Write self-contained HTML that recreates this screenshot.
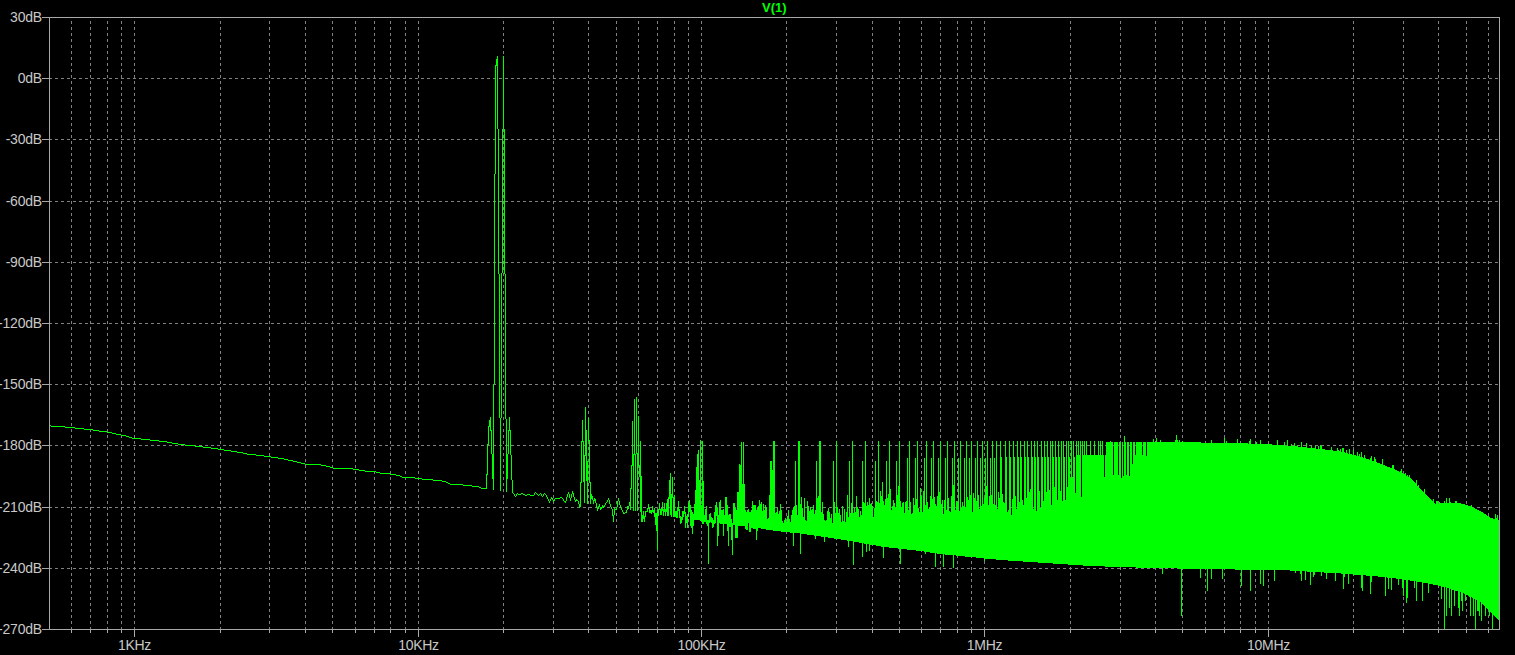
<!DOCTYPE html>
<html><head><meta charset="utf-8"><style>
html,body{margin:0;padding:0;background:#000;width:1515px;height:655px;overflow:hidden}
body{position:relative;font-family:"Liberation Sans",sans-serif;font-size:14px;color:#c8c8c8}
svg{position:absolute;left:0;top:0}
.yl{position:absolute;right:1473px;height:16px;line-height:16px;white-space:nowrap;text-align:right;letter-spacing:-0.2px}
.xl{position:absolute;top:637px;width:101px;text-align:center;line-height:16px;white-space:nowrap;letter-spacing:-0.3px}
.tt{position:absolute;left:0;top:0;color:#00ff00;font-weight:bold;font-size:13px;line-height:16px}
</style></head><body>
<svg width="1515" height="655" viewBox="0 0 1515 655" shape-rendering="crispEdges">
<path fill="#808080" d="M71 21h1v3h-1zM71 27h1v3h-1zM71 33h1v3h-1zM71 39h1v3h-1zM71 45h1v3h-1zM71 51h1v3h-1zM71 57h1v3h-1zM71 63h1v3h-1zM71 69h1v3h-1zM71 75h1v3h-1zM71 81h1v3h-1zM71 87h1v3h-1zM71 93h1v3h-1zM71 99h1v3h-1zM71 105h1v3h-1zM71 111h1v3h-1zM71 117h1v3h-1zM71 123h1v3h-1zM71 129h1v3h-1zM71 135h1v3h-1zM71 141h1v3h-1zM71 147h1v3h-1zM71 153h1v3h-1zM71 159h1v3h-1zM71 165h1v3h-1zM71 171h1v3h-1zM71 177h1v3h-1zM71 183h1v3h-1zM71 189h1v3h-1zM71 195h1v3h-1zM71 201h1v3h-1zM71 207h1v3h-1zM71 213h1v3h-1zM71 219h1v3h-1zM71 225h1v3h-1zM71 231h1v3h-1zM71 237h1v3h-1zM71 243h1v3h-1zM71 249h1v3h-1zM71 255h1v3h-1zM71 261h1v3h-1zM71 267h1v3h-1zM71 273h1v3h-1zM71 279h1v3h-1zM71 285h1v3h-1zM71 291h1v3h-1zM71 297h1v3h-1zM71 303h1v3h-1zM71 309h1v3h-1zM71 315h1v3h-1zM71 321h1v3h-1zM71 327h1v3h-1zM71 333h1v3h-1zM71 339h1v3h-1zM71 345h1v3h-1zM71 351h1v3h-1zM71 357h1v3h-1zM71 363h1v3h-1zM71 369h1v3h-1zM71 375h1v3h-1zM71 381h1v3h-1zM71 387h1v3h-1zM71 393h1v3h-1zM71 399h1v3h-1zM71 405h1v3h-1zM71 411h1v3h-1zM71 417h1v3h-1zM71 423h1v3h-1zM71 429h1v3h-1zM71 435h1v3h-1zM71 441h1v3h-1zM71 447h1v3h-1zM71 453h1v3h-1zM71 459h1v3h-1zM71 465h1v3h-1zM71 471h1v3h-1zM71 477h1v3h-1zM71 483h1v3h-1zM71 489h1v3h-1zM71 495h1v3h-1zM71 501h1v3h-1zM71 507h1v3h-1zM71 513h1v3h-1zM71 519h1v3h-1zM71 525h1v3h-1zM71 531h1v3h-1zM71 537h1v3h-1zM71 543h1v3h-1zM71 549h1v3h-1zM71 555h1v3h-1zM71 561h1v3h-1zM71 567h1v3h-1zM71 573h1v3h-1zM71 579h1v3h-1zM71 585h1v3h-1zM71 591h1v3h-1zM71 597h1v3h-1zM71 603h1v3h-1zM71 609h1v3h-1zM71 615h1v3h-1zM71 621h1v3h-1zM71 627h1v2h-1zM90 21h1v3h-1zM90 27h1v3h-1zM90 33h1v3h-1zM90 39h1v3h-1zM90 45h1v3h-1zM90 51h1v3h-1zM90 57h1v3h-1zM90 63h1v3h-1zM90 69h1v3h-1zM90 75h1v3h-1zM90 81h1v3h-1zM90 87h1v3h-1zM90 93h1v3h-1zM90 99h1v3h-1zM90 105h1v3h-1zM90 111h1v3h-1zM90 117h1v3h-1zM90 123h1v3h-1zM90 129h1v3h-1zM90 135h1v3h-1zM90 141h1v3h-1zM90 147h1v3h-1zM90 153h1v3h-1zM90 159h1v3h-1zM90 165h1v3h-1zM90 171h1v3h-1zM90 177h1v3h-1zM90 183h1v3h-1zM90 189h1v3h-1zM90 195h1v3h-1zM90 201h1v3h-1zM90 207h1v3h-1zM90 213h1v3h-1zM90 219h1v3h-1zM90 225h1v3h-1zM90 231h1v3h-1zM90 237h1v3h-1zM90 243h1v3h-1zM90 249h1v3h-1zM90 255h1v3h-1zM90 261h1v3h-1zM90 267h1v3h-1zM90 273h1v3h-1zM90 279h1v3h-1zM90 285h1v3h-1zM90 291h1v3h-1zM90 297h1v3h-1zM90 303h1v3h-1zM90 309h1v3h-1zM90 315h1v3h-1zM90 321h1v3h-1zM90 327h1v3h-1zM90 333h1v3h-1zM90 339h1v3h-1zM90 345h1v3h-1zM90 351h1v3h-1zM90 357h1v3h-1zM90 363h1v3h-1zM90 369h1v3h-1zM90 375h1v3h-1zM90 381h1v3h-1zM90 387h1v3h-1zM90 393h1v3h-1zM90 399h1v3h-1zM90 405h1v3h-1zM90 411h1v3h-1zM90 417h1v3h-1zM90 423h1v3h-1zM90 429h1v3h-1zM90 435h1v3h-1zM90 441h1v3h-1zM90 447h1v3h-1zM90 453h1v3h-1zM90 459h1v3h-1zM90 465h1v3h-1zM90 471h1v3h-1zM90 477h1v3h-1zM90 483h1v3h-1zM90 489h1v3h-1zM90 495h1v3h-1zM90 501h1v3h-1zM90 507h1v3h-1zM90 513h1v3h-1zM90 519h1v3h-1zM90 525h1v3h-1zM90 531h1v3h-1zM90 537h1v3h-1zM90 543h1v3h-1zM90 549h1v3h-1zM90 555h1v3h-1zM90 561h1v3h-1zM90 567h1v3h-1zM90 573h1v3h-1zM90 579h1v3h-1zM90 585h1v3h-1zM90 591h1v3h-1zM90 597h1v3h-1zM90 603h1v3h-1zM90 609h1v3h-1zM90 615h1v3h-1zM90 621h1v3h-1zM90 627h1v2h-1zM107 21h1v3h-1zM107 27h1v3h-1zM107 33h1v3h-1zM107 39h1v3h-1zM107 45h1v3h-1zM107 51h1v3h-1zM107 57h1v3h-1zM107 63h1v3h-1zM107 69h1v3h-1zM107 75h1v3h-1zM107 81h1v3h-1zM107 87h1v3h-1zM107 93h1v3h-1zM107 99h1v3h-1zM107 105h1v3h-1zM107 111h1v3h-1zM107 117h1v3h-1zM107 123h1v3h-1zM107 129h1v3h-1zM107 135h1v3h-1zM107 141h1v3h-1zM107 147h1v3h-1zM107 153h1v3h-1zM107 159h1v3h-1zM107 165h1v3h-1zM107 171h1v3h-1zM107 177h1v3h-1zM107 183h1v3h-1zM107 189h1v3h-1zM107 195h1v3h-1zM107 201h1v3h-1zM107 207h1v3h-1zM107 213h1v3h-1zM107 219h1v3h-1zM107 225h1v3h-1zM107 231h1v3h-1zM107 237h1v3h-1zM107 243h1v3h-1zM107 249h1v3h-1zM107 255h1v3h-1zM107 261h1v3h-1zM107 267h1v3h-1zM107 273h1v3h-1zM107 279h1v3h-1zM107 285h1v3h-1zM107 291h1v3h-1zM107 297h1v3h-1zM107 303h1v3h-1zM107 309h1v3h-1zM107 315h1v3h-1zM107 321h1v3h-1zM107 327h1v3h-1zM107 333h1v3h-1zM107 339h1v3h-1zM107 345h1v3h-1zM107 351h1v3h-1zM107 357h1v3h-1zM107 363h1v3h-1zM107 369h1v3h-1zM107 375h1v3h-1zM107 381h1v3h-1zM107 387h1v3h-1zM107 393h1v3h-1zM107 399h1v3h-1zM107 405h1v3h-1zM107 411h1v3h-1zM107 417h1v3h-1zM107 423h1v3h-1zM107 429h1v3h-1zM107 435h1v3h-1zM107 441h1v3h-1zM107 447h1v3h-1zM107 453h1v3h-1zM107 459h1v3h-1zM107 465h1v3h-1zM107 471h1v3h-1zM107 477h1v3h-1zM107 483h1v3h-1zM107 489h1v3h-1zM107 495h1v3h-1zM107 501h1v3h-1zM107 507h1v3h-1zM107 513h1v3h-1zM107 519h1v3h-1zM107 525h1v3h-1zM107 531h1v3h-1zM107 537h1v3h-1zM107 543h1v3h-1zM107 549h1v3h-1zM107 555h1v3h-1zM107 561h1v3h-1zM107 567h1v3h-1zM107 573h1v3h-1zM107 579h1v3h-1zM107 585h1v3h-1zM107 591h1v3h-1zM107 597h1v3h-1zM107 603h1v3h-1zM107 609h1v3h-1zM107 615h1v3h-1zM107 621h1v3h-1zM107 627h1v2h-1zM121 21h1v3h-1zM121 27h1v3h-1zM121 33h1v3h-1zM121 39h1v3h-1zM121 45h1v3h-1zM121 51h1v3h-1zM121 57h1v3h-1zM121 63h1v3h-1zM121 69h1v3h-1zM121 75h1v3h-1zM121 81h1v3h-1zM121 87h1v3h-1zM121 93h1v3h-1zM121 99h1v3h-1zM121 105h1v3h-1zM121 111h1v3h-1zM121 117h1v3h-1zM121 123h1v3h-1zM121 129h1v3h-1zM121 135h1v3h-1zM121 141h1v3h-1zM121 147h1v3h-1zM121 153h1v3h-1zM121 159h1v3h-1zM121 165h1v3h-1zM121 171h1v3h-1zM121 177h1v3h-1zM121 183h1v3h-1zM121 189h1v3h-1zM121 195h1v3h-1zM121 201h1v3h-1zM121 207h1v3h-1zM121 213h1v3h-1zM121 219h1v3h-1zM121 225h1v3h-1zM121 231h1v3h-1zM121 237h1v3h-1zM121 243h1v3h-1zM121 249h1v3h-1zM121 255h1v3h-1zM121 261h1v3h-1zM121 267h1v3h-1zM121 273h1v3h-1zM121 279h1v3h-1zM121 285h1v3h-1zM121 291h1v3h-1zM121 297h1v3h-1zM121 303h1v3h-1zM121 309h1v3h-1zM121 315h1v3h-1zM121 321h1v3h-1zM121 327h1v3h-1zM121 333h1v3h-1zM121 339h1v3h-1zM121 345h1v3h-1zM121 351h1v3h-1zM121 357h1v3h-1zM121 363h1v3h-1zM121 369h1v3h-1zM121 375h1v3h-1zM121 381h1v3h-1zM121 387h1v3h-1zM121 393h1v3h-1zM121 399h1v3h-1zM121 405h1v3h-1zM121 411h1v3h-1zM121 417h1v3h-1zM121 423h1v3h-1zM121 429h1v3h-1zM121 435h1v3h-1zM121 441h1v3h-1zM121 447h1v3h-1zM121 453h1v3h-1zM121 459h1v3h-1zM121 465h1v3h-1zM121 471h1v3h-1zM121 477h1v3h-1zM121 483h1v3h-1zM121 489h1v3h-1zM121 495h1v3h-1zM121 501h1v3h-1zM121 507h1v3h-1zM121 513h1v3h-1zM121 519h1v3h-1zM121 525h1v3h-1zM121 531h1v3h-1zM121 537h1v3h-1zM121 543h1v3h-1zM121 549h1v3h-1zM121 555h1v3h-1zM121 561h1v3h-1zM121 567h1v3h-1zM121 573h1v3h-1zM121 579h1v3h-1zM121 585h1v3h-1zM121 591h1v3h-1zM121 597h1v3h-1zM121 603h1v3h-1zM121 609h1v3h-1zM121 615h1v3h-1zM121 621h1v3h-1zM121 627h1v2h-1zM134 21h1v3h-1zM134 27h1v3h-1zM134 33h1v3h-1zM134 39h1v3h-1zM134 45h1v3h-1zM134 51h1v3h-1zM134 57h1v3h-1zM134 63h1v3h-1zM134 69h1v3h-1zM134 75h1v3h-1zM134 81h1v3h-1zM134 87h1v3h-1zM134 93h1v3h-1zM134 99h1v3h-1zM134 105h1v3h-1zM134 111h1v3h-1zM134 117h1v3h-1zM134 123h1v3h-1zM134 129h1v3h-1zM134 135h1v3h-1zM134 141h1v3h-1zM134 147h1v3h-1zM134 153h1v3h-1zM134 159h1v3h-1zM134 165h1v3h-1zM134 171h1v3h-1zM134 177h1v3h-1zM134 183h1v3h-1zM134 189h1v3h-1zM134 195h1v3h-1zM134 201h1v3h-1zM134 207h1v3h-1zM134 213h1v3h-1zM134 219h1v3h-1zM134 225h1v3h-1zM134 231h1v3h-1zM134 237h1v3h-1zM134 243h1v3h-1zM134 249h1v3h-1zM134 255h1v3h-1zM134 261h1v3h-1zM134 267h1v3h-1zM134 273h1v3h-1zM134 279h1v3h-1zM134 285h1v3h-1zM134 291h1v3h-1zM134 297h1v3h-1zM134 303h1v3h-1zM134 309h1v3h-1zM134 315h1v3h-1zM134 321h1v3h-1zM134 327h1v3h-1zM134 333h1v3h-1zM134 339h1v3h-1zM134 345h1v3h-1zM134 351h1v3h-1zM134 357h1v3h-1zM134 363h1v3h-1zM134 369h1v3h-1zM134 375h1v3h-1zM134 381h1v3h-1zM134 387h1v3h-1zM134 393h1v3h-1zM134 399h1v3h-1zM134 405h1v3h-1zM134 411h1v3h-1zM134 417h1v3h-1zM134 423h1v3h-1zM134 429h1v3h-1zM134 435h1v3h-1zM134 441h1v3h-1zM134 447h1v3h-1zM134 453h1v3h-1zM134 459h1v3h-1zM134 465h1v3h-1zM134 471h1v3h-1zM134 477h1v3h-1zM134 483h1v3h-1zM134 489h1v3h-1zM134 495h1v3h-1zM134 501h1v3h-1zM134 507h1v3h-1zM134 513h1v3h-1zM134 519h1v3h-1zM134 525h1v3h-1zM134 531h1v3h-1zM134 537h1v3h-1zM134 543h1v3h-1zM134 549h1v3h-1zM134 555h1v3h-1zM134 561h1v3h-1zM134 567h1v3h-1zM134 573h1v3h-1zM134 579h1v3h-1zM134 585h1v3h-1zM134 591h1v3h-1zM134 597h1v3h-1zM134 603h1v3h-1zM134 609h1v3h-1zM134 615h1v3h-1zM134 621h1v3h-1zM134 627h1v2h-1zM220 21h1v3h-1zM220 27h1v3h-1zM220 33h1v3h-1zM220 39h1v3h-1zM220 45h1v3h-1zM220 51h1v3h-1zM220 57h1v3h-1zM220 63h1v3h-1zM220 69h1v3h-1zM220 75h1v3h-1zM220 81h1v3h-1zM220 87h1v3h-1zM220 93h1v3h-1zM220 99h1v3h-1zM220 105h1v3h-1zM220 111h1v3h-1zM220 117h1v3h-1zM220 123h1v3h-1zM220 129h1v3h-1zM220 135h1v3h-1zM220 141h1v3h-1zM220 147h1v3h-1zM220 153h1v3h-1zM220 159h1v3h-1zM220 165h1v3h-1zM220 171h1v3h-1zM220 177h1v3h-1zM220 183h1v3h-1zM220 189h1v3h-1zM220 195h1v3h-1zM220 201h1v3h-1zM220 207h1v3h-1zM220 213h1v3h-1zM220 219h1v3h-1zM220 225h1v3h-1zM220 231h1v3h-1zM220 237h1v3h-1zM220 243h1v3h-1zM220 249h1v3h-1zM220 255h1v3h-1zM220 261h1v3h-1zM220 267h1v3h-1zM220 273h1v3h-1zM220 279h1v3h-1zM220 285h1v3h-1zM220 291h1v3h-1zM220 297h1v3h-1zM220 303h1v3h-1zM220 309h1v3h-1zM220 315h1v3h-1zM220 321h1v3h-1zM220 327h1v3h-1zM220 333h1v3h-1zM220 339h1v3h-1zM220 345h1v3h-1zM220 351h1v3h-1zM220 357h1v3h-1zM220 363h1v3h-1zM220 369h1v3h-1zM220 375h1v3h-1zM220 381h1v3h-1zM220 387h1v3h-1zM220 393h1v3h-1zM220 399h1v3h-1zM220 405h1v3h-1zM220 411h1v3h-1zM220 417h1v3h-1zM220 423h1v3h-1zM220 429h1v3h-1zM220 435h1v3h-1zM220 441h1v3h-1zM220 447h1v3h-1zM220 453h1v3h-1zM220 459h1v3h-1zM220 465h1v3h-1zM220 471h1v3h-1zM220 477h1v3h-1zM220 483h1v3h-1zM220 489h1v3h-1zM220 495h1v3h-1zM220 501h1v3h-1zM220 507h1v3h-1zM220 513h1v3h-1zM220 519h1v3h-1zM220 525h1v3h-1zM220 531h1v3h-1zM220 537h1v3h-1zM220 543h1v3h-1zM220 549h1v3h-1zM220 555h1v3h-1zM220 561h1v3h-1zM220 567h1v3h-1zM220 573h1v3h-1zM220 579h1v3h-1zM220 585h1v3h-1zM220 591h1v3h-1zM220 597h1v3h-1zM220 603h1v3h-1zM220 609h1v3h-1zM220 615h1v3h-1zM220 621h1v3h-1zM220 627h1v2h-1zM269 21h1v3h-1zM269 27h1v3h-1zM269 33h1v3h-1zM269 39h1v3h-1zM269 45h1v3h-1zM269 51h1v3h-1zM269 57h1v3h-1zM269 63h1v3h-1zM269 69h1v3h-1zM269 75h1v3h-1zM269 81h1v3h-1zM269 87h1v3h-1zM269 93h1v3h-1zM269 99h1v3h-1zM269 105h1v3h-1zM269 111h1v3h-1zM269 117h1v3h-1zM269 123h1v3h-1zM269 129h1v3h-1zM269 135h1v3h-1zM269 141h1v3h-1zM269 147h1v3h-1zM269 153h1v3h-1zM269 159h1v3h-1zM269 165h1v3h-1zM269 171h1v3h-1zM269 177h1v3h-1zM269 183h1v3h-1zM269 189h1v3h-1zM269 195h1v3h-1zM269 201h1v3h-1zM269 207h1v3h-1zM269 213h1v3h-1zM269 219h1v3h-1zM269 225h1v3h-1zM269 231h1v3h-1zM269 237h1v3h-1zM269 243h1v3h-1zM269 249h1v3h-1zM269 255h1v3h-1zM269 261h1v3h-1zM269 267h1v3h-1zM269 273h1v3h-1zM269 279h1v3h-1zM269 285h1v3h-1zM269 291h1v3h-1zM269 297h1v3h-1zM269 303h1v3h-1zM269 309h1v3h-1zM269 315h1v3h-1zM269 321h1v3h-1zM269 327h1v3h-1zM269 333h1v3h-1zM269 339h1v3h-1zM269 345h1v3h-1zM269 351h1v3h-1zM269 357h1v3h-1zM269 363h1v3h-1zM269 369h1v3h-1zM269 375h1v3h-1zM269 381h1v3h-1zM269 387h1v3h-1zM269 393h1v3h-1zM269 399h1v3h-1zM269 405h1v3h-1zM269 411h1v3h-1zM269 417h1v3h-1zM269 423h1v3h-1zM269 429h1v3h-1zM269 435h1v3h-1zM269 441h1v3h-1zM269 447h1v3h-1zM269 453h1v3h-1zM269 459h1v3h-1zM269 465h1v3h-1zM269 471h1v3h-1zM269 477h1v3h-1zM269 483h1v3h-1zM269 489h1v3h-1zM269 495h1v3h-1zM269 501h1v3h-1zM269 507h1v3h-1zM269 513h1v3h-1zM269 519h1v3h-1zM269 525h1v3h-1zM269 531h1v3h-1zM269 537h1v3h-1zM269 543h1v3h-1zM269 549h1v3h-1zM269 555h1v3h-1zM269 561h1v3h-1zM269 567h1v3h-1zM269 573h1v3h-1zM269 579h1v3h-1zM269 585h1v3h-1zM269 591h1v3h-1zM269 597h1v3h-1zM269 603h1v3h-1zM269 609h1v3h-1zM269 615h1v3h-1zM269 621h1v3h-1zM269 627h1v2h-1zM305 21h1v3h-1zM305 27h1v3h-1zM305 33h1v3h-1zM305 39h1v3h-1zM305 45h1v3h-1zM305 51h1v3h-1zM305 57h1v3h-1zM305 63h1v3h-1zM305 69h1v3h-1zM305 75h1v3h-1zM305 81h1v3h-1zM305 87h1v3h-1zM305 93h1v3h-1zM305 99h1v3h-1zM305 105h1v3h-1zM305 111h1v3h-1zM305 117h1v3h-1zM305 123h1v3h-1zM305 129h1v3h-1zM305 135h1v3h-1zM305 141h1v3h-1zM305 147h1v3h-1zM305 153h1v3h-1zM305 159h1v3h-1zM305 165h1v3h-1zM305 171h1v3h-1zM305 177h1v3h-1zM305 183h1v3h-1zM305 189h1v3h-1zM305 195h1v3h-1zM305 201h1v3h-1zM305 207h1v3h-1zM305 213h1v3h-1zM305 219h1v3h-1zM305 225h1v3h-1zM305 231h1v3h-1zM305 237h1v3h-1zM305 243h1v3h-1zM305 249h1v3h-1zM305 255h1v3h-1zM305 261h1v3h-1zM305 267h1v3h-1zM305 273h1v3h-1zM305 279h1v3h-1zM305 285h1v3h-1zM305 291h1v3h-1zM305 297h1v3h-1zM305 303h1v3h-1zM305 309h1v3h-1zM305 315h1v3h-1zM305 321h1v3h-1zM305 327h1v3h-1zM305 333h1v3h-1zM305 339h1v3h-1zM305 345h1v3h-1zM305 351h1v3h-1zM305 357h1v3h-1zM305 363h1v3h-1zM305 369h1v3h-1zM305 375h1v3h-1zM305 381h1v3h-1zM305 387h1v3h-1zM305 393h1v3h-1zM305 399h1v3h-1zM305 405h1v3h-1zM305 411h1v3h-1zM305 417h1v3h-1zM305 423h1v3h-1zM305 429h1v3h-1zM305 435h1v3h-1zM305 441h1v3h-1zM305 447h1v3h-1zM305 453h1v3h-1zM305 459h1v3h-1zM305 465h1v3h-1zM305 471h1v3h-1zM305 477h1v3h-1zM305 483h1v3h-1zM305 489h1v3h-1zM305 495h1v3h-1zM305 501h1v3h-1zM305 507h1v3h-1zM305 513h1v3h-1zM305 519h1v3h-1zM305 525h1v3h-1zM305 531h1v3h-1zM305 537h1v3h-1zM305 543h1v3h-1zM305 549h1v3h-1zM305 555h1v3h-1zM305 561h1v3h-1zM305 567h1v3h-1zM305 573h1v3h-1zM305 579h1v3h-1zM305 585h1v3h-1zM305 591h1v3h-1zM305 597h1v3h-1zM305 603h1v3h-1zM305 609h1v3h-1zM305 615h1v3h-1zM305 621h1v3h-1zM305 627h1v2h-1zM332 21h1v3h-1zM332 27h1v3h-1zM332 33h1v3h-1zM332 39h1v3h-1zM332 45h1v3h-1zM332 51h1v3h-1zM332 57h1v3h-1zM332 63h1v3h-1zM332 69h1v3h-1zM332 75h1v3h-1zM332 81h1v3h-1zM332 87h1v3h-1zM332 93h1v3h-1zM332 99h1v3h-1zM332 105h1v3h-1zM332 111h1v3h-1zM332 117h1v3h-1zM332 123h1v3h-1zM332 129h1v3h-1zM332 135h1v3h-1zM332 141h1v3h-1zM332 147h1v3h-1zM332 153h1v3h-1zM332 159h1v3h-1zM332 165h1v3h-1zM332 171h1v3h-1zM332 177h1v3h-1zM332 183h1v3h-1zM332 189h1v3h-1zM332 195h1v3h-1zM332 201h1v3h-1zM332 207h1v3h-1zM332 213h1v3h-1zM332 219h1v3h-1zM332 225h1v3h-1zM332 231h1v3h-1zM332 237h1v3h-1zM332 243h1v3h-1zM332 249h1v3h-1zM332 255h1v3h-1zM332 261h1v3h-1zM332 267h1v3h-1zM332 273h1v3h-1zM332 279h1v3h-1zM332 285h1v3h-1zM332 291h1v3h-1zM332 297h1v3h-1zM332 303h1v3h-1zM332 309h1v3h-1zM332 315h1v3h-1zM332 321h1v3h-1zM332 327h1v3h-1zM332 333h1v3h-1zM332 339h1v3h-1zM332 345h1v3h-1zM332 351h1v3h-1zM332 357h1v3h-1zM332 363h1v3h-1zM332 369h1v3h-1zM332 375h1v3h-1zM332 381h1v3h-1zM332 387h1v3h-1zM332 393h1v3h-1zM332 399h1v3h-1zM332 405h1v3h-1zM332 411h1v3h-1zM332 417h1v3h-1zM332 423h1v3h-1zM332 429h1v3h-1zM332 435h1v3h-1zM332 441h1v3h-1zM332 447h1v3h-1zM332 453h1v3h-1zM332 459h1v3h-1zM332 465h1v3h-1zM332 471h1v3h-1zM332 477h1v3h-1zM332 483h1v3h-1zM332 489h1v3h-1zM332 495h1v3h-1zM332 501h1v3h-1zM332 507h1v3h-1zM332 513h1v3h-1zM332 519h1v3h-1zM332 525h1v3h-1zM332 531h1v3h-1zM332 537h1v3h-1zM332 543h1v3h-1zM332 549h1v3h-1zM332 555h1v3h-1zM332 561h1v3h-1zM332 567h1v3h-1zM332 573h1v3h-1zM332 579h1v3h-1zM332 585h1v3h-1zM332 591h1v3h-1zM332 597h1v3h-1zM332 603h1v3h-1zM332 609h1v3h-1zM332 615h1v3h-1zM332 621h1v3h-1zM332 627h1v2h-1zM355 21h1v3h-1zM355 27h1v3h-1zM355 33h1v3h-1zM355 39h1v3h-1zM355 45h1v3h-1zM355 51h1v3h-1zM355 57h1v3h-1zM355 63h1v3h-1zM355 69h1v3h-1zM355 75h1v3h-1zM355 81h1v3h-1zM355 87h1v3h-1zM355 93h1v3h-1zM355 99h1v3h-1zM355 105h1v3h-1zM355 111h1v3h-1zM355 117h1v3h-1zM355 123h1v3h-1zM355 129h1v3h-1zM355 135h1v3h-1zM355 141h1v3h-1zM355 147h1v3h-1zM355 153h1v3h-1zM355 159h1v3h-1zM355 165h1v3h-1zM355 171h1v3h-1zM355 177h1v3h-1zM355 183h1v3h-1zM355 189h1v3h-1zM355 195h1v3h-1zM355 201h1v3h-1zM355 207h1v3h-1zM355 213h1v3h-1zM355 219h1v3h-1zM355 225h1v3h-1zM355 231h1v3h-1zM355 237h1v3h-1zM355 243h1v3h-1zM355 249h1v3h-1zM355 255h1v3h-1zM355 261h1v3h-1zM355 267h1v3h-1zM355 273h1v3h-1zM355 279h1v3h-1zM355 285h1v3h-1zM355 291h1v3h-1zM355 297h1v3h-1zM355 303h1v3h-1zM355 309h1v3h-1zM355 315h1v3h-1zM355 321h1v3h-1zM355 327h1v3h-1zM355 333h1v3h-1zM355 339h1v3h-1zM355 345h1v3h-1zM355 351h1v3h-1zM355 357h1v3h-1zM355 363h1v3h-1zM355 369h1v3h-1zM355 375h1v3h-1zM355 381h1v3h-1zM355 387h1v3h-1zM355 393h1v3h-1zM355 399h1v3h-1zM355 405h1v3h-1zM355 411h1v3h-1zM355 417h1v3h-1zM355 423h1v3h-1zM355 429h1v3h-1zM355 435h1v3h-1zM355 441h1v3h-1zM355 447h1v3h-1zM355 453h1v3h-1zM355 459h1v3h-1zM355 465h1v3h-1zM355 471h1v3h-1zM355 477h1v3h-1zM355 483h1v3h-1zM355 489h1v3h-1zM355 495h1v3h-1zM355 501h1v3h-1zM355 507h1v3h-1zM355 513h1v3h-1zM355 519h1v3h-1zM355 525h1v3h-1zM355 531h1v3h-1zM355 537h1v3h-1zM355 543h1v3h-1zM355 549h1v3h-1zM355 555h1v3h-1zM355 561h1v3h-1zM355 567h1v3h-1zM355 573h1v3h-1zM355 579h1v3h-1zM355 585h1v3h-1zM355 591h1v3h-1zM355 597h1v3h-1zM355 603h1v3h-1zM355 609h1v3h-1zM355 615h1v3h-1zM355 621h1v3h-1zM355 627h1v2h-1zM374 21h1v3h-1zM374 27h1v3h-1zM374 33h1v3h-1zM374 39h1v3h-1zM374 45h1v3h-1zM374 51h1v3h-1zM374 57h1v3h-1zM374 63h1v3h-1zM374 69h1v3h-1zM374 75h1v3h-1zM374 81h1v3h-1zM374 87h1v3h-1zM374 93h1v3h-1zM374 99h1v3h-1zM374 105h1v3h-1zM374 111h1v3h-1zM374 117h1v3h-1zM374 123h1v3h-1zM374 129h1v3h-1zM374 135h1v3h-1zM374 141h1v3h-1zM374 147h1v3h-1zM374 153h1v3h-1zM374 159h1v3h-1zM374 165h1v3h-1zM374 171h1v3h-1zM374 177h1v3h-1zM374 183h1v3h-1zM374 189h1v3h-1zM374 195h1v3h-1zM374 201h1v3h-1zM374 207h1v3h-1zM374 213h1v3h-1zM374 219h1v3h-1zM374 225h1v3h-1zM374 231h1v3h-1zM374 237h1v3h-1zM374 243h1v3h-1zM374 249h1v3h-1zM374 255h1v3h-1zM374 261h1v3h-1zM374 267h1v3h-1zM374 273h1v3h-1zM374 279h1v3h-1zM374 285h1v3h-1zM374 291h1v3h-1zM374 297h1v3h-1zM374 303h1v3h-1zM374 309h1v3h-1zM374 315h1v3h-1zM374 321h1v3h-1zM374 327h1v3h-1zM374 333h1v3h-1zM374 339h1v3h-1zM374 345h1v3h-1zM374 351h1v3h-1zM374 357h1v3h-1zM374 363h1v3h-1zM374 369h1v3h-1zM374 375h1v3h-1zM374 381h1v3h-1zM374 387h1v3h-1zM374 393h1v3h-1zM374 399h1v3h-1zM374 405h1v3h-1zM374 411h1v3h-1zM374 417h1v3h-1zM374 423h1v3h-1zM374 429h1v3h-1zM374 435h1v3h-1zM374 441h1v3h-1zM374 447h1v3h-1zM374 453h1v3h-1zM374 459h1v3h-1zM374 465h1v3h-1zM374 471h1v3h-1zM374 477h1v3h-1zM374 483h1v3h-1zM374 489h1v3h-1zM374 495h1v3h-1zM374 501h1v3h-1zM374 507h1v3h-1zM374 513h1v3h-1zM374 519h1v3h-1zM374 525h1v3h-1zM374 531h1v3h-1zM374 537h1v3h-1zM374 543h1v3h-1zM374 549h1v3h-1zM374 555h1v3h-1zM374 561h1v3h-1zM374 567h1v3h-1zM374 573h1v3h-1zM374 579h1v3h-1zM374 585h1v3h-1zM374 591h1v3h-1zM374 597h1v3h-1zM374 603h1v3h-1zM374 609h1v3h-1zM374 615h1v3h-1zM374 621h1v3h-1zM374 627h1v2h-1zM390 21h1v3h-1zM390 27h1v3h-1zM390 33h1v3h-1zM390 39h1v3h-1zM390 45h1v3h-1zM390 51h1v3h-1zM390 57h1v3h-1zM390 63h1v3h-1zM390 69h1v3h-1zM390 75h1v3h-1zM390 81h1v3h-1zM390 87h1v3h-1zM390 93h1v3h-1zM390 99h1v3h-1zM390 105h1v3h-1zM390 111h1v3h-1zM390 117h1v3h-1zM390 123h1v3h-1zM390 129h1v3h-1zM390 135h1v3h-1zM390 141h1v3h-1zM390 147h1v3h-1zM390 153h1v3h-1zM390 159h1v3h-1zM390 165h1v3h-1zM390 171h1v3h-1zM390 177h1v3h-1zM390 183h1v3h-1zM390 189h1v3h-1zM390 195h1v3h-1zM390 201h1v3h-1zM390 207h1v3h-1zM390 213h1v3h-1zM390 219h1v3h-1zM390 225h1v3h-1zM390 231h1v3h-1zM390 237h1v3h-1zM390 243h1v3h-1zM390 249h1v3h-1zM390 255h1v3h-1zM390 261h1v3h-1zM390 267h1v3h-1zM390 273h1v3h-1zM390 279h1v3h-1zM390 285h1v3h-1zM390 291h1v3h-1zM390 297h1v3h-1zM390 303h1v3h-1zM390 309h1v3h-1zM390 315h1v3h-1zM390 321h1v3h-1zM390 327h1v3h-1zM390 333h1v3h-1zM390 339h1v3h-1zM390 345h1v3h-1zM390 351h1v3h-1zM390 357h1v3h-1zM390 363h1v3h-1zM390 369h1v3h-1zM390 375h1v3h-1zM390 381h1v3h-1zM390 387h1v3h-1zM390 393h1v3h-1zM390 399h1v3h-1zM390 405h1v3h-1zM390 411h1v3h-1zM390 417h1v3h-1zM390 423h1v3h-1zM390 429h1v3h-1zM390 435h1v3h-1zM390 441h1v3h-1zM390 447h1v3h-1zM390 453h1v3h-1zM390 459h1v3h-1zM390 465h1v3h-1zM390 471h1v3h-1zM390 477h1v3h-1zM390 483h1v3h-1zM390 489h1v3h-1zM390 495h1v3h-1zM390 501h1v3h-1zM390 507h1v3h-1zM390 513h1v3h-1zM390 519h1v3h-1zM390 525h1v3h-1zM390 531h1v3h-1zM390 537h1v3h-1zM390 543h1v3h-1zM390 549h1v3h-1zM390 555h1v3h-1zM390 561h1v3h-1zM390 567h1v3h-1zM390 573h1v3h-1zM390 579h1v3h-1zM390 585h1v3h-1zM390 591h1v3h-1zM390 597h1v3h-1zM390 603h1v3h-1zM390 609h1v3h-1zM390 615h1v3h-1zM390 621h1v3h-1zM390 627h1v2h-1zM405 21h1v3h-1zM405 27h1v3h-1zM405 33h1v3h-1zM405 39h1v3h-1zM405 45h1v3h-1zM405 51h1v3h-1zM405 57h1v3h-1zM405 63h1v3h-1zM405 69h1v3h-1zM405 75h1v3h-1zM405 81h1v3h-1zM405 87h1v3h-1zM405 93h1v3h-1zM405 99h1v3h-1zM405 105h1v3h-1zM405 111h1v3h-1zM405 117h1v3h-1zM405 123h1v3h-1zM405 129h1v3h-1zM405 135h1v3h-1zM405 141h1v3h-1zM405 147h1v3h-1zM405 153h1v3h-1zM405 159h1v3h-1zM405 165h1v3h-1zM405 171h1v3h-1zM405 177h1v3h-1zM405 183h1v3h-1zM405 189h1v3h-1zM405 195h1v3h-1zM405 201h1v3h-1zM405 207h1v3h-1zM405 213h1v3h-1zM405 219h1v3h-1zM405 225h1v3h-1zM405 231h1v3h-1zM405 237h1v3h-1zM405 243h1v3h-1zM405 249h1v3h-1zM405 255h1v3h-1zM405 261h1v3h-1zM405 267h1v3h-1zM405 273h1v3h-1zM405 279h1v3h-1zM405 285h1v3h-1zM405 291h1v3h-1zM405 297h1v3h-1zM405 303h1v3h-1zM405 309h1v3h-1zM405 315h1v3h-1zM405 321h1v3h-1zM405 327h1v3h-1zM405 333h1v3h-1zM405 339h1v3h-1zM405 345h1v3h-1zM405 351h1v3h-1zM405 357h1v3h-1zM405 363h1v3h-1zM405 369h1v3h-1zM405 375h1v3h-1zM405 381h1v3h-1zM405 387h1v3h-1zM405 393h1v3h-1zM405 399h1v3h-1zM405 405h1v3h-1zM405 411h1v3h-1zM405 417h1v3h-1zM405 423h1v3h-1zM405 429h1v3h-1zM405 435h1v3h-1zM405 441h1v3h-1zM405 447h1v3h-1zM405 453h1v3h-1zM405 459h1v3h-1zM405 465h1v3h-1zM405 471h1v3h-1zM405 477h1v3h-1zM405 483h1v3h-1zM405 489h1v3h-1zM405 495h1v3h-1zM405 501h1v3h-1zM405 507h1v3h-1zM405 513h1v3h-1zM405 519h1v3h-1zM405 525h1v3h-1zM405 531h1v3h-1zM405 537h1v3h-1zM405 543h1v3h-1zM405 549h1v3h-1zM405 555h1v3h-1zM405 561h1v3h-1zM405 567h1v3h-1zM405 573h1v3h-1zM405 579h1v3h-1zM405 585h1v3h-1zM405 591h1v3h-1zM405 597h1v3h-1zM405 603h1v3h-1zM405 609h1v3h-1zM405 615h1v3h-1zM405 621h1v3h-1zM405 627h1v2h-1zM418 21h1v3h-1zM418 27h1v3h-1zM418 33h1v3h-1zM418 39h1v3h-1zM418 45h1v3h-1zM418 51h1v3h-1zM418 57h1v3h-1zM418 63h1v3h-1zM418 69h1v3h-1zM418 75h1v3h-1zM418 81h1v3h-1zM418 87h1v3h-1zM418 93h1v3h-1zM418 99h1v3h-1zM418 105h1v3h-1zM418 111h1v3h-1zM418 117h1v3h-1zM418 123h1v3h-1zM418 129h1v3h-1zM418 135h1v3h-1zM418 141h1v3h-1zM418 147h1v3h-1zM418 153h1v3h-1zM418 159h1v3h-1zM418 165h1v3h-1zM418 171h1v3h-1zM418 177h1v3h-1zM418 183h1v3h-1zM418 189h1v3h-1zM418 195h1v3h-1zM418 201h1v3h-1zM418 207h1v3h-1zM418 213h1v3h-1zM418 219h1v3h-1zM418 225h1v3h-1zM418 231h1v3h-1zM418 237h1v3h-1zM418 243h1v3h-1zM418 249h1v3h-1zM418 255h1v3h-1zM418 261h1v3h-1zM418 267h1v3h-1zM418 273h1v3h-1zM418 279h1v3h-1zM418 285h1v3h-1zM418 291h1v3h-1zM418 297h1v3h-1zM418 303h1v3h-1zM418 309h1v3h-1zM418 315h1v3h-1zM418 321h1v3h-1zM418 327h1v3h-1zM418 333h1v3h-1zM418 339h1v3h-1zM418 345h1v3h-1zM418 351h1v3h-1zM418 357h1v3h-1zM418 363h1v3h-1zM418 369h1v3h-1zM418 375h1v3h-1zM418 381h1v3h-1zM418 387h1v3h-1zM418 393h1v3h-1zM418 399h1v3h-1zM418 405h1v3h-1zM418 411h1v3h-1zM418 417h1v3h-1zM418 423h1v3h-1zM418 429h1v3h-1zM418 435h1v3h-1zM418 441h1v3h-1zM418 447h1v3h-1zM418 453h1v3h-1zM418 459h1v3h-1zM418 465h1v3h-1zM418 471h1v3h-1zM418 477h1v3h-1zM418 483h1v3h-1zM418 489h1v3h-1zM418 495h1v3h-1zM418 501h1v3h-1zM418 507h1v3h-1zM418 513h1v3h-1zM418 519h1v3h-1zM418 525h1v3h-1zM418 531h1v3h-1zM418 537h1v3h-1zM418 543h1v3h-1zM418 549h1v3h-1zM418 555h1v3h-1zM418 561h1v3h-1zM418 567h1v3h-1zM418 573h1v3h-1zM418 579h1v3h-1zM418 585h1v3h-1zM418 591h1v3h-1zM418 597h1v3h-1zM418 603h1v3h-1zM418 609h1v3h-1zM418 615h1v3h-1zM418 621h1v3h-1zM418 627h1v2h-1zM503 21h1v3h-1zM503 27h1v3h-1zM503 33h1v3h-1zM503 39h1v3h-1zM503 45h1v3h-1zM503 51h1v3h-1zM503 57h1v3h-1zM503 63h1v3h-1zM503 69h1v3h-1zM503 75h1v3h-1zM503 81h1v3h-1zM503 87h1v3h-1zM503 93h1v3h-1zM503 99h1v3h-1zM503 105h1v3h-1zM503 111h1v3h-1zM503 117h1v3h-1zM503 123h1v3h-1zM503 129h1v3h-1zM503 135h1v3h-1zM503 141h1v3h-1zM503 147h1v3h-1zM503 153h1v3h-1zM503 159h1v3h-1zM503 165h1v3h-1zM503 171h1v3h-1zM503 177h1v3h-1zM503 183h1v3h-1zM503 189h1v3h-1zM503 195h1v3h-1zM503 201h1v3h-1zM503 207h1v3h-1zM503 213h1v3h-1zM503 219h1v3h-1zM503 225h1v3h-1zM503 231h1v3h-1zM503 237h1v3h-1zM503 243h1v3h-1zM503 249h1v3h-1zM503 255h1v3h-1zM503 261h1v3h-1zM503 267h1v3h-1zM503 273h1v3h-1zM503 279h1v3h-1zM503 285h1v3h-1zM503 291h1v3h-1zM503 297h1v3h-1zM503 303h1v3h-1zM503 309h1v3h-1zM503 315h1v3h-1zM503 321h1v3h-1zM503 327h1v3h-1zM503 333h1v3h-1zM503 339h1v3h-1zM503 345h1v3h-1zM503 351h1v3h-1zM503 357h1v3h-1zM503 363h1v3h-1zM503 369h1v3h-1zM503 375h1v3h-1zM503 381h1v3h-1zM503 387h1v3h-1zM503 393h1v3h-1zM503 399h1v3h-1zM503 405h1v3h-1zM503 411h1v3h-1zM503 417h1v3h-1zM503 423h1v3h-1zM503 429h1v3h-1zM503 435h1v3h-1zM503 441h1v3h-1zM503 447h1v3h-1zM503 453h1v3h-1zM503 459h1v3h-1zM503 465h1v3h-1zM503 471h1v3h-1zM503 477h1v3h-1zM503 483h1v3h-1zM503 489h1v3h-1zM503 495h1v3h-1zM503 501h1v3h-1zM503 507h1v3h-1zM503 513h1v3h-1zM503 519h1v3h-1zM503 525h1v3h-1zM503 531h1v3h-1zM503 537h1v3h-1zM503 543h1v3h-1zM503 549h1v3h-1zM503 555h1v3h-1zM503 561h1v3h-1zM503 567h1v3h-1zM503 573h1v3h-1zM503 579h1v3h-1zM503 585h1v3h-1zM503 591h1v3h-1zM503 597h1v3h-1zM503 603h1v3h-1zM503 609h1v3h-1zM503 615h1v3h-1zM503 621h1v3h-1zM503 627h1v2h-1zM553 21h1v3h-1zM553 27h1v3h-1zM553 33h1v3h-1zM553 39h1v3h-1zM553 45h1v3h-1zM553 51h1v3h-1zM553 57h1v3h-1zM553 63h1v3h-1zM553 69h1v3h-1zM553 75h1v3h-1zM553 81h1v3h-1zM553 87h1v3h-1zM553 93h1v3h-1zM553 99h1v3h-1zM553 105h1v3h-1zM553 111h1v3h-1zM553 117h1v3h-1zM553 123h1v3h-1zM553 129h1v3h-1zM553 135h1v3h-1zM553 141h1v3h-1zM553 147h1v3h-1zM553 153h1v3h-1zM553 159h1v3h-1zM553 165h1v3h-1zM553 171h1v3h-1zM553 177h1v3h-1zM553 183h1v3h-1zM553 189h1v3h-1zM553 195h1v3h-1zM553 201h1v3h-1zM553 207h1v3h-1zM553 213h1v3h-1zM553 219h1v3h-1zM553 225h1v3h-1zM553 231h1v3h-1zM553 237h1v3h-1zM553 243h1v3h-1zM553 249h1v3h-1zM553 255h1v3h-1zM553 261h1v3h-1zM553 267h1v3h-1zM553 273h1v3h-1zM553 279h1v3h-1zM553 285h1v3h-1zM553 291h1v3h-1zM553 297h1v3h-1zM553 303h1v3h-1zM553 309h1v3h-1zM553 315h1v3h-1zM553 321h1v3h-1zM553 327h1v3h-1zM553 333h1v3h-1zM553 339h1v3h-1zM553 345h1v3h-1zM553 351h1v3h-1zM553 357h1v3h-1zM553 363h1v3h-1zM553 369h1v3h-1zM553 375h1v3h-1zM553 381h1v3h-1zM553 387h1v3h-1zM553 393h1v3h-1zM553 399h1v3h-1zM553 405h1v3h-1zM553 411h1v3h-1zM553 417h1v3h-1zM553 423h1v3h-1zM553 429h1v3h-1zM553 435h1v3h-1zM553 441h1v3h-1zM553 447h1v3h-1zM553 453h1v3h-1zM553 459h1v3h-1zM553 465h1v3h-1zM553 471h1v3h-1zM553 477h1v3h-1zM553 483h1v3h-1zM553 489h1v3h-1zM553 495h1v3h-1zM553 501h1v3h-1zM553 507h1v3h-1zM553 513h1v3h-1zM553 519h1v3h-1zM553 525h1v3h-1zM553 531h1v3h-1zM553 537h1v3h-1zM553 543h1v3h-1zM553 549h1v3h-1zM553 555h1v3h-1zM553 561h1v3h-1zM553 567h1v3h-1zM553 573h1v3h-1zM553 579h1v3h-1zM553 585h1v3h-1zM553 591h1v3h-1zM553 597h1v3h-1zM553 603h1v3h-1zM553 609h1v3h-1zM553 615h1v3h-1zM553 621h1v3h-1zM553 627h1v2h-1zM588 21h1v3h-1zM588 27h1v3h-1zM588 33h1v3h-1zM588 39h1v3h-1zM588 45h1v3h-1zM588 51h1v3h-1zM588 57h1v3h-1zM588 63h1v3h-1zM588 69h1v3h-1zM588 75h1v3h-1zM588 81h1v3h-1zM588 87h1v3h-1zM588 93h1v3h-1zM588 99h1v3h-1zM588 105h1v3h-1zM588 111h1v3h-1zM588 117h1v3h-1zM588 123h1v3h-1zM588 129h1v3h-1zM588 135h1v3h-1zM588 141h1v3h-1zM588 147h1v3h-1zM588 153h1v3h-1zM588 159h1v3h-1zM588 165h1v3h-1zM588 171h1v3h-1zM588 177h1v3h-1zM588 183h1v3h-1zM588 189h1v3h-1zM588 195h1v3h-1zM588 201h1v3h-1zM588 207h1v3h-1zM588 213h1v3h-1zM588 219h1v3h-1zM588 225h1v3h-1zM588 231h1v3h-1zM588 237h1v3h-1zM588 243h1v3h-1zM588 249h1v3h-1zM588 255h1v3h-1zM588 261h1v3h-1zM588 267h1v3h-1zM588 273h1v3h-1zM588 279h1v3h-1zM588 285h1v3h-1zM588 291h1v3h-1zM588 297h1v3h-1zM588 303h1v3h-1zM588 309h1v3h-1zM588 315h1v3h-1zM588 321h1v3h-1zM588 327h1v3h-1zM588 333h1v3h-1zM588 339h1v3h-1zM588 345h1v3h-1zM588 351h1v3h-1zM588 357h1v3h-1zM588 363h1v3h-1zM588 369h1v3h-1zM588 375h1v3h-1zM588 381h1v3h-1zM588 387h1v3h-1zM588 393h1v3h-1zM588 399h1v3h-1zM588 405h1v3h-1zM588 411h1v3h-1zM588 417h1v3h-1zM588 423h1v3h-1zM588 429h1v3h-1zM588 435h1v3h-1zM588 441h1v3h-1zM588 447h1v3h-1zM588 453h1v3h-1zM588 459h1v3h-1zM588 465h1v3h-1zM588 471h1v3h-1zM588 477h1v3h-1zM588 483h1v3h-1zM588 489h1v3h-1zM588 495h1v3h-1zM588 501h1v3h-1zM588 507h1v3h-1zM588 513h1v3h-1zM588 519h1v3h-1zM588 525h1v3h-1zM588 531h1v3h-1zM588 537h1v3h-1zM588 543h1v3h-1zM588 549h1v3h-1zM588 555h1v3h-1zM588 561h1v3h-1zM588 567h1v3h-1zM588 573h1v3h-1zM588 579h1v3h-1zM588 585h1v3h-1zM588 591h1v3h-1zM588 597h1v3h-1zM588 603h1v3h-1zM588 609h1v3h-1zM588 615h1v3h-1zM588 621h1v3h-1zM588 627h1v2h-1zM616 21h1v3h-1zM616 27h1v3h-1zM616 33h1v3h-1zM616 39h1v3h-1zM616 45h1v3h-1zM616 51h1v3h-1zM616 57h1v3h-1zM616 63h1v3h-1zM616 69h1v3h-1zM616 75h1v3h-1zM616 81h1v3h-1zM616 87h1v3h-1zM616 93h1v3h-1zM616 99h1v3h-1zM616 105h1v3h-1zM616 111h1v3h-1zM616 117h1v3h-1zM616 123h1v3h-1zM616 129h1v3h-1zM616 135h1v3h-1zM616 141h1v3h-1zM616 147h1v3h-1zM616 153h1v3h-1zM616 159h1v3h-1zM616 165h1v3h-1zM616 171h1v3h-1zM616 177h1v3h-1zM616 183h1v3h-1zM616 189h1v3h-1zM616 195h1v3h-1zM616 201h1v3h-1zM616 207h1v3h-1zM616 213h1v3h-1zM616 219h1v3h-1zM616 225h1v3h-1zM616 231h1v3h-1zM616 237h1v3h-1zM616 243h1v3h-1zM616 249h1v3h-1zM616 255h1v3h-1zM616 261h1v3h-1zM616 267h1v3h-1zM616 273h1v3h-1zM616 279h1v3h-1zM616 285h1v3h-1zM616 291h1v3h-1zM616 297h1v3h-1zM616 303h1v3h-1zM616 309h1v3h-1zM616 315h1v3h-1zM616 321h1v3h-1zM616 327h1v3h-1zM616 333h1v3h-1zM616 339h1v3h-1zM616 345h1v3h-1zM616 351h1v3h-1zM616 357h1v3h-1zM616 363h1v3h-1zM616 369h1v3h-1zM616 375h1v3h-1zM616 381h1v3h-1zM616 387h1v3h-1zM616 393h1v3h-1zM616 399h1v3h-1zM616 405h1v3h-1zM616 411h1v3h-1zM616 417h1v3h-1zM616 423h1v3h-1zM616 429h1v3h-1zM616 435h1v3h-1zM616 441h1v3h-1zM616 447h1v3h-1zM616 453h1v3h-1zM616 459h1v3h-1zM616 465h1v3h-1zM616 471h1v3h-1zM616 477h1v3h-1zM616 483h1v3h-1zM616 489h1v3h-1zM616 495h1v3h-1zM616 501h1v3h-1zM616 507h1v3h-1zM616 513h1v3h-1zM616 519h1v3h-1zM616 525h1v3h-1zM616 531h1v3h-1zM616 537h1v3h-1zM616 543h1v3h-1zM616 549h1v3h-1zM616 555h1v3h-1zM616 561h1v3h-1zM616 567h1v3h-1zM616 573h1v3h-1zM616 579h1v3h-1zM616 585h1v3h-1zM616 591h1v3h-1zM616 597h1v3h-1zM616 603h1v3h-1zM616 609h1v3h-1zM616 615h1v3h-1zM616 621h1v3h-1zM616 627h1v2h-1zM638 21h1v3h-1zM638 27h1v3h-1zM638 33h1v3h-1zM638 39h1v3h-1zM638 45h1v3h-1zM638 51h1v3h-1zM638 57h1v3h-1zM638 63h1v3h-1zM638 69h1v3h-1zM638 75h1v3h-1zM638 81h1v3h-1zM638 87h1v3h-1zM638 93h1v3h-1zM638 99h1v3h-1zM638 105h1v3h-1zM638 111h1v3h-1zM638 117h1v3h-1zM638 123h1v3h-1zM638 129h1v3h-1zM638 135h1v3h-1zM638 141h1v3h-1zM638 147h1v3h-1zM638 153h1v3h-1zM638 159h1v3h-1zM638 165h1v3h-1zM638 171h1v3h-1zM638 177h1v3h-1zM638 183h1v3h-1zM638 189h1v3h-1zM638 195h1v3h-1zM638 201h1v3h-1zM638 207h1v3h-1zM638 213h1v3h-1zM638 219h1v3h-1zM638 225h1v3h-1zM638 231h1v3h-1zM638 237h1v3h-1zM638 243h1v3h-1zM638 249h1v3h-1zM638 255h1v3h-1zM638 261h1v3h-1zM638 267h1v3h-1zM638 273h1v3h-1zM638 279h1v3h-1zM638 285h1v3h-1zM638 291h1v3h-1zM638 297h1v3h-1zM638 303h1v3h-1zM638 309h1v3h-1zM638 315h1v3h-1zM638 321h1v3h-1zM638 327h1v3h-1zM638 333h1v3h-1zM638 339h1v3h-1zM638 345h1v3h-1zM638 351h1v3h-1zM638 357h1v3h-1zM638 363h1v3h-1zM638 369h1v3h-1zM638 375h1v3h-1zM638 381h1v3h-1zM638 387h1v3h-1zM638 393h1v3h-1zM638 399h1v3h-1zM638 405h1v3h-1zM638 411h1v3h-1zM638 417h1v3h-1zM638 423h1v3h-1zM638 429h1v3h-1zM638 435h1v3h-1zM638 441h1v3h-1zM638 447h1v3h-1zM638 453h1v3h-1zM638 459h1v3h-1zM638 465h1v3h-1zM638 471h1v3h-1zM638 477h1v3h-1zM638 483h1v3h-1zM638 489h1v3h-1zM638 495h1v3h-1zM638 501h1v3h-1zM638 507h1v3h-1zM638 513h1v3h-1zM638 519h1v3h-1zM638 525h1v3h-1zM638 531h1v3h-1zM638 537h1v3h-1zM638 543h1v3h-1zM638 549h1v3h-1zM638 555h1v3h-1zM638 561h1v3h-1zM638 567h1v3h-1zM638 573h1v3h-1zM638 579h1v3h-1zM638 585h1v3h-1zM638 591h1v3h-1zM638 597h1v3h-1zM638 603h1v3h-1zM638 609h1v3h-1zM638 615h1v3h-1zM638 621h1v3h-1zM638 627h1v2h-1zM657 21h1v3h-1zM657 27h1v3h-1zM657 33h1v3h-1zM657 39h1v3h-1zM657 45h1v3h-1zM657 51h1v3h-1zM657 57h1v3h-1zM657 63h1v3h-1zM657 69h1v3h-1zM657 75h1v3h-1zM657 81h1v3h-1zM657 87h1v3h-1zM657 93h1v3h-1zM657 99h1v3h-1zM657 105h1v3h-1zM657 111h1v3h-1zM657 117h1v3h-1zM657 123h1v3h-1zM657 129h1v3h-1zM657 135h1v3h-1zM657 141h1v3h-1zM657 147h1v3h-1zM657 153h1v3h-1zM657 159h1v3h-1zM657 165h1v3h-1zM657 171h1v3h-1zM657 177h1v3h-1zM657 183h1v3h-1zM657 189h1v3h-1zM657 195h1v3h-1zM657 201h1v3h-1zM657 207h1v3h-1zM657 213h1v3h-1zM657 219h1v3h-1zM657 225h1v3h-1zM657 231h1v3h-1zM657 237h1v3h-1zM657 243h1v3h-1zM657 249h1v3h-1zM657 255h1v3h-1zM657 261h1v3h-1zM657 267h1v3h-1zM657 273h1v3h-1zM657 279h1v3h-1zM657 285h1v3h-1zM657 291h1v3h-1zM657 297h1v3h-1zM657 303h1v3h-1zM657 309h1v3h-1zM657 315h1v3h-1zM657 321h1v3h-1zM657 327h1v3h-1zM657 333h1v3h-1zM657 339h1v3h-1zM657 345h1v3h-1zM657 351h1v3h-1zM657 357h1v3h-1zM657 363h1v3h-1zM657 369h1v3h-1zM657 375h1v3h-1zM657 381h1v3h-1zM657 387h1v3h-1zM657 393h1v3h-1zM657 399h1v3h-1zM657 405h1v3h-1zM657 411h1v3h-1zM657 417h1v3h-1zM657 423h1v3h-1zM657 429h1v3h-1zM657 435h1v3h-1zM657 441h1v3h-1zM657 447h1v3h-1zM657 453h1v3h-1zM657 459h1v3h-1zM657 465h1v3h-1zM657 471h1v3h-1zM657 477h1v3h-1zM657 483h1v3h-1zM657 489h1v3h-1zM657 495h1v3h-1zM657 501h1v3h-1zM657 507h1v3h-1zM657 513h1v3h-1zM657 519h1v3h-1zM657 525h1v3h-1zM657 531h1v3h-1zM657 537h1v3h-1zM657 543h1v3h-1zM657 549h1v3h-1zM657 555h1v3h-1zM657 561h1v3h-1zM657 567h1v3h-1zM657 573h1v3h-1zM657 579h1v3h-1zM657 585h1v3h-1zM657 591h1v3h-1zM657 597h1v3h-1zM657 603h1v3h-1zM657 609h1v3h-1zM657 615h1v3h-1zM657 621h1v3h-1zM657 627h1v2h-1zM674 21h1v3h-1zM674 27h1v3h-1zM674 33h1v3h-1zM674 39h1v3h-1zM674 45h1v3h-1zM674 51h1v3h-1zM674 57h1v3h-1zM674 63h1v3h-1zM674 69h1v3h-1zM674 75h1v3h-1zM674 81h1v3h-1zM674 87h1v3h-1zM674 93h1v3h-1zM674 99h1v3h-1zM674 105h1v3h-1zM674 111h1v3h-1zM674 117h1v3h-1zM674 123h1v3h-1zM674 129h1v3h-1zM674 135h1v3h-1zM674 141h1v3h-1zM674 147h1v3h-1zM674 153h1v3h-1zM674 159h1v3h-1zM674 165h1v3h-1zM674 171h1v3h-1zM674 177h1v3h-1zM674 183h1v3h-1zM674 189h1v3h-1zM674 195h1v3h-1zM674 201h1v3h-1zM674 207h1v3h-1zM674 213h1v3h-1zM674 219h1v3h-1zM674 225h1v3h-1zM674 231h1v3h-1zM674 237h1v3h-1zM674 243h1v3h-1zM674 249h1v3h-1zM674 255h1v3h-1zM674 261h1v3h-1zM674 267h1v3h-1zM674 273h1v3h-1zM674 279h1v3h-1zM674 285h1v3h-1zM674 291h1v3h-1zM674 297h1v3h-1zM674 303h1v3h-1zM674 309h1v3h-1zM674 315h1v3h-1zM674 321h1v3h-1zM674 327h1v3h-1zM674 333h1v3h-1zM674 339h1v3h-1zM674 345h1v3h-1zM674 351h1v3h-1zM674 357h1v3h-1zM674 363h1v3h-1zM674 369h1v3h-1zM674 375h1v3h-1zM674 381h1v3h-1zM674 387h1v3h-1zM674 393h1v3h-1zM674 399h1v3h-1zM674 405h1v3h-1zM674 411h1v3h-1zM674 417h1v3h-1zM674 423h1v3h-1zM674 429h1v3h-1zM674 435h1v3h-1zM674 441h1v3h-1zM674 447h1v3h-1zM674 453h1v3h-1zM674 459h1v3h-1zM674 465h1v3h-1zM674 471h1v3h-1zM674 477h1v3h-1zM674 483h1v3h-1zM674 489h1v3h-1zM674 495h1v3h-1zM674 501h1v3h-1zM674 507h1v3h-1zM674 513h1v3h-1zM674 519h1v3h-1zM674 525h1v3h-1zM674 531h1v3h-1zM674 537h1v3h-1zM674 543h1v3h-1zM674 549h1v3h-1zM674 555h1v3h-1zM674 561h1v3h-1zM674 567h1v3h-1zM674 573h1v3h-1zM674 579h1v3h-1zM674 585h1v3h-1zM674 591h1v3h-1zM674 597h1v3h-1zM674 603h1v3h-1zM674 609h1v3h-1zM674 615h1v3h-1zM674 621h1v3h-1zM674 627h1v2h-1zM688 21h1v3h-1zM688 27h1v3h-1zM688 33h1v3h-1zM688 39h1v3h-1zM688 45h1v3h-1zM688 51h1v3h-1zM688 57h1v3h-1zM688 63h1v3h-1zM688 69h1v3h-1zM688 75h1v3h-1zM688 81h1v3h-1zM688 87h1v3h-1zM688 93h1v3h-1zM688 99h1v3h-1zM688 105h1v3h-1zM688 111h1v3h-1zM688 117h1v3h-1zM688 123h1v3h-1zM688 129h1v3h-1zM688 135h1v3h-1zM688 141h1v3h-1zM688 147h1v3h-1zM688 153h1v3h-1zM688 159h1v3h-1zM688 165h1v3h-1zM688 171h1v3h-1zM688 177h1v3h-1zM688 183h1v3h-1zM688 189h1v3h-1zM688 195h1v3h-1zM688 201h1v3h-1zM688 207h1v3h-1zM688 213h1v3h-1zM688 219h1v3h-1zM688 225h1v3h-1zM688 231h1v3h-1zM688 237h1v3h-1zM688 243h1v3h-1zM688 249h1v3h-1zM688 255h1v3h-1zM688 261h1v3h-1zM688 267h1v3h-1zM688 273h1v3h-1zM688 279h1v3h-1zM688 285h1v3h-1zM688 291h1v3h-1zM688 297h1v3h-1zM688 303h1v3h-1zM688 309h1v3h-1zM688 315h1v3h-1zM688 321h1v3h-1zM688 327h1v3h-1zM688 333h1v3h-1zM688 339h1v3h-1zM688 345h1v3h-1zM688 351h1v3h-1zM688 357h1v3h-1zM688 363h1v3h-1zM688 369h1v3h-1zM688 375h1v3h-1zM688 381h1v3h-1zM688 387h1v3h-1zM688 393h1v3h-1zM688 399h1v3h-1zM688 405h1v3h-1zM688 411h1v3h-1zM688 417h1v3h-1zM688 423h1v3h-1zM688 429h1v3h-1zM688 435h1v3h-1zM688 441h1v3h-1zM688 447h1v3h-1zM688 453h1v3h-1zM688 459h1v3h-1zM688 465h1v3h-1zM688 471h1v3h-1zM688 477h1v3h-1zM688 483h1v3h-1zM688 489h1v3h-1zM688 495h1v3h-1zM688 501h1v3h-1zM688 507h1v3h-1zM688 513h1v3h-1zM688 519h1v3h-1zM688 525h1v3h-1zM688 531h1v3h-1zM688 537h1v3h-1zM688 543h1v3h-1zM688 549h1v3h-1zM688 555h1v3h-1zM688 561h1v3h-1zM688 567h1v3h-1zM688 573h1v3h-1zM688 579h1v3h-1zM688 585h1v3h-1zM688 591h1v3h-1zM688 597h1v3h-1zM688 603h1v3h-1zM688 609h1v3h-1zM688 615h1v3h-1zM688 621h1v3h-1zM688 627h1v2h-1zM701 21h1v3h-1zM701 27h1v3h-1zM701 33h1v3h-1zM701 39h1v3h-1zM701 45h1v3h-1zM701 51h1v3h-1zM701 57h1v3h-1zM701 63h1v3h-1zM701 69h1v3h-1zM701 75h1v3h-1zM701 81h1v3h-1zM701 87h1v3h-1zM701 93h1v3h-1zM701 99h1v3h-1zM701 105h1v3h-1zM701 111h1v3h-1zM701 117h1v3h-1zM701 123h1v3h-1zM701 129h1v3h-1zM701 135h1v3h-1zM701 141h1v3h-1zM701 147h1v3h-1zM701 153h1v3h-1zM701 159h1v3h-1zM701 165h1v3h-1zM701 171h1v3h-1zM701 177h1v3h-1zM701 183h1v3h-1zM701 189h1v3h-1zM701 195h1v3h-1zM701 201h1v3h-1zM701 207h1v3h-1zM701 213h1v3h-1zM701 219h1v3h-1zM701 225h1v3h-1zM701 231h1v3h-1zM701 237h1v3h-1zM701 243h1v3h-1zM701 249h1v3h-1zM701 255h1v3h-1zM701 261h1v3h-1zM701 267h1v3h-1zM701 273h1v3h-1zM701 279h1v3h-1zM701 285h1v3h-1zM701 291h1v3h-1zM701 297h1v3h-1zM701 303h1v3h-1zM701 309h1v3h-1zM701 315h1v3h-1zM701 321h1v3h-1zM701 327h1v3h-1zM701 333h1v3h-1zM701 339h1v3h-1zM701 345h1v3h-1zM701 351h1v3h-1zM701 357h1v3h-1zM701 363h1v3h-1zM701 369h1v3h-1zM701 375h1v3h-1zM701 381h1v3h-1zM701 387h1v3h-1zM701 393h1v3h-1zM701 399h1v3h-1zM701 405h1v3h-1zM701 411h1v3h-1zM701 417h1v3h-1zM701 423h1v3h-1zM701 429h1v3h-1zM701 435h1v3h-1zM701 441h1v3h-1zM701 447h1v3h-1zM701 453h1v3h-1zM701 459h1v3h-1zM701 465h1v3h-1zM701 471h1v3h-1zM701 477h1v3h-1zM701 483h1v3h-1zM701 489h1v3h-1zM701 495h1v3h-1zM701 501h1v3h-1zM701 507h1v3h-1zM701 513h1v3h-1zM701 519h1v3h-1zM701 525h1v3h-1zM701 531h1v3h-1zM701 537h1v3h-1zM701 543h1v3h-1zM701 549h1v3h-1zM701 555h1v3h-1zM701 561h1v3h-1zM701 567h1v3h-1zM701 573h1v3h-1zM701 579h1v3h-1zM701 585h1v3h-1zM701 591h1v3h-1zM701 597h1v3h-1zM701 603h1v3h-1zM701 609h1v3h-1zM701 615h1v3h-1zM701 621h1v3h-1zM701 627h1v2h-1zM786 21h1v3h-1zM786 27h1v3h-1zM786 33h1v3h-1zM786 39h1v3h-1zM786 45h1v3h-1zM786 51h1v3h-1zM786 57h1v3h-1zM786 63h1v3h-1zM786 69h1v3h-1zM786 75h1v3h-1zM786 81h1v3h-1zM786 87h1v3h-1zM786 93h1v3h-1zM786 99h1v3h-1zM786 105h1v3h-1zM786 111h1v3h-1zM786 117h1v3h-1zM786 123h1v3h-1zM786 129h1v3h-1zM786 135h1v3h-1zM786 141h1v3h-1zM786 147h1v3h-1zM786 153h1v3h-1zM786 159h1v3h-1zM786 165h1v3h-1zM786 171h1v3h-1zM786 177h1v3h-1zM786 183h1v3h-1zM786 189h1v3h-1zM786 195h1v3h-1zM786 201h1v3h-1zM786 207h1v3h-1zM786 213h1v3h-1zM786 219h1v3h-1zM786 225h1v3h-1zM786 231h1v3h-1zM786 237h1v3h-1zM786 243h1v3h-1zM786 249h1v3h-1zM786 255h1v3h-1zM786 261h1v3h-1zM786 267h1v3h-1zM786 273h1v3h-1zM786 279h1v3h-1zM786 285h1v3h-1zM786 291h1v3h-1zM786 297h1v3h-1zM786 303h1v3h-1zM786 309h1v3h-1zM786 315h1v3h-1zM786 321h1v3h-1zM786 327h1v3h-1zM786 333h1v3h-1zM786 339h1v3h-1zM786 345h1v3h-1zM786 351h1v3h-1zM786 357h1v3h-1zM786 363h1v3h-1zM786 369h1v3h-1zM786 375h1v3h-1zM786 381h1v3h-1zM786 387h1v3h-1zM786 393h1v3h-1zM786 399h1v3h-1zM786 405h1v3h-1zM786 411h1v3h-1zM786 417h1v3h-1zM786 423h1v3h-1zM786 429h1v3h-1zM786 435h1v3h-1zM786 441h1v3h-1zM786 447h1v3h-1zM786 453h1v3h-1zM786 459h1v3h-1zM786 465h1v3h-1zM786 471h1v3h-1zM786 477h1v3h-1zM786 483h1v3h-1zM786 489h1v3h-1zM786 495h1v3h-1zM786 501h1v3h-1zM786 507h1v3h-1zM786 513h1v3h-1zM786 519h1v3h-1zM786 525h1v3h-1zM786 531h1v3h-1zM786 537h1v3h-1zM786 543h1v3h-1zM786 549h1v3h-1zM786 555h1v3h-1zM786 561h1v3h-1zM786 567h1v3h-1zM786 573h1v3h-1zM786 579h1v3h-1zM786 585h1v3h-1zM786 591h1v3h-1zM786 597h1v3h-1zM786 603h1v3h-1zM786 609h1v3h-1zM786 615h1v3h-1zM786 621h1v3h-1zM786 627h1v2h-1zM836 21h1v3h-1zM836 27h1v3h-1zM836 33h1v3h-1zM836 39h1v3h-1zM836 45h1v3h-1zM836 51h1v3h-1zM836 57h1v3h-1zM836 63h1v3h-1zM836 69h1v3h-1zM836 75h1v3h-1zM836 81h1v3h-1zM836 87h1v3h-1zM836 93h1v3h-1zM836 99h1v3h-1zM836 105h1v3h-1zM836 111h1v3h-1zM836 117h1v3h-1zM836 123h1v3h-1zM836 129h1v3h-1zM836 135h1v3h-1zM836 141h1v3h-1zM836 147h1v3h-1zM836 153h1v3h-1zM836 159h1v3h-1zM836 165h1v3h-1zM836 171h1v3h-1zM836 177h1v3h-1zM836 183h1v3h-1zM836 189h1v3h-1zM836 195h1v3h-1zM836 201h1v3h-1zM836 207h1v3h-1zM836 213h1v3h-1zM836 219h1v3h-1zM836 225h1v3h-1zM836 231h1v3h-1zM836 237h1v3h-1zM836 243h1v3h-1zM836 249h1v3h-1zM836 255h1v3h-1zM836 261h1v3h-1zM836 267h1v3h-1zM836 273h1v3h-1zM836 279h1v3h-1zM836 285h1v3h-1zM836 291h1v3h-1zM836 297h1v3h-1zM836 303h1v3h-1zM836 309h1v3h-1zM836 315h1v3h-1zM836 321h1v3h-1zM836 327h1v3h-1zM836 333h1v3h-1zM836 339h1v3h-1zM836 345h1v3h-1zM836 351h1v3h-1zM836 357h1v3h-1zM836 363h1v3h-1zM836 369h1v3h-1zM836 375h1v3h-1zM836 381h1v3h-1zM836 387h1v3h-1zM836 393h1v3h-1zM836 399h1v3h-1zM836 405h1v3h-1zM836 411h1v3h-1zM836 417h1v3h-1zM836 423h1v3h-1zM836 429h1v3h-1zM836 435h1v3h-1zM836 441h1v3h-1zM836 447h1v3h-1zM836 453h1v3h-1zM836 459h1v3h-1zM836 465h1v3h-1zM836 471h1v3h-1zM836 477h1v3h-1zM836 483h1v3h-1zM836 489h1v3h-1zM836 495h1v3h-1zM836 501h1v3h-1zM836 507h1v3h-1zM836 513h1v3h-1zM836 519h1v3h-1zM836 525h1v3h-1zM836 531h1v3h-1zM836 537h1v3h-1zM836 543h1v3h-1zM836 549h1v3h-1zM836 555h1v3h-1zM836 561h1v3h-1zM836 567h1v3h-1zM836 573h1v3h-1zM836 579h1v3h-1zM836 585h1v3h-1zM836 591h1v3h-1zM836 597h1v3h-1zM836 603h1v3h-1zM836 609h1v3h-1zM836 615h1v3h-1zM836 621h1v3h-1zM836 627h1v2h-1zM872 21h1v3h-1zM872 27h1v3h-1zM872 33h1v3h-1zM872 39h1v3h-1zM872 45h1v3h-1zM872 51h1v3h-1zM872 57h1v3h-1zM872 63h1v3h-1zM872 69h1v3h-1zM872 75h1v3h-1zM872 81h1v3h-1zM872 87h1v3h-1zM872 93h1v3h-1zM872 99h1v3h-1zM872 105h1v3h-1zM872 111h1v3h-1zM872 117h1v3h-1zM872 123h1v3h-1zM872 129h1v3h-1zM872 135h1v3h-1zM872 141h1v3h-1zM872 147h1v3h-1zM872 153h1v3h-1zM872 159h1v3h-1zM872 165h1v3h-1zM872 171h1v3h-1zM872 177h1v3h-1zM872 183h1v3h-1zM872 189h1v3h-1zM872 195h1v3h-1zM872 201h1v3h-1zM872 207h1v3h-1zM872 213h1v3h-1zM872 219h1v3h-1zM872 225h1v3h-1zM872 231h1v3h-1zM872 237h1v3h-1zM872 243h1v3h-1zM872 249h1v3h-1zM872 255h1v3h-1zM872 261h1v3h-1zM872 267h1v3h-1zM872 273h1v3h-1zM872 279h1v3h-1zM872 285h1v3h-1zM872 291h1v3h-1zM872 297h1v3h-1zM872 303h1v3h-1zM872 309h1v3h-1zM872 315h1v3h-1zM872 321h1v3h-1zM872 327h1v3h-1zM872 333h1v3h-1zM872 339h1v3h-1zM872 345h1v3h-1zM872 351h1v3h-1zM872 357h1v3h-1zM872 363h1v3h-1zM872 369h1v3h-1zM872 375h1v3h-1zM872 381h1v3h-1zM872 387h1v3h-1zM872 393h1v3h-1zM872 399h1v3h-1zM872 405h1v3h-1zM872 411h1v3h-1zM872 417h1v3h-1zM872 423h1v3h-1zM872 429h1v3h-1zM872 435h1v3h-1zM872 441h1v3h-1zM872 447h1v3h-1zM872 453h1v3h-1zM872 459h1v3h-1zM872 465h1v3h-1zM872 471h1v3h-1zM872 477h1v3h-1zM872 483h1v3h-1zM872 489h1v3h-1zM872 495h1v3h-1zM872 501h1v3h-1zM872 507h1v3h-1zM872 513h1v3h-1zM872 519h1v3h-1zM872 525h1v3h-1zM872 531h1v3h-1zM872 537h1v3h-1zM872 543h1v3h-1zM872 549h1v3h-1zM872 555h1v3h-1zM872 561h1v3h-1zM872 567h1v3h-1zM872 573h1v3h-1zM872 579h1v3h-1zM872 585h1v3h-1zM872 591h1v3h-1zM872 597h1v3h-1zM872 603h1v3h-1zM872 609h1v3h-1zM872 615h1v3h-1zM872 621h1v3h-1zM872 627h1v2h-1zM899 21h1v3h-1zM899 27h1v3h-1zM899 33h1v3h-1zM899 39h1v3h-1zM899 45h1v3h-1zM899 51h1v3h-1zM899 57h1v3h-1zM899 63h1v3h-1zM899 69h1v3h-1zM899 75h1v3h-1zM899 81h1v3h-1zM899 87h1v3h-1zM899 93h1v3h-1zM899 99h1v3h-1zM899 105h1v3h-1zM899 111h1v3h-1zM899 117h1v3h-1zM899 123h1v3h-1zM899 129h1v3h-1zM899 135h1v3h-1zM899 141h1v3h-1zM899 147h1v3h-1zM899 153h1v3h-1zM899 159h1v3h-1zM899 165h1v3h-1zM899 171h1v3h-1zM899 177h1v3h-1zM899 183h1v3h-1zM899 189h1v3h-1zM899 195h1v3h-1zM899 201h1v3h-1zM899 207h1v3h-1zM899 213h1v3h-1zM899 219h1v3h-1zM899 225h1v3h-1zM899 231h1v3h-1zM899 237h1v3h-1zM899 243h1v3h-1zM899 249h1v3h-1zM899 255h1v3h-1zM899 261h1v3h-1zM899 267h1v3h-1zM899 273h1v3h-1zM899 279h1v3h-1zM899 285h1v3h-1zM899 291h1v3h-1zM899 297h1v3h-1zM899 303h1v3h-1zM899 309h1v3h-1zM899 315h1v3h-1zM899 321h1v3h-1zM899 327h1v3h-1zM899 333h1v3h-1zM899 339h1v3h-1zM899 345h1v3h-1zM899 351h1v3h-1zM899 357h1v3h-1zM899 363h1v3h-1zM899 369h1v3h-1zM899 375h1v3h-1zM899 381h1v3h-1zM899 387h1v3h-1zM899 393h1v3h-1zM899 399h1v3h-1zM899 405h1v3h-1zM899 411h1v3h-1zM899 417h1v3h-1zM899 423h1v3h-1zM899 429h1v3h-1zM899 435h1v3h-1zM899 441h1v3h-1zM899 447h1v3h-1zM899 453h1v3h-1zM899 459h1v3h-1zM899 465h1v3h-1zM899 471h1v3h-1zM899 477h1v3h-1zM899 483h1v3h-1zM899 489h1v3h-1zM899 495h1v3h-1zM899 501h1v3h-1zM899 507h1v3h-1zM899 513h1v3h-1zM899 519h1v3h-1zM899 525h1v3h-1zM899 531h1v3h-1zM899 537h1v3h-1zM899 543h1v3h-1zM899 549h1v3h-1zM899 555h1v3h-1zM899 561h1v3h-1zM899 567h1v3h-1zM899 573h1v3h-1zM899 579h1v3h-1zM899 585h1v3h-1zM899 591h1v3h-1zM899 597h1v3h-1zM899 603h1v3h-1zM899 609h1v3h-1zM899 615h1v3h-1zM899 621h1v3h-1zM899 627h1v2h-1zM921 21h1v3h-1zM921 27h1v3h-1zM921 33h1v3h-1zM921 39h1v3h-1zM921 45h1v3h-1zM921 51h1v3h-1zM921 57h1v3h-1zM921 63h1v3h-1zM921 69h1v3h-1zM921 75h1v3h-1zM921 81h1v3h-1zM921 87h1v3h-1zM921 93h1v3h-1zM921 99h1v3h-1zM921 105h1v3h-1zM921 111h1v3h-1zM921 117h1v3h-1zM921 123h1v3h-1zM921 129h1v3h-1zM921 135h1v3h-1zM921 141h1v3h-1zM921 147h1v3h-1zM921 153h1v3h-1zM921 159h1v3h-1zM921 165h1v3h-1zM921 171h1v3h-1zM921 177h1v3h-1zM921 183h1v3h-1zM921 189h1v3h-1zM921 195h1v3h-1zM921 201h1v3h-1zM921 207h1v3h-1zM921 213h1v3h-1zM921 219h1v3h-1zM921 225h1v3h-1zM921 231h1v3h-1zM921 237h1v3h-1zM921 243h1v3h-1zM921 249h1v3h-1zM921 255h1v3h-1zM921 261h1v3h-1zM921 267h1v3h-1zM921 273h1v3h-1zM921 279h1v3h-1zM921 285h1v3h-1zM921 291h1v3h-1zM921 297h1v3h-1zM921 303h1v3h-1zM921 309h1v3h-1zM921 315h1v3h-1zM921 321h1v3h-1zM921 327h1v3h-1zM921 333h1v3h-1zM921 339h1v3h-1zM921 345h1v3h-1zM921 351h1v3h-1zM921 357h1v3h-1zM921 363h1v3h-1zM921 369h1v3h-1zM921 375h1v3h-1zM921 381h1v3h-1zM921 387h1v3h-1zM921 393h1v3h-1zM921 399h1v3h-1zM921 405h1v3h-1zM921 411h1v3h-1zM921 417h1v3h-1zM921 423h1v3h-1zM921 429h1v3h-1zM921 435h1v3h-1zM921 441h1v3h-1zM921 447h1v3h-1zM921 453h1v3h-1zM921 459h1v3h-1zM921 465h1v3h-1zM921 471h1v3h-1zM921 477h1v3h-1zM921 483h1v3h-1zM921 489h1v3h-1zM921 495h1v3h-1zM921 501h1v3h-1zM921 507h1v3h-1zM921 513h1v3h-1zM921 519h1v3h-1zM921 525h1v3h-1zM921 531h1v3h-1zM921 537h1v3h-1zM921 543h1v3h-1zM921 549h1v3h-1zM921 555h1v3h-1zM921 561h1v3h-1zM921 567h1v3h-1zM921 573h1v3h-1zM921 579h1v3h-1zM921 585h1v3h-1zM921 591h1v3h-1zM921 597h1v3h-1zM921 603h1v3h-1zM921 609h1v3h-1zM921 615h1v3h-1zM921 621h1v3h-1zM921 627h1v2h-1zM940 21h1v3h-1zM940 27h1v3h-1zM940 33h1v3h-1zM940 39h1v3h-1zM940 45h1v3h-1zM940 51h1v3h-1zM940 57h1v3h-1zM940 63h1v3h-1zM940 69h1v3h-1zM940 75h1v3h-1zM940 81h1v3h-1zM940 87h1v3h-1zM940 93h1v3h-1zM940 99h1v3h-1zM940 105h1v3h-1zM940 111h1v3h-1zM940 117h1v3h-1zM940 123h1v3h-1zM940 129h1v3h-1zM940 135h1v3h-1zM940 141h1v3h-1zM940 147h1v3h-1zM940 153h1v3h-1zM940 159h1v3h-1zM940 165h1v3h-1zM940 171h1v3h-1zM940 177h1v3h-1zM940 183h1v3h-1zM940 189h1v3h-1zM940 195h1v3h-1zM940 201h1v3h-1zM940 207h1v3h-1zM940 213h1v3h-1zM940 219h1v3h-1zM940 225h1v3h-1zM940 231h1v3h-1zM940 237h1v3h-1zM940 243h1v3h-1zM940 249h1v3h-1zM940 255h1v3h-1zM940 261h1v3h-1zM940 267h1v3h-1zM940 273h1v3h-1zM940 279h1v3h-1zM940 285h1v3h-1zM940 291h1v3h-1zM940 297h1v3h-1zM940 303h1v3h-1zM940 309h1v3h-1zM940 315h1v3h-1zM940 321h1v3h-1zM940 327h1v3h-1zM940 333h1v3h-1zM940 339h1v3h-1zM940 345h1v3h-1zM940 351h1v3h-1zM940 357h1v3h-1zM940 363h1v3h-1zM940 369h1v3h-1zM940 375h1v3h-1zM940 381h1v3h-1zM940 387h1v3h-1zM940 393h1v3h-1zM940 399h1v3h-1zM940 405h1v3h-1zM940 411h1v3h-1zM940 417h1v3h-1zM940 423h1v3h-1zM940 429h1v3h-1zM940 435h1v3h-1zM940 441h1v3h-1zM940 447h1v3h-1zM940 453h1v3h-1zM940 459h1v3h-1zM940 465h1v3h-1zM940 471h1v3h-1zM940 477h1v3h-1zM940 483h1v3h-1zM940 489h1v3h-1zM940 495h1v3h-1zM940 501h1v3h-1zM940 507h1v3h-1zM940 513h1v3h-1zM940 519h1v3h-1zM940 525h1v3h-1zM940 531h1v3h-1zM940 537h1v3h-1zM940 543h1v3h-1zM940 549h1v3h-1zM940 555h1v3h-1zM940 561h1v3h-1zM940 567h1v3h-1zM940 573h1v3h-1zM940 579h1v3h-1zM940 585h1v3h-1zM940 591h1v3h-1zM940 597h1v3h-1zM940 603h1v3h-1zM940 609h1v3h-1zM940 615h1v3h-1zM940 621h1v3h-1zM940 627h1v2h-1zM957 21h1v3h-1zM957 27h1v3h-1zM957 33h1v3h-1zM957 39h1v3h-1zM957 45h1v3h-1zM957 51h1v3h-1zM957 57h1v3h-1zM957 63h1v3h-1zM957 69h1v3h-1zM957 75h1v3h-1zM957 81h1v3h-1zM957 87h1v3h-1zM957 93h1v3h-1zM957 99h1v3h-1zM957 105h1v3h-1zM957 111h1v3h-1zM957 117h1v3h-1zM957 123h1v3h-1zM957 129h1v3h-1zM957 135h1v3h-1zM957 141h1v3h-1zM957 147h1v3h-1zM957 153h1v3h-1zM957 159h1v3h-1zM957 165h1v3h-1zM957 171h1v3h-1zM957 177h1v3h-1zM957 183h1v3h-1zM957 189h1v3h-1zM957 195h1v3h-1zM957 201h1v3h-1zM957 207h1v3h-1zM957 213h1v3h-1zM957 219h1v3h-1zM957 225h1v3h-1zM957 231h1v3h-1zM957 237h1v3h-1zM957 243h1v3h-1zM957 249h1v3h-1zM957 255h1v3h-1zM957 261h1v3h-1zM957 267h1v3h-1zM957 273h1v3h-1zM957 279h1v3h-1zM957 285h1v3h-1zM957 291h1v3h-1zM957 297h1v3h-1zM957 303h1v3h-1zM957 309h1v3h-1zM957 315h1v3h-1zM957 321h1v3h-1zM957 327h1v3h-1zM957 333h1v3h-1zM957 339h1v3h-1zM957 345h1v3h-1zM957 351h1v3h-1zM957 357h1v3h-1zM957 363h1v3h-1zM957 369h1v3h-1zM957 375h1v3h-1zM957 381h1v3h-1zM957 387h1v3h-1zM957 393h1v3h-1zM957 399h1v3h-1zM957 405h1v3h-1zM957 411h1v3h-1zM957 417h1v3h-1zM957 423h1v3h-1zM957 429h1v3h-1zM957 435h1v3h-1zM957 441h1v3h-1zM957 447h1v3h-1zM957 453h1v3h-1zM957 459h1v3h-1zM957 465h1v3h-1zM957 471h1v3h-1zM957 477h1v3h-1zM957 483h1v3h-1zM957 489h1v3h-1zM957 495h1v3h-1zM957 501h1v3h-1zM957 507h1v3h-1zM957 513h1v3h-1zM957 519h1v3h-1zM957 525h1v3h-1zM957 531h1v3h-1zM957 537h1v3h-1zM957 543h1v3h-1zM957 549h1v3h-1zM957 555h1v3h-1zM957 561h1v3h-1zM957 567h1v3h-1zM957 573h1v3h-1zM957 579h1v3h-1zM957 585h1v3h-1zM957 591h1v3h-1zM957 597h1v3h-1zM957 603h1v3h-1zM957 609h1v3h-1zM957 615h1v3h-1zM957 621h1v3h-1zM957 627h1v2h-1zM971 21h1v3h-1zM971 27h1v3h-1zM971 33h1v3h-1zM971 39h1v3h-1zM971 45h1v3h-1zM971 51h1v3h-1zM971 57h1v3h-1zM971 63h1v3h-1zM971 69h1v3h-1zM971 75h1v3h-1zM971 81h1v3h-1zM971 87h1v3h-1zM971 93h1v3h-1zM971 99h1v3h-1zM971 105h1v3h-1zM971 111h1v3h-1zM971 117h1v3h-1zM971 123h1v3h-1zM971 129h1v3h-1zM971 135h1v3h-1zM971 141h1v3h-1zM971 147h1v3h-1zM971 153h1v3h-1zM971 159h1v3h-1zM971 165h1v3h-1zM971 171h1v3h-1zM971 177h1v3h-1zM971 183h1v3h-1zM971 189h1v3h-1zM971 195h1v3h-1zM971 201h1v3h-1zM971 207h1v3h-1zM971 213h1v3h-1zM971 219h1v3h-1zM971 225h1v3h-1zM971 231h1v3h-1zM971 237h1v3h-1zM971 243h1v3h-1zM971 249h1v3h-1zM971 255h1v3h-1zM971 261h1v3h-1zM971 267h1v3h-1zM971 273h1v3h-1zM971 279h1v3h-1zM971 285h1v3h-1zM971 291h1v3h-1zM971 297h1v3h-1zM971 303h1v3h-1zM971 309h1v3h-1zM971 315h1v3h-1zM971 321h1v3h-1zM971 327h1v3h-1zM971 333h1v3h-1zM971 339h1v3h-1zM971 345h1v3h-1zM971 351h1v3h-1zM971 357h1v3h-1zM971 363h1v3h-1zM971 369h1v3h-1zM971 375h1v3h-1zM971 381h1v3h-1zM971 387h1v3h-1zM971 393h1v3h-1zM971 399h1v3h-1zM971 405h1v3h-1zM971 411h1v3h-1zM971 417h1v3h-1zM971 423h1v3h-1zM971 429h1v3h-1zM971 435h1v3h-1zM971 441h1v3h-1zM971 447h1v3h-1zM971 453h1v3h-1zM971 459h1v3h-1zM971 465h1v3h-1zM971 471h1v3h-1zM971 477h1v3h-1zM971 483h1v3h-1zM971 489h1v3h-1zM971 495h1v3h-1zM971 501h1v3h-1zM971 507h1v3h-1zM971 513h1v3h-1zM971 519h1v3h-1zM971 525h1v3h-1zM971 531h1v3h-1zM971 537h1v3h-1zM971 543h1v3h-1zM971 549h1v3h-1zM971 555h1v3h-1zM971 561h1v3h-1zM971 567h1v3h-1zM971 573h1v3h-1zM971 579h1v3h-1zM971 585h1v3h-1zM971 591h1v3h-1zM971 597h1v3h-1zM971 603h1v3h-1zM971 609h1v3h-1zM971 615h1v3h-1zM971 621h1v3h-1zM971 627h1v2h-1zM984 21h1v3h-1zM984 27h1v3h-1zM984 33h1v3h-1zM984 39h1v3h-1zM984 45h1v3h-1zM984 51h1v3h-1zM984 57h1v3h-1zM984 63h1v3h-1zM984 69h1v3h-1zM984 75h1v3h-1zM984 81h1v3h-1zM984 87h1v3h-1zM984 93h1v3h-1zM984 99h1v3h-1zM984 105h1v3h-1zM984 111h1v3h-1zM984 117h1v3h-1zM984 123h1v3h-1zM984 129h1v3h-1zM984 135h1v3h-1zM984 141h1v3h-1zM984 147h1v3h-1zM984 153h1v3h-1zM984 159h1v3h-1zM984 165h1v3h-1zM984 171h1v3h-1zM984 177h1v3h-1zM984 183h1v3h-1zM984 189h1v3h-1zM984 195h1v3h-1zM984 201h1v3h-1zM984 207h1v3h-1zM984 213h1v3h-1zM984 219h1v3h-1zM984 225h1v3h-1zM984 231h1v3h-1zM984 237h1v3h-1zM984 243h1v3h-1zM984 249h1v3h-1zM984 255h1v3h-1zM984 261h1v3h-1zM984 267h1v3h-1zM984 273h1v3h-1zM984 279h1v3h-1zM984 285h1v3h-1zM984 291h1v3h-1zM984 297h1v3h-1zM984 303h1v3h-1zM984 309h1v3h-1zM984 315h1v3h-1zM984 321h1v3h-1zM984 327h1v3h-1zM984 333h1v3h-1zM984 339h1v3h-1zM984 345h1v3h-1zM984 351h1v3h-1zM984 357h1v3h-1zM984 363h1v3h-1zM984 369h1v3h-1zM984 375h1v3h-1zM984 381h1v3h-1zM984 387h1v3h-1zM984 393h1v3h-1zM984 399h1v3h-1zM984 405h1v3h-1zM984 411h1v3h-1zM984 417h1v3h-1zM984 423h1v3h-1zM984 429h1v3h-1zM984 435h1v3h-1zM984 441h1v3h-1zM984 447h1v3h-1zM984 453h1v3h-1zM984 459h1v3h-1zM984 465h1v3h-1zM984 471h1v3h-1zM984 477h1v3h-1zM984 483h1v3h-1zM984 489h1v3h-1zM984 495h1v3h-1zM984 501h1v3h-1zM984 507h1v3h-1zM984 513h1v3h-1zM984 519h1v3h-1zM984 525h1v3h-1zM984 531h1v3h-1zM984 537h1v3h-1zM984 543h1v3h-1zM984 549h1v3h-1zM984 555h1v3h-1zM984 561h1v3h-1zM984 567h1v3h-1zM984 573h1v3h-1zM984 579h1v3h-1zM984 585h1v3h-1zM984 591h1v3h-1zM984 597h1v3h-1zM984 603h1v3h-1zM984 609h1v3h-1zM984 615h1v3h-1zM984 621h1v3h-1zM984 627h1v2h-1zM1070 21h1v3h-1zM1070 27h1v3h-1zM1070 33h1v3h-1zM1070 39h1v3h-1zM1070 45h1v3h-1zM1070 51h1v3h-1zM1070 57h1v3h-1zM1070 63h1v3h-1zM1070 69h1v3h-1zM1070 75h1v3h-1zM1070 81h1v3h-1zM1070 87h1v3h-1zM1070 93h1v3h-1zM1070 99h1v3h-1zM1070 105h1v3h-1zM1070 111h1v3h-1zM1070 117h1v3h-1zM1070 123h1v3h-1zM1070 129h1v3h-1zM1070 135h1v3h-1zM1070 141h1v3h-1zM1070 147h1v3h-1zM1070 153h1v3h-1zM1070 159h1v3h-1zM1070 165h1v3h-1zM1070 171h1v3h-1zM1070 177h1v3h-1zM1070 183h1v3h-1zM1070 189h1v3h-1zM1070 195h1v3h-1zM1070 201h1v3h-1zM1070 207h1v3h-1zM1070 213h1v3h-1zM1070 219h1v3h-1zM1070 225h1v3h-1zM1070 231h1v3h-1zM1070 237h1v3h-1zM1070 243h1v3h-1zM1070 249h1v3h-1zM1070 255h1v3h-1zM1070 261h1v3h-1zM1070 267h1v3h-1zM1070 273h1v3h-1zM1070 279h1v3h-1zM1070 285h1v3h-1zM1070 291h1v3h-1zM1070 297h1v3h-1zM1070 303h1v3h-1zM1070 309h1v3h-1zM1070 315h1v3h-1zM1070 321h1v3h-1zM1070 327h1v3h-1zM1070 333h1v3h-1zM1070 339h1v3h-1zM1070 345h1v3h-1zM1070 351h1v3h-1zM1070 357h1v3h-1zM1070 363h1v3h-1zM1070 369h1v3h-1zM1070 375h1v3h-1zM1070 381h1v3h-1zM1070 387h1v3h-1zM1070 393h1v3h-1zM1070 399h1v3h-1zM1070 405h1v3h-1zM1070 411h1v3h-1zM1070 417h1v3h-1zM1070 423h1v3h-1zM1070 429h1v3h-1zM1070 435h1v3h-1zM1070 441h1v3h-1zM1070 447h1v3h-1zM1070 453h1v3h-1zM1070 459h1v3h-1zM1070 465h1v3h-1zM1070 471h1v3h-1zM1070 477h1v3h-1zM1070 483h1v3h-1zM1070 489h1v3h-1zM1070 495h1v3h-1zM1070 501h1v3h-1zM1070 507h1v3h-1zM1070 513h1v3h-1zM1070 519h1v3h-1zM1070 525h1v3h-1zM1070 531h1v3h-1zM1070 537h1v3h-1zM1070 543h1v3h-1zM1070 549h1v3h-1zM1070 555h1v3h-1zM1070 561h1v3h-1zM1070 567h1v3h-1zM1070 573h1v3h-1zM1070 579h1v3h-1zM1070 585h1v3h-1zM1070 591h1v3h-1zM1070 597h1v3h-1zM1070 603h1v3h-1zM1070 609h1v3h-1zM1070 615h1v3h-1zM1070 621h1v3h-1zM1070 627h1v2h-1zM1120 21h1v3h-1zM1120 27h1v3h-1zM1120 33h1v3h-1zM1120 39h1v3h-1zM1120 45h1v3h-1zM1120 51h1v3h-1zM1120 57h1v3h-1zM1120 63h1v3h-1zM1120 69h1v3h-1zM1120 75h1v3h-1zM1120 81h1v3h-1zM1120 87h1v3h-1zM1120 93h1v3h-1zM1120 99h1v3h-1zM1120 105h1v3h-1zM1120 111h1v3h-1zM1120 117h1v3h-1zM1120 123h1v3h-1zM1120 129h1v3h-1zM1120 135h1v3h-1zM1120 141h1v3h-1zM1120 147h1v3h-1zM1120 153h1v3h-1zM1120 159h1v3h-1zM1120 165h1v3h-1zM1120 171h1v3h-1zM1120 177h1v3h-1zM1120 183h1v3h-1zM1120 189h1v3h-1zM1120 195h1v3h-1zM1120 201h1v3h-1zM1120 207h1v3h-1zM1120 213h1v3h-1zM1120 219h1v3h-1zM1120 225h1v3h-1zM1120 231h1v3h-1zM1120 237h1v3h-1zM1120 243h1v3h-1zM1120 249h1v3h-1zM1120 255h1v3h-1zM1120 261h1v3h-1zM1120 267h1v3h-1zM1120 273h1v3h-1zM1120 279h1v3h-1zM1120 285h1v3h-1zM1120 291h1v3h-1zM1120 297h1v3h-1zM1120 303h1v3h-1zM1120 309h1v3h-1zM1120 315h1v3h-1zM1120 321h1v3h-1zM1120 327h1v3h-1zM1120 333h1v3h-1zM1120 339h1v3h-1zM1120 345h1v3h-1zM1120 351h1v3h-1zM1120 357h1v3h-1zM1120 363h1v3h-1zM1120 369h1v3h-1zM1120 375h1v3h-1zM1120 381h1v3h-1zM1120 387h1v3h-1zM1120 393h1v3h-1zM1120 399h1v3h-1zM1120 405h1v3h-1zM1120 411h1v3h-1zM1120 417h1v3h-1zM1120 423h1v3h-1zM1120 429h1v3h-1zM1120 435h1v3h-1zM1120 441h1v3h-1zM1120 447h1v3h-1zM1120 453h1v3h-1zM1120 459h1v3h-1zM1120 465h1v3h-1zM1120 471h1v3h-1zM1120 477h1v3h-1zM1120 483h1v3h-1zM1120 489h1v3h-1zM1120 495h1v3h-1zM1120 501h1v3h-1zM1120 507h1v3h-1zM1120 513h1v3h-1zM1120 519h1v3h-1zM1120 525h1v3h-1zM1120 531h1v3h-1zM1120 537h1v3h-1zM1120 543h1v3h-1zM1120 549h1v3h-1zM1120 555h1v3h-1zM1120 561h1v3h-1zM1120 567h1v3h-1zM1120 573h1v3h-1zM1120 579h1v3h-1zM1120 585h1v3h-1zM1120 591h1v3h-1zM1120 597h1v3h-1zM1120 603h1v3h-1zM1120 609h1v3h-1zM1120 615h1v3h-1zM1120 621h1v3h-1zM1120 627h1v2h-1zM1155 21h1v3h-1zM1155 27h1v3h-1zM1155 33h1v3h-1zM1155 39h1v3h-1zM1155 45h1v3h-1zM1155 51h1v3h-1zM1155 57h1v3h-1zM1155 63h1v3h-1zM1155 69h1v3h-1zM1155 75h1v3h-1zM1155 81h1v3h-1zM1155 87h1v3h-1zM1155 93h1v3h-1zM1155 99h1v3h-1zM1155 105h1v3h-1zM1155 111h1v3h-1zM1155 117h1v3h-1zM1155 123h1v3h-1zM1155 129h1v3h-1zM1155 135h1v3h-1zM1155 141h1v3h-1zM1155 147h1v3h-1zM1155 153h1v3h-1zM1155 159h1v3h-1zM1155 165h1v3h-1zM1155 171h1v3h-1zM1155 177h1v3h-1zM1155 183h1v3h-1zM1155 189h1v3h-1zM1155 195h1v3h-1zM1155 201h1v3h-1zM1155 207h1v3h-1zM1155 213h1v3h-1zM1155 219h1v3h-1zM1155 225h1v3h-1zM1155 231h1v3h-1zM1155 237h1v3h-1zM1155 243h1v3h-1zM1155 249h1v3h-1zM1155 255h1v3h-1zM1155 261h1v3h-1zM1155 267h1v3h-1zM1155 273h1v3h-1zM1155 279h1v3h-1zM1155 285h1v3h-1zM1155 291h1v3h-1zM1155 297h1v3h-1zM1155 303h1v3h-1zM1155 309h1v3h-1zM1155 315h1v3h-1zM1155 321h1v3h-1zM1155 327h1v3h-1zM1155 333h1v3h-1zM1155 339h1v3h-1zM1155 345h1v3h-1zM1155 351h1v3h-1zM1155 357h1v3h-1zM1155 363h1v3h-1zM1155 369h1v3h-1zM1155 375h1v3h-1zM1155 381h1v3h-1zM1155 387h1v3h-1zM1155 393h1v3h-1zM1155 399h1v3h-1zM1155 405h1v3h-1zM1155 411h1v3h-1zM1155 417h1v3h-1zM1155 423h1v3h-1zM1155 429h1v3h-1zM1155 435h1v3h-1zM1155 441h1v3h-1zM1155 447h1v3h-1zM1155 453h1v3h-1zM1155 459h1v3h-1zM1155 465h1v3h-1zM1155 471h1v3h-1zM1155 477h1v3h-1zM1155 483h1v3h-1zM1155 489h1v3h-1zM1155 495h1v3h-1zM1155 501h1v3h-1zM1155 507h1v3h-1zM1155 513h1v3h-1zM1155 519h1v3h-1zM1155 525h1v3h-1zM1155 531h1v3h-1zM1155 537h1v3h-1zM1155 543h1v3h-1zM1155 549h1v3h-1zM1155 555h1v3h-1zM1155 561h1v3h-1zM1155 567h1v3h-1zM1155 573h1v3h-1zM1155 579h1v3h-1zM1155 585h1v3h-1zM1155 591h1v3h-1zM1155 597h1v3h-1zM1155 603h1v3h-1zM1155 609h1v3h-1zM1155 615h1v3h-1zM1155 621h1v3h-1zM1155 627h1v2h-1zM1182 21h1v3h-1zM1182 27h1v3h-1zM1182 33h1v3h-1zM1182 39h1v3h-1zM1182 45h1v3h-1zM1182 51h1v3h-1zM1182 57h1v3h-1zM1182 63h1v3h-1zM1182 69h1v3h-1zM1182 75h1v3h-1zM1182 81h1v3h-1zM1182 87h1v3h-1zM1182 93h1v3h-1zM1182 99h1v3h-1zM1182 105h1v3h-1zM1182 111h1v3h-1zM1182 117h1v3h-1zM1182 123h1v3h-1zM1182 129h1v3h-1zM1182 135h1v3h-1zM1182 141h1v3h-1zM1182 147h1v3h-1zM1182 153h1v3h-1zM1182 159h1v3h-1zM1182 165h1v3h-1zM1182 171h1v3h-1zM1182 177h1v3h-1zM1182 183h1v3h-1zM1182 189h1v3h-1zM1182 195h1v3h-1zM1182 201h1v3h-1zM1182 207h1v3h-1zM1182 213h1v3h-1zM1182 219h1v3h-1zM1182 225h1v3h-1zM1182 231h1v3h-1zM1182 237h1v3h-1zM1182 243h1v3h-1zM1182 249h1v3h-1zM1182 255h1v3h-1zM1182 261h1v3h-1zM1182 267h1v3h-1zM1182 273h1v3h-1zM1182 279h1v3h-1zM1182 285h1v3h-1zM1182 291h1v3h-1zM1182 297h1v3h-1zM1182 303h1v3h-1zM1182 309h1v3h-1zM1182 315h1v3h-1zM1182 321h1v3h-1zM1182 327h1v3h-1zM1182 333h1v3h-1zM1182 339h1v3h-1zM1182 345h1v3h-1zM1182 351h1v3h-1zM1182 357h1v3h-1zM1182 363h1v3h-1zM1182 369h1v3h-1zM1182 375h1v3h-1zM1182 381h1v3h-1zM1182 387h1v3h-1zM1182 393h1v3h-1zM1182 399h1v3h-1zM1182 405h1v3h-1zM1182 411h1v3h-1zM1182 417h1v3h-1zM1182 423h1v3h-1zM1182 429h1v3h-1zM1182 435h1v3h-1zM1182 441h1v3h-1zM1182 447h1v3h-1zM1182 453h1v3h-1zM1182 459h1v3h-1zM1182 465h1v3h-1zM1182 471h1v3h-1zM1182 477h1v3h-1zM1182 483h1v3h-1zM1182 489h1v3h-1zM1182 495h1v3h-1zM1182 501h1v3h-1zM1182 507h1v3h-1zM1182 513h1v3h-1zM1182 519h1v3h-1zM1182 525h1v3h-1zM1182 531h1v3h-1zM1182 537h1v3h-1zM1182 543h1v3h-1zM1182 549h1v3h-1zM1182 555h1v3h-1zM1182 561h1v3h-1zM1182 567h1v3h-1zM1182 573h1v3h-1zM1182 579h1v3h-1zM1182 585h1v3h-1zM1182 591h1v3h-1zM1182 597h1v3h-1zM1182 603h1v3h-1zM1182 609h1v3h-1zM1182 615h1v3h-1zM1182 621h1v3h-1zM1182 627h1v2h-1zM1205 21h1v3h-1zM1205 27h1v3h-1zM1205 33h1v3h-1zM1205 39h1v3h-1zM1205 45h1v3h-1zM1205 51h1v3h-1zM1205 57h1v3h-1zM1205 63h1v3h-1zM1205 69h1v3h-1zM1205 75h1v3h-1zM1205 81h1v3h-1zM1205 87h1v3h-1zM1205 93h1v3h-1zM1205 99h1v3h-1zM1205 105h1v3h-1zM1205 111h1v3h-1zM1205 117h1v3h-1zM1205 123h1v3h-1zM1205 129h1v3h-1zM1205 135h1v3h-1zM1205 141h1v3h-1zM1205 147h1v3h-1zM1205 153h1v3h-1zM1205 159h1v3h-1zM1205 165h1v3h-1zM1205 171h1v3h-1zM1205 177h1v3h-1zM1205 183h1v3h-1zM1205 189h1v3h-1zM1205 195h1v3h-1zM1205 201h1v3h-1zM1205 207h1v3h-1zM1205 213h1v3h-1zM1205 219h1v3h-1zM1205 225h1v3h-1zM1205 231h1v3h-1zM1205 237h1v3h-1zM1205 243h1v3h-1zM1205 249h1v3h-1zM1205 255h1v3h-1zM1205 261h1v3h-1zM1205 267h1v3h-1zM1205 273h1v3h-1zM1205 279h1v3h-1zM1205 285h1v3h-1zM1205 291h1v3h-1zM1205 297h1v3h-1zM1205 303h1v3h-1zM1205 309h1v3h-1zM1205 315h1v3h-1zM1205 321h1v3h-1zM1205 327h1v3h-1zM1205 333h1v3h-1zM1205 339h1v3h-1zM1205 345h1v3h-1zM1205 351h1v3h-1zM1205 357h1v3h-1zM1205 363h1v3h-1zM1205 369h1v3h-1zM1205 375h1v3h-1zM1205 381h1v3h-1zM1205 387h1v3h-1zM1205 393h1v3h-1zM1205 399h1v3h-1zM1205 405h1v3h-1zM1205 411h1v3h-1zM1205 417h1v3h-1zM1205 423h1v3h-1zM1205 429h1v3h-1zM1205 435h1v3h-1zM1205 441h1v3h-1zM1205 447h1v3h-1zM1205 453h1v3h-1zM1205 459h1v3h-1zM1205 465h1v3h-1zM1205 471h1v3h-1zM1205 477h1v3h-1zM1205 483h1v3h-1zM1205 489h1v3h-1zM1205 495h1v3h-1zM1205 501h1v3h-1zM1205 507h1v3h-1zM1205 513h1v3h-1zM1205 519h1v3h-1zM1205 525h1v3h-1zM1205 531h1v3h-1zM1205 537h1v3h-1zM1205 543h1v3h-1zM1205 549h1v3h-1zM1205 555h1v3h-1zM1205 561h1v3h-1zM1205 567h1v3h-1zM1205 573h1v3h-1zM1205 579h1v3h-1zM1205 585h1v3h-1zM1205 591h1v3h-1zM1205 597h1v3h-1zM1205 603h1v3h-1zM1205 609h1v3h-1zM1205 615h1v3h-1zM1205 621h1v3h-1zM1205 627h1v2h-1zM1224 21h1v3h-1zM1224 27h1v3h-1zM1224 33h1v3h-1zM1224 39h1v3h-1zM1224 45h1v3h-1zM1224 51h1v3h-1zM1224 57h1v3h-1zM1224 63h1v3h-1zM1224 69h1v3h-1zM1224 75h1v3h-1zM1224 81h1v3h-1zM1224 87h1v3h-1zM1224 93h1v3h-1zM1224 99h1v3h-1zM1224 105h1v3h-1zM1224 111h1v3h-1zM1224 117h1v3h-1zM1224 123h1v3h-1zM1224 129h1v3h-1zM1224 135h1v3h-1zM1224 141h1v3h-1zM1224 147h1v3h-1zM1224 153h1v3h-1zM1224 159h1v3h-1zM1224 165h1v3h-1zM1224 171h1v3h-1zM1224 177h1v3h-1zM1224 183h1v3h-1zM1224 189h1v3h-1zM1224 195h1v3h-1zM1224 201h1v3h-1zM1224 207h1v3h-1zM1224 213h1v3h-1zM1224 219h1v3h-1zM1224 225h1v3h-1zM1224 231h1v3h-1zM1224 237h1v3h-1zM1224 243h1v3h-1zM1224 249h1v3h-1zM1224 255h1v3h-1zM1224 261h1v3h-1zM1224 267h1v3h-1zM1224 273h1v3h-1zM1224 279h1v3h-1zM1224 285h1v3h-1zM1224 291h1v3h-1zM1224 297h1v3h-1zM1224 303h1v3h-1zM1224 309h1v3h-1zM1224 315h1v3h-1zM1224 321h1v3h-1zM1224 327h1v3h-1zM1224 333h1v3h-1zM1224 339h1v3h-1zM1224 345h1v3h-1zM1224 351h1v3h-1zM1224 357h1v3h-1zM1224 363h1v3h-1zM1224 369h1v3h-1zM1224 375h1v3h-1zM1224 381h1v3h-1zM1224 387h1v3h-1zM1224 393h1v3h-1zM1224 399h1v3h-1zM1224 405h1v3h-1zM1224 411h1v3h-1zM1224 417h1v3h-1zM1224 423h1v3h-1zM1224 429h1v3h-1zM1224 435h1v3h-1zM1224 441h1v3h-1zM1224 447h1v3h-1zM1224 453h1v3h-1zM1224 459h1v3h-1zM1224 465h1v3h-1zM1224 471h1v3h-1zM1224 477h1v3h-1zM1224 483h1v3h-1zM1224 489h1v3h-1zM1224 495h1v3h-1zM1224 501h1v3h-1zM1224 507h1v3h-1zM1224 513h1v3h-1zM1224 519h1v3h-1zM1224 525h1v3h-1zM1224 531h1v3h-1zM1224 537h1v3h-1zM1224 543h1v3h-1zM1224 549h1v3h-1zM1224 555h1v3h-1zM1224 561h1v3h-1zM1224 567h1v3h-1zM1224 573h1v3h-1zM1224 579h1v3h-1zM1224 585h1v3h-1zM1224 591h1v3h-1zM1224 597h1v3h-1zM1224 603h1v3h-1zM1224 609h1v3h-1zM1224 615h1v3h-1zM1224 621h1v3h-1zM1224 627h1v2h-1zM1240 21h1v3h-1zM1240 27h1v3h-1zM1240 33h1v3h-1zM1240 39h1v3h-1zM1240 45h1v3h-1zM1240 51h1v3h-1zM1240 57h1v3h-1zM1240 63h1v3h-1zM1240 69h1v3h-1zM1240 75h1v3h-1zM1240 81h1v3h-1zM1240 87h1v3h-1zM1240 93h1v3h-1zM1240 99h1v3h-1zM1240 105h1v3h-1zM1240 111h1v3h-1zM1240 117h1v3h-1zM1240 123h1v3h-1zM1240 129h1v3h-1zM1240 135h1v3h-1zM1240 141h1v3h-1zM1240 147h1v3h-1zM1240 153h1v3h-1zM1240 159h1v3h-1zM1240 165h1v3h-1zM1240 171h1v3h-1zM1240 177h1v3h-1zM1240 183h1v3h-1zM1240 189h1v3h-1zM1240 195h1v3h-1zM1240 201h1v3h-1zM1240 207h1v3h-1zM1240 213h1v3h-1zM1240 219h1v3h-1zM1240 225h1v3h-1zM1240 231h1v3h-1zM1240 237h1v3h-1zM1240 243h1v3h-1zM1240 249h1v3h-1zM1240 255h1v3h-1zM1240 261h1v3h-1zM1240 267h1v3h-1zM1240 273h1v3h-1zM1240 279h1v3h-1zM1240 285h1v3h-1zM1240 291h1v3h-1zM1240 297h1v3h-1zM1240 303h1v3h-1zM1240 309h1v3h-1zM1240 315h1v3h-1zM1240 321h1v3h-1zM1240 327h1v3h-1zM1240 333h1v3h-1zM1240 339h1v3h-1zM1240 345h1v3h-1zM1240 351h1v3h-1zM1240 357h1v3h-1zM1240 363h1v3h-1zM1240 369h1v3h-1zM1240 375h1v3h-1zM1240 381h1v3h-1zM1240 387h1v3h-1zM1240 393h1v3h-1zM1240 399h1v3h-1zM1240 405h1v3h-1zM1240 411h1v3h-1zM1240 417h1v3h-1zM1240 423h1v3h-1zM1240 429h1v3h-1zM1240 435h1v3h-1zM1240 441h1v3h-1zM1240 447h1v3h-1zM1240 453h1v3h-1zM1240 459h1v3h-1zM1240 465h1v3h-1zM1240 471h1v3h-1zM1240 477h1v3h-1zM1240 483h1v3h-1zM1240 489h1v3h-1zM1240 495h1v3h-1zM1240 501h1v3h-1zM1240 507h1v3h-1zM1240 513h1v3h-1zM1240 519h1v3h-1zM1240 525h1v3h-1zM1240 531h1v3h-1zM1240 537h1v3h-1zM1240 543h1v3h-1zM1240 549h1v3h-1zM1240 555h1v3h-1zM1240 561h1v3h-1zM1240 567h1v3h-1zM1240 573h1v3h-1zM1240 579h1v3h-1zM1240 585h1v3h-1zM1240 591h1v3h-1zM1240 597h1v3h-1zM1240 603h1v3h-1zM1240 609h1v3h-1zM1240 615h1v3h-1zM1240 621h1v3h-1zM1240 627h1v2h-1zM1255 21h1v3h-1zM1255 27h1v3h-1zM1255 33h1v3h-1zM1255 39h1v3h-1zM1255 45h1v3h-1zM1255 51h1v3h-1zM1255 57h1v3h-1zM1255 63h1v3h-1zM1255 69h1v3h-1zM1255 75h1v3h-1zM1255 81h1v3h-1zM1255 87h1v3h-1zM1255 93h1v3h-1zM1255 99h1v3h-1zM1255 105h1v3h-1zM1255 111h1v3h-1zM1255 117h1v3h-1zM1255 123h1v3h-1zM1255 129h1v3h-1zM1255 135h1v3h-1zM1255 141h1v3h-1zM1255 147h1v3h-1zM1255 153h1v3h-1zM1255 159h1v3h-1zM1255 165h1v3h-1zM1255 171h1v3h-1zM1255 177h1v3h-1zM1255 183h1v3h-1zM1255 189h1v3h-1zM1255 195h1v3h-1zM1255 201h1v3h-1zM1255 207h1v3h-1zM1255 213h1v3h-1zM1255 219h1v3h-1zM1255 225h1v3h-1zM1255 231h1v3h-1zM1255 237h1v3h-1zM1255 243h1v3h-1zM1255 249h1v3h-1zM1255 255h1v3h-1zM1255 261h1v3h-1zM1255 267h1v3h-1zM1255 273h1v3h-1zM1255 279h1v3h-1zM1255 285h1v3h-1zM1255 291h1v3h-1zM1255 297h1v3h-1zM1255 303h1v3h-1zM1255 309h1v3h-1zM1255 315h1v3h-1zM1255 321h1v3h-1zM1255 327h1v3h-1zM1255 333h1v3h-1zM1255 339h1v3h-1zM1255 345h1v3h-1zM1255 351h1v3h-1zM1255 357h1v3h-1zM1255 363h1v3h-1zM1255 369h1v3h-1zM1255 375h1v3h-1zM1255 381h1v3h-1zM1255 387h1v3h-1zM1255 393h1v3h-1zM1255 399h1v3h-1zM1255 405h1v3h-1zM1255 411h1v3h-1zM1255 417h1v3h-1zM1255 423h1v3h-1zM1255 429h1v3h-1zM1255 435h1v3h-1zM1255 441h1v3h-1zM1255 447h1v3h-1zM1255 453h1v3h-1zM1255 459h1v3h-1zM1255 465h1v3h-1zM1255 471h1v3h-1zM1255 477h1v3h-1zM1255 483h1v3h-1zM1255 489h1v3h-1zM1255 495h1v3h-1zM1255 501h1v3h-1zM1255 507h1v3h-1zM1255 513h1v3h-1zM1255 519h1v3h-1zM1255 525h1v3h-1zM1255 531h1v3h-1zM1255 537h1v3h-1zM1255 543h1v3h-1zM1255 549h1v3h-1zM1255 555h1v3h-1zM1255 561h1v3h-1zM1255 567h1v3h-1zM1255 573h1v3h-1zM1255 579h1v3h-1zM1255 585h1v3h-1zM1255 591h1v3h-1zM1255 597h1v3h-1zM1255 603h1v3h-1zM1255 609h1v3h-1zM1255 615h1v3h-1zM1255 621h1v3h-1zM1255 627h1v2h-1zM1268 21h1v3h-1zM1268 27h1v3h-1zM1268 33h1v3h-1zM1268 39h1v3h-1zM1268 45h1v3h-1zM1268 51h1v3h-1zM1268 57h1v3h-1zM1268 63h1v3h-1zM1268 69h1v3h-1zM1268 75h1v3h-1zM1268 81h1v3h-1zM1268 87h1v3h-1zM1268 93h1v3h-1zM1268 99h1v3h-1zM1268 105h1v3h-1zM1268 111h1v3h-1zM1268 117h1v3h-1zM1268 123h1v3h-1zM1268 129h1v3h-1zM1268 135h1v3h-1zM1268 141h1v3h-1zM1268 147h1v3h-1zM1268 153h1v3h-1zM1268 159h1v3h-1zM1268 165h1v3h-1zM1268 171h1v3h-1zM1268 177h1v3h-1zM1268 183h1v3h-1zM1268 189h1v3h-1zM1268 195h1v3h-1zM1268 201h1v3h-1zM1268 207h1v3h-1zM1268 213h1v3h-1zM1268 219h1v3h-1zM1268 225h1v3h-1zM1268 231h1v3h-1zM1268 237h1v3h-1zM1268 243h1v3h-1zM1268 249h1v3h-1zM1268 255h1v3h-1zM1268 261h1v3h-1zM1268 267h1v3h-1zM1268 273h1v3h-1zM1268 279h1v3h-1zM1268 285h1v3h-1zM1268 291h1v3h-1zM1268 297h1v3h-1zM1268 303h1v3h-1zM1268 309h1v3h-1zM1268 315h1v3h-1zM1268 321h1v3h-1zM1268 327h1v3h-1zM1268 333h1v3h-1zM1268 339h1v3h-1zM1268 345h1v3h-1zM1268 351h1v3h-1zM1268 357h1v3h-1zM1268 363h1v3h-1zM1268 369h1v3h-1zM1268 375h1v3h-1zM1268 381h1v3h-1zM1268 387h1v3h-1zM1268 393h1v3h-1zM1268 399h1v3h-1zM1268 405h1v3h-1zM1268 411h1v3h-1zM1268 417h1v3h-1zM1268 423h1v3h-1zM1268 429h1v3h-1zM1268 435h1v3h-1zM1268 441h1v3h-1zM1268 447h1v3h-1zM1268 453h1v3h-1zM1268 459h1v3h-1zM1268 465h1v3h-1zM1268 471h1v3h-1zM1268 477h1v3h-1zM1268 483h1v3h-1zM1268 489h1v3h-1zM1268 495h1v3h-1zM1268 501h1v3h-1zM1268 507h1v3h-1zM1268 513h1v3h-1zM1268 519h1v3h-1zM1268 525h1v3h-1zM1268 531h1v3h-1zM1268 537h1v3h-1zM1268 543h1v3h-1zM1268 549h1v3h-1zM1268 555h1v3h-1zM1268 561h1v3h-1zM1268 567h1v3h-1zM1268 573h1v3h-1zM1268 579h1v3h-1zM1268 585h1v3h-1zM1268 591h1v3h-1zM1268 597h1v3h-1zM1268 603h1v3h-1zM1268 609h1v3h-1zM1268 615h1v3h-1zM1268 621h1v3h-1zM1268 627h1v2h-1zM1353 21h1v3h-1zM1353 27h1v3h-1zM1353 33h1v3h-1zM1353 39h1v3h-1zM1353 45h1v3h-1zM1353 51h1v3h-1zM1353 57h1v3h-1zM1353 63h1v3h-1zM1353 69h1v3h-1zM1353 75h1v3h-1zM1353 81h1v3h-1zM1353 87h1v3h-1zM1353 93h1v3h-1zM1353 99h1v3h-1zM1353 105h1v3h-1zM1353 111h1v3h-1zM1353 117h1v3h-1zM1353 123h1v3h-1zM1353 129h1v3h-1zM1353 135h1v3h-1zM1353 141h1v3h-1zM1353 147h1v3h-1zM1353 153h1v3h-1zM1353 159h1v3h-1zM1353 165h1v3h-1zM1353 171h1v3h-1zM1353 177h1v3h-1zM1353 183h1v3h-1zM1353 189h1v3h-1zM1353 195h1v3h-1zM1353 201h1v3h-1zM1353 207h1v3h-1zM1353 213h1v3h-1zM1353 219h1v3h-1zM1353 225h1v3h-1zM1353 231h1v3h-1zM1353 237h1v3h-1zM1353 243h1v3h-1zM1353 249h1v3h-1zM1353 255h1v3h-1zM1353 261h1v3h-1zM1353 267h1v3h-1zM1353 273h1v3h-1zM1353 279h1v3h-1zM1353 285h1v3h-1zM1353 291h1v3h-1zM1353 297h1v3h-1zM1353 303h1v3h-1zM1353 309h1v3h-1zM1353 315h1v3h-1zM1353 321h1v3h-1zM1353 327h1v3h-1zM1353 333h1v3h-1zM1353 339h1v3h-1zM1353 345h1v3h-1zM1353 351h1v3h-1zM1353 357h1v3h-1zM1353 363h1v3h-1zM1353 369h1v3h-1zM1353 375h1v3h-1zM1353 381h1v3h-1zM1353 387h1v3h-1zM1353 393h1v3h-1zM1353 399h1v3h-1zM1353 405h1v3h-1zM1353 411h1v3h-1zM1353 417h1v3h-1zM1353 423h1v3h-1zM1353 429h1v3h-1zM1353 435h1v3h-1zM1353 441h1v3h-1zM1353 447h1v3h-1zM1353 453h1v3h-1zM1353 459h1v3h-1zM1353 465h1v3h-1zM1353 471h1v3h-1zM1353 477h1v3h-1zM1353 483h1v3h-1zM1353 489h1v3h-1zM1353 495h1v3h-1zM1353 501h1v3h-1zM1353 507h1v3h-1zM1353 513h1v3h-1zM1353 519h1v3h-1zM1353 525h1v3h-1zM1353 531h1v3h-1zM1353 537h1v3h-1zM1353 543h1v3h-1zM1353 549h1v3h-1zM1353 555h1v3h-1zM1353 561h1v3h-1zM1353 567h1v3h-1zM1353 573h1v3h-1zM1353 579h1v3h-1zM1353 585h1v3h-1zM1353 591h1v3h-1zM1353 597h1v3h-1zM1353 603h1v3h-1zM1353 609h1v3h-1zM1353 615h1v3h-1zM1353 621h1v3h-1zM1353 627h1v2h-1zM1403 21h1v3h-1zM1403 27h1v3h-1zM1403 33h1v3h-1zM1403 39h1v3h-1zM1403 45h1v3h-1zM1403 51h1v3h-1zM1403 57h1v3h-1zM1403 63h1v3h-1zM1403 69h1v3h-1zM1403 75h1v3h-1zM1403 81h1v3h-1zM1403 87h1v3h-1zM1403 93h1v3h-1zM1403 99h1v3h-1zM1403 105h1v3h-1zM1403 111h1v3h-1zM1403 117h1v3h-1zM1403 123h1v3h-1zM1403 129h1v3h-1zM1403 135h1v3h-1zM1403 141h1v3h-1zM1403 147h1v3h-1zM1403 153h1v3h-1zM1403 159h1v3h-1zM1403 165h1v3h-1zM1403 171h1v3h-1zM1403 177h1v3h-1zM1403 183h1v3h-1zM1403 189h1v3h-1zM1403 195h1v3h-1zM1403 201h1v3h-1zM1403 207h1v3h-1zM1403 213h1v3h-1zM1403 219h1v3h-1zM1403 225h1v3h-1zM1403 231h1v3h-1zM1403 237h1v3h-1zM1403 243h1v3h-1zM1403 249h1v3h-1zM1403 255h1v3h-1zM1403 261h1v3h-1zM1403 267h1v3h-1zM1403 273h1v3h-1zM1403 279h1v3h-1zM1403 285h1v3h-1zM1403 291h1v3h-1zM1403 297h1v3h-1zM1403 303h1v3h-1zM1403 309h1v3h-1zM1403 315h1v3h-1zM1403 321h1v3h-1zM1403 327h1v3h-1zM1403 333h1v3h-1zM1403 339h1v3h-1zM1403 345h1v3h-1zM1403 351h1v3h-1zM1403 357h1v3h-1zM1403 363h1v3h-1zM1403 369h1v3h-1zM1403 375h1v3h-1zM1403 381h1v3h-1zM1403 387h1v3h-1zM1403 393h1v3h-1zM1403 399h1v3h-1zM1403 405h1v3h-1zM1403 411h1v3h-1zM1403 417h1v3h-1zM1403 423h1v3h-1zM1403 429h1v3h-1zM1403 435h1v3h-1zM1403 441h1v3h-1zM1403 447h1v3h-1zM1403 453h1v3h-1zM1403 459h1v3h-1zM1403 465h1v3h-1zM1403 471h1v3h-1zM1403 477h1v3h-1zM1403 483h1v3h-1zM1403 489h1v3h-1zM1403 495h1v3h-1zM1403 501h1v3h-1zM1403 507h1v3h-1zM1403 513h1v3h-1zM1403 519h1v3h-1zM1403 525h1v3h-1zM1403 531h1v3h-1zM1403 537h1v3h-1zM1403 543h1v3h-1zM1403 549h1v3h-1zM1403 555h1v3h-1zM1403 561h1v3h-1zM1403 567h1v3h-1zM1403 573h1v3h-1zM1403 579h1v3h-1zM1403 585h1v3h-1zM1403 591h1v3h-1zM1403 597h1v3h-1zM1403 603h1v3h-1zM1403 609h1v3h-1zM1403 615h1v3h-1zM1403 621h1v3h-1zM1403 627h1v2h-1zM1438 21h1v3h-1zM1438 27h1v3h-1zM1438 33h1v3h-1zM1438 39h1v3h-1zM1438 45h1v3h-1zM1438 51h1v3h-1zM1438 57h1v3h-1zM1438 63h1v3h-1zM1438 69h1v3h-1zM1438 75h1v3h-1zM1438 81h1v3h-1zM1438 87h1v3h-1zM1438 93h1v3h-1zM1438 99h1v3h-1zM1438 105h1v3h-1zM1438 111h1v3h-1zM1438 117h1v3h-1zM1438 123h1v3h-1zM1438 129h1v3h-1zM1438 135h1v3h-1zM1438 141h1v3h-1zM1438 147h1v3h-1zM1438 153h1v3h-1zM1438 159h1v3h-1zM1438 165h1v3h-1zM1438 171h1v3h-1zM1438 177h1v3h-1zM1438 183h1v3h-1zM1438 189h1v3h-1zM1438 195h1v3h-1zM1438 201h1v3h-1zM1438 207h1v3h-1zM1438 213h1v3h-1zM1438 219h1v3h-1zM1438 225h1v3h-1zM1438 231h1v3h-1zM1438 237h1v3h-1zM1438 243h1v3h-1zM1438 249h1v3h-1zM1438 255h1v3h-1zM1438 261h1v3h-1zM1438 267h1v3h-1zM1438 273h1v3h-1zM1438 279h1v3h-1zM1438 285h1v3h-1zM1438 291h1v3h-1zM1438 297h1v3h-1zM1438 303h1v3h-1zM1438 309h1v3h-1zM1438 315h1v3h-1zM1438 321h1v3h-1zM1438 327h1v3h-1zM1438 333h1v3h-1zM1438 339h1v3h-1zM1438 345h1v3h-1zM1438 351h1v3h-1zM1438 357h1v3h-1zM1438 363h1v3h-1zM1438 369h1v3h-1zM1438 375h1v3h-1zM1438 381h1v3h-1zM1438 387h1v3h-1zM1438 393h1v3h-1zM1438 399h1v3h-1zM1438 405h1v3h-1zM1438 411h1v3h-1zM1438 417h1v3h-1zM1438 423h1v3h-1zM1438 429h1v3h-1zM1438 435h1v3h-1zM1438 441h1v3h-1zM1438 447h1v3h-1zM1438 453h1v3h-1zM1438 459h1v3h-1zM1438 465h1v3h-1zM1438 471h1v3h-1zM1438 477h1v3h-1zM1438 483h1v3h-1zM1438 489h1v3h-1zM1438 495h1v3h-1zM1438 501h1v3h-1zM1438 507h1v3h-1zM1438 513h1v3h-1zM1438 519h1v3h-1zM1438 525h1v3h-1zM1438 531h1v3h-1zM1438 537h1v3h-1zM1438 543h1v3h-1zM1438 549h1v3h-1zM1438 555h1v3h-1zM1438 561h1v3h-1zM1438 567h1v3h-1zM1438 573h1v3h-1zM1438 579h1v3h-1zM1438 585h1v3h-1zM1438 591h1v3h-1zM1438 597h1v3h-1zM1438 603h1v3h-1zM1438 609h1v3h-1zM1438 615h1v3h-1zM1438 621h1v3h-1zM1438 627h1v2h-1zM1466 21h1v3h-1zM1466 27h1v3h-1zM1466 33h1v3h-1zM1466 39h1v3h-1zM1466 45h1v3h-1zM1466 51h1v3h-1zM1466 57h1v3h-1zM1466 63h1v3h-1zM1466 69h1v3h-1zM1466 75h1v3h-1zM1466 81h1v3h-1zM1466 87h1v3h-1zM1466 93h1v3h-1zM1466 99h1v3h-1zM1466 105h1v3h-1zM1466 111h1v3h-1zM1466 117h1v3h-1zM1466 123h1v3h-1zM1466 129h1v3h-1zM1466 135h1v3h-1zM1466 141h1v3h-1zM1466 147h1v3h-1zM1466 153h1v3h-1zM1466 159h1v3h-1zM1466 165h1v3h-1zM1466 171h1v3h-1zM1466 177h1v3h-1zM1466 183h1v3h-1zM1466 189h1v3h-1zM1466 195h1v3h-1zM1466 201h1v3h-1zM1466 207h1v3h-1zM1466 213h1v3h-1zM1466 219h1v3h-1zM1466 225h1v3h-1zM1466 231h1v3h-1zM1466 237h1v3h-1zM1466 243h1v3h-1zM1466 249h1v3h-1zM1466 255h1v3h-1zM1466 261h1v3h-1zM1466 267h1v3h-1zM1466 273h1v3h-1zM1466 279h1v3h-1zM1466 285h1v3h-1zM1466 291h1v3h-1zM1466 297h1v3h-1zM1466 303h1v3h-1zM1466 309h1v3h-1zM1466 315h1v3h-1zM1466 321h1v3h-1zM1466 327h1v3h-1zM1466 333h1v3h-1zM1466 339h1v3h-1zM1466 345h1v3h-1zM1466 351h1v3h-1zM1466 357h1v3h-1zM1466 363h1v3h-1zM1466 369h1v3h-1zM1466 375h1v3h-1zM1466 381h1v3h-1zM1466 387h1v3h-1zM1466 393h1v3h-1zM1466 399h1v3h-1zM1466 405h1v3h-1zM1466 411h1v3h-1zM1466 417h1v3h-1zM1466 423h1v3h-1zM1466 429h1v3h-1zM1466 435h1v3h-1zM1466 441h1v3h-1zM1466 447h1v3h-1zM1466 453h1v3h-1zM1466 459h1v3h-1zM1466 465h1v3h-1zM1466 471h1v3h-1zM1466 477h1v3h-1zM1466 483h1v3h-1zM1466 489h1v3h-1zM1466 495h1v3h-1zM1466 501h1v3h-1zM1466 507h1v3h-1zM1466 513h1v3h-1zM1466 519h1v3h-1zM1466 525h1v3h-1zM1466 531h1v3h-1zM1466 537h1v3h-1zM1466 543h1v3h-1zM1466 549h1v3h-1zM1466 555h1v3h-1zM1466 561h1v3h-1zM1466 567h1v3h-1zM1466 573h1v3h-1zM1466 579h1v3h-1zM1466 585h1v3h-1zM1466 591h1v3h-1zM1466 597h1v3h-1zM1466 603h1v3h-1zM1466 609h1v3h-1zM1466 615h1v3h-1zM1466 621h1v3h-1zM1466 627h1v2h-1zM1488 21h1v3h-1zM1488 27h1v3h-1zM1488 33h1v3h-1zM1488 39h1v3h-1zM1488 45h1v3h-1zM1488 51h1v3h-1zM1488 57h1v3h-1zM1488 63h1v3h-1zM1488 69h1v3h-1zM1488 75h1v3h-1zM1488 81h1v3h-1zM1488 87h1v3h-1zM1488 93h1v3h-1zM1488 99h1v3h-1zM1488 105h1v3h-1zM1488 111h1v3h-1zM1488 117h1v3h-1zM1488 123h1v3h-1zM1488 129h1v3h-1zM1488 135h1v3h-1zM1488 141h1v3h-1zM1488 147h1v3h-1zM1488 153h1v3h-1zM1488 159h1v3h-1zM1488 165h1v3h-1zM1488 171h1v3h-1zM1488 177h1v3h-1zM1488 183h1v3h-1zM1488 189h1v3h-1zM1488 195h1v3h-1zM1488 201h1v3h-1zM1488 207h1v3h-1zM1488 213h1v3h-1zM1488 219h1v3h-1zM1488 225h1v3h-1zM1488 231h1v3h-1zM1488 237h1v3h-1zM1488 243h1v3h-1zM1488 249h1v3h-1zM1488 255h1v3h-1zM1488 261h1v3h-1zM1488 267h1v3h-1zM1488 273h1v3h-1zM1488 279h1v3h-1zM1488 285h1v3h-1zM1488 291h1v3h-1zM1488 297h1v3h-1zM1488 303h1v3h-1zM1488 309h1v3h-1zM1488 315h1v3h-1zM1488 321h1v3h-1zM1488 327h1v3h-1zM1488 333h1v3h-1zM1488 339h1v3h-1zM1488 345h1v3h-1zM1488 351h1v3h-1zM1488 357h1v3h-1zM1488 363h1v3h-1zM1488 369h1v3h-1zM1488 375h1v3h-1zM1488 381h1v3h-1zM1488 387h1v3h-1zM1488 393h1v3h-1zM1488 399h1v3h-1zM1488 405h1v3h-1zM1488 411h1v3h-1zM1488 417h1v3h-1zM1488 423h1v3h-1zM1488 429h1v3h-1zM1488 435h1v3h-1zM1488 441h1v3h-1zM1488 447h1v3h-1zM1488 453h1v3h-1zM1488 459h1v3h-1zM1488 465h1v3h-1zM1488 471h1v3h-1zM1488 477h1v3h-1zM1488 483h1v3h-1zM1488 489h1v3h-1zM1488 495h1v3h-1zM1488 501h1v3h-1zM1488 507h1v3h-1zM1488 513h1v3h-1zM1488 519h1v3h-1zM1488 525h1v3h-1zM1488 531h1v3h-1zM1488 537h1v3h-1zM1488 543h1v3h-1zM1488 549h1v3h-1zM1488 555h1v3h-1zM1488 561h1v3h-1zM1488 567h1v3h-1zM1488 573h1v3h-1zM1488 579h1v3h-1zM1488 585h1v3h-1zM1488 591h1v3h-1zM1488 597h1v3h-1zM1488 603h1v3h-1zM1488 609h1v3h-1zM1488 615h1v3h-1zM1488 621h1v3h-1zM1488 627h1v2h-1zM49 78h3v1h-3zM55 78h3v1h-3zM61 78h3v1h-3zM67 78h3v1h-3zM73 78h3v1h-3zM79 78h3v1h-3zM85 78h3v1h-3zM91 78h3v1h-3zM97 78h3v1h-3zM103 78h3v1h-3zM109 78h3v1h-3zM115 78h3v1h-3zM121 78h3v1h-3zM127 78h3v1h-3zM133 78h3v1h-3zM139 78h3v1h-3zM145 78h3v1h-3zM151 78h3v1h-3zM157 78h3v1h-3zM163 78h3v1h-3zM169 78h3v1h-3zM175 78h3v1h-3zM181 78h3v1h-3zM187 78h3v1h-3zM193 78h3v1h-3zM199 78h3v1h-3zM205 78h3v1h-3zM211 78h3v1h-3zM217 78h3v1h-3zM223 78h3v1h-3zM229 78h3v1h-3zM235 78h3v1h-3zM241 78h3v1h-3zM247 78h3v1h-3zM253 78h3v1h-3zM259 78h3v1h-3zM265 78h3v1h-3zM271 78h3v1h-3zM277 78h3v1h-3zM283 78h3v1h-3zM289 78h3v1h-3zM295 78h3v1h-3zM301 78h3v1h-3zM307 78h3v1h-3zM313 78h3v1h-3zM319 78h3v1h-3zM325 78h3v1h-3zM331 78h3v1h-3zM337 78h3v1h-3zM343 78h3v1h-3zM349 78h3v1h-3zM355 78h3v1h-3zM361 78h3v1h-3zM367 78h3v1h-3zM373 78h3v1h-3zM379 78h3v1h-3zM385 78h3v1h-3zM391 78h3v1h-3zM397 78h3v1h-3zM403 78h3v1h-3zM409 78h3v1h-3zM415 78h3v1h-3zM421 78h3v1h-3zM427 78h3v1h-3zM433 78h3v1h-3zM439 78h3v1h-3zM445 78h3v1h-3zM451 78h3v1h-3zM457 78h3v1h-3zM463 78h3v1h-3zM469 78h3v1h-3zM475 78h3v1h-3zM481 78h3v1h-3zM487 78h3v1h-3zM493 78h3v1h-3zM499 78h3v1h-3zM505 78h3v1h-3zM511 78h3v1h-3zM517 78h3v1h-3zM523 78h3v1h-3zM529 78h3v1h-3zM535 78h3v1h-3zM541 78h3v1h-3zM547 78h3v1h-3zM553 78h3v1h-3zM559 78h3v1h-3zM565 78h3v1h-3zM571 78h3v1h-3zM577 78h3v1h-3zM583 78h3v1h-3zM589 78h3v1h-3zM595 78h3v1h-3zM601 78h3v1h-3zM607 78h3v1h-3zM613 78h3v1h-3zM619 78h3v1h-3zM625 78h3v1h-3zM631 78h3v1h-3zM637 78h3v1h-3zM643 78h3v1h-3zM649 78h3v1h-3zM655 78h3v1h-3zM661 78h3v1h-3zM667 78h3v1h-3zM673 78h3v1h-3zM679 78h3v1h-3zM685 78h3v1h-3zM691 78h3v1h-3zM697 78h3v1h-3zM703 78h3v1h-3zM709 78h3v1h-3zM715 78h3v1h-3zM721 78h3v1h-3zM727 78h3v1h-3zM733 78h3v1h-3zM739 78h3v1h-3zM745 78h3v1h-3zM751 78h3v1h-3zM757 78h3v1h-3zM763 78h3v1h-3zM769 78h3v1h-3zM775 78h3v1h-3zM781 78h3v1h-3zM787 78h3v1h-3zM793 78h3v1h-3zM799 78h3v1h-3zM805 78h3v1h-3zM811 78h3v1h-3zM817 78h3v1h-3zM823 78h3v1h-3zM829 78h3v1h-3zM835 78h3v1h-3zM841 78h3v1h-3zM847 78h3v1h-3zM853 78h3v1h-3zM859 78h3v1h-3zM865 78h3v1h-3zM871 78h3v1h-3zM877 78h3v1h-3zM883 78h3v1h-3zM889 78h3v1h-3zM895 78h3v1h-3zM901 78h3v1h-3zM907 78h3v1h-3zM913 78h3v1h-3zM919 78h3v1h-3zM925 78h3v1h-3zM931 78h3v1h-3zM937 78h3v1h-3zM943 78h3v1h-3zM949 78h3v1h-3zM955 78h3v1h-3zM961 78h3v1h-3zM967 78h3v1h-3zM973 78h3v1h-3zM979 78h3v1h-3zM985 78h3v1h-3zM991 78h3v1h-3zM997 78h3v1h-3zM1003 78h3v1h-3zM1009 78h3v1h-3zM1015 78h3v1h-3zM1021 78h3v1h-3zM1027 78h3v1h-3zM1033 78h3v1h-3zM1039 78h3v1h-3zM1045 78h3v1h-3zM1051 78h3v1h-3zM1057 78h3v1h-3zM1063 78h3v1h-3zM1069 78h3v1h-3zM1075 78h3v1h-3zM1081 78h3v1h-3zM1087 78h3v1h-3zM1093 78h3v1h-3zM1099 78h3v1h-3zM1105 78h3v1h-3zM1111 78h3v1h-3zM1117 78h3v1h-3zM1123 78h3v1h-3zM1129 78h3v1h-3zM1135 78h3v1h-3zM1141 78h3v1h-3zM1147 78h3v1h-3zM1153 78h3v1h-3zM1159 78h3v1h-3zM1165 78h3v1h-3zM1171 78h3v1h-3zM1177 78h3v1h-3zM1183 78h3v1h-3zM1189 78h3v1h-3zM1195 78h3v1h-3zM1201 78h3v1h-3zM1207 78h3v1h-3zM1213 78h3v1h-3zM1219 78h3v1h-3zM1225 78h3v1h-3zM1231 78h3v1h-3zM1237 78h3v1h-3zM1243 78h3v1h-3zM1249 78h3v1h-3zM1255 78h3v1h-3zM1261 78h3v1h-3zM1267 78h3v1h-3zM1273 78h3v1h-3zM1279 78h3v1h-3zM1285 78h3v1h-3zM1291 78h3v1h-3zM1297 78h3v1h-3zM1303 78h3v1h-3zM1309 78h3v1h-3zM1315 78h3v1h-3zM1321 78h3v1h-3zM1327 78h3v1h-3zM1333 78h3v1h-3zM1339 78h3v1h-3zM1345 78h3v1h-3zM1351 78h3v1h-3zM1357 78h3v1h-3zM1363 78h3v1h-3zM1369 78h3v1h-3zM1375 78h3v1h-3zM1381 78h3v1h-3zM1387 78h3v1h-3zM1393 78h3v1h-3zM1399 78h3v1h-3zM1405 78h3v1h-3zM1411 78h3v1h-3zM1417 78h3v1h-3zM1423 78h3v1h-3zM1429 78h3v1h-3zM1435 78h3v1h-3zM1441 78h3v1h-3zM1447 78h3v1h-3zM1453 78h3v1h-3zM1459 78h3v1h-3zM1465 78h3v1h-3zM1471 78h3v1h-3zM1477 78h3v1h-3zM1483 78h3v1h-3zM1489 78h3v1h-3zM1495 78h3v1h-3zM49 139h3v1h-3zM55 139h3v1h-3zM61 139h3v1h-3zM67 139h3v1h-3zM73 139h3v1h-3zM79 139h3v1h-3zM85 139h3v1h-3zM91 139h3v1h-3zM97 139h3v1h-3zM103 139h3v1h-3zM109 139h3v1h-3zM115 139h3v1h-3zM121 139h3v1h-3zM127 139h3v1h-3zM133 139h3v1h-3zM139 139h3v1h-3zM145 139h3v1h-3zM151 139h3v1h-3zM157 139h3v1h-3zM163 139h3v1h-3zM169 139h3v1h-3zM175 139h3v1h-3zM181 139h3v1h-3zM187 139h3v1h-3zM193 139h3v1h-3zM199 139h3v1h-3zM205 139h3v1h-3zM211 139h3v1h-3zM217 139h3v1h-3zM223 139h3v1h-3zM229 139h3v1h-3zM235 139h3v1h-3zM241 139h3v1h-3zM247 139h3v1h-3zM253 139h3v1h-3zM259 139h3v1h-3zM265 139h3v1h-3zM271 139h3v1h-3zM277 139h3v1h-3zM283 139h3v1h-3zM289 139h3v1h-3zM295 139h3v1h-3zM301 139h3v1h-3zM307 139h3v1h-3zM313 139h3v1h-3zM319 139h3v1h-3zM325 139h3v1h-3zM331 139h3v1h-3zM337 139h3v1h-3zM343 139h3v1h-3zM349 139h3v1h-3zM355 139h3v1h-3zM361 139h3v1h-3zM367 139h3v1h-3zM373 139h3v1h-3zM379 139h3v1h-3zM385 139h3v1h-3zM391 139h3v1h-3zM397 139h3v1h-3zM403 139h3v1h-3zM409 139h3v1h-3zM415 139h3v1h-3zM421 139h3v1h-3zM427 139h3v1h-3zM433 139h3v1h-3zM439 139h3v1h-3zM445 139h3v1h-3zM451 139h3v1h-3zM457 139h3v1h-3zM463 139h3v1h-3zM469 139h3v1h-3zM475 139h3v1h-3zM481 139h3v1h-3zM487 139h3v1h-3zM493 139h3v1h-3zM499 139h3v1h-3zM505 139h3v1h-3zM511 139h3v1h-3zM517 139h3v1h-3zM523 139h3v1h-3zM529 139h3v1h-3zM535 139h3v1h-3zM541 139h3v1h-3zM547 139h3v1h-3zM553 139h3v1h-3zM559 139h3v1h-3zM565 139h3v1h-3zM571 139h3v1h-3zM577 139h3v1h-3zM583 139h3v1h-3zM589 139h3v1h-3zM595 139h3v1h-3zM601 139h3v1h-3zM607 139h3v1h-3zM613 139h3v1h-3zM619 139h3v1h-3zM625 139h3v1h-3zM631 139h3v1h-3zM637 139h3v1h-3zM643 139h3v1h-3zM649 139h3v1h-3zM655 139h3v1h-3zM661 139h3v1h-3zM667 139h3v1h-3zM673 139h3v1h-3zM679 139h3v1h-3zM685 139h3v1h-3zM691 139h3v1h-3zM697 139h3v1h-3zM703 139h3v1h-3zM709 139h3v1h-3zM715 139h3v1h-3zM721 139h3v1h-3zM727 139h3v1h-3zM733 139h3v1h-3zM739 139h3v1h-3zM745 139h3v1h-3zM751 139h3v1h-3zM757 139h3v1h-3zM763 139h3v1h-3zM769 139h3v1h-3zM775 139h3v1h-3zM781 139h3v1h-3zM787 139h3v1h-3zM793 139h3v1h-3zM799 139h3v1h-3zM805 139h3v1h-3zM811 139h3v1h-3zM817 139h3v1h-3zM823 139h3v1h-3zM829 139h3v1h-3zM835 139h3v1h-3zM841 139h3v1h-3zM847 139h3v1h-3zM853 139h3v1h-3zM859 139h3v1h-3zM865 139h3v1h-3zM871 139h3v1h-3zM877 139h3v1h-3zM883 139h3v1h-3zM889 139h3v1h-3zM895 139h3v1h-3zM901 139h3v1h-3zM907 139h3v1h-3zM913 139h3v1h-3zM919 139h3v1h-3zM925 139h3v1h-3zM931 139h3v1h-3zM937 139h3v1h-3zM943 139h3v1h-3zM949 139h3v1h-3zM955 139h3v1h-3zM961 139h3v1h-3zM967 139h3v1h-3zM973 139h3v1h-3zM979 139h3v1h-3zM985 139h3v1h-3zM991 139h3v1h-3zM997 139h3v1h-3zM1003 139h3v1h-3zM1009 139h3v1h-3zM1015 139h3v1h-3zM1021 139h3v1h-3zM1027 139h3v1h-3zM1033 139h3v1h-3zM1039 139h3v1h-3zM1045 139h3v1h-3zM1051 139h3v1h-3zM1057 139h3v1h-3zM1063 139h3v1h-3zM1069 139h3v1h-3zM1075 139h3v1h-3zM1081 139h3v1h-3zM1087 139h3v1h-3zM1093 139h3v1h-3zM1099 139h3v1h-3zM1105 139h3v1h-3zM1111 139h3v1h-3zM1117 139h3v1h-3zM1123 139h3v1h-3zM1129 139h3v1h-3zM1135 139h3v1h-3zM1141 139h3v1h-3zM1147 139h3v1h-3zM1153 139h3v1h-3zM1159 139h3v1h-3zM1165 139h3v1h-3zM1171 139h3v1h-3zM1177 139h3v1h-3zM1183 139h3v1h-3zM1189 139h3v1h-3zM1195 139h3v1h-3zM1201 139h3v1h-3zM1207 139h3v1h-3zM1213 139h3v1h-3zM1219 139h3v1h-3zM1225 139h3v1h-3zM1231 139h3v1h-3zM1237 139h3v1h-3zM1243 139h3v1h-3zM1249 139h3v1h-3zM1255 139h3v1h-3zM1261 139h3v1h-3zM1267 139h3v1h-3zM1273 139h3v1h-3zM1279 139h3v1h-3zM1285 139h3v1h-3zM1291 139h3v1h-3zM1297 139h3v1h-3zM1303 139h3v1h-3zM1309 139h3v1h-3zM1315 139h3v1h-3zM1321 139h3v1h-3zM1327 139h3v1h-3zM1333 139h3v1h-3zM1339 139h3v1h-3zM1345 139h3v1h-3zM1351 139h3v1h-3zM1357 139h3v1h-3zM1363 139h3v1h-3zM1369 139h3v1h-3zM1375 139h3v1h-3zM1381 139h3v1h-3zM1387 139h3v1h-3zM1393 139h3v1h-3zM1399 139h3v1h-3zM1405 139h3v1h-3zM1411 139h3v1h-3zM1417 139h3v1h-3zM1423 139h3v1h-3zM1429 139h3v1h-3zM1435 139h3v1h-3zM1441 139h3v1h-3zM1447 139h3v1h-3zM1453 139h3v1h-3zM1459 139h3v1h-3zM1465 139h3v1h-3zM1471 139h3v1h-3zM1477 139h3v1h-3zM1483 139h3v1h-3zM1489 139h3v1h-3zM1495 139h3v1h-3zM49 201h3v1h-3zM55 201h3v1h-3zM61 201h3v1h-3zM67 201h3v1h-3zM73 201h3v1h-3zM79 201h3v1h-3zM85 201h3v1h-3zM91 201h3v1h-3zM97 201h3v1h-3zM103 201h3v1h-3zM109 201h3v1h-3zM115 201h3v1h-3zM121 201h3v1h-3zM127 201h3v1h-3zM133 201h3v1h-3zM139 201h3v1h-3zM145 201h3v1h-3zM151 201h3v1h-3zM157 201h3v1h-3zM163 201h3v1h-3zM169 201h3v1h-3zM175 201h3v1h-3zM181 201h3v1h-3zM187 201h3v1h-3zM193 201h3v1h-3zM199 201h3v1h-3zM205 201h3v1h-3zM211 201h3v1h-3zM217 201h3v1h-3zM223 201h3v1h-3zM229 201h3v1h-3zM235 201h3v1h-3zM241 201h3v1h-3zM247 201h3v1h-3zM253 201h3v1h-3zM259 201h3v1h-3zM265 201h3v1h-3zM271 201h3v1h-3zM277 201h3v1h-3zM283 201h3v1h-3zM289 201h3v1h-3zM295 201h3v1h-3zM301 201h3v1h-3zM307 201h3v1h-3zM313 201h3v1h-3zM319 201h3v1h-3zM325 201h3v1h-3zM331 201h3v1h-3zM337 201h3v1h-3zM343 201h3v1h-3zM349 201h3v1h-3zM355 201h3v1h-3zM361 201h3v1h-3zM367 201h3v1h-3zM373 201h3v1h-3zM379 201h3v1h-3zM385 201h3v1h-3zM391 201h3v1h-3zM397 201h3v1h-3zM403 201h3v1h-3zM409 201h3v1h-3zM415 201h3v1h-3zM421 201h3v1h-3zM427 201h3v1h-3zM433 201h3v1h-3zM439 201h3v1h-3zM445 201h3v1h-3zM451 201h3v1h-3zM457 201h3v1h-3zM463 201h3v1h-3zM469 201h3v1h-3zM475 201h3v1h-3zM481 201h3v1h-3zM487 201h3v1h-3zM493 201h3v1h-3zM499 201h3v1h-3zM505 201h3v1h-3zM511 201h3v1h-3zM517 201h3v1h-3zM523 201h3v1h-3zM529 201h3v1h-3zM535 201h3v1h-3zM541 201h3v1h-3zM547 201h3v1h-3zM553 201h3v1h-3zM559 201h3v1h-3zM565 201h3v1h-3zM571 201h3v1h-3zM577 201h3v1h-3zM583 201h3v1h-3zM589 201h3v1h-3zM595 201h3v1h-3zM601 201h3v1h-3zM607 201h3v1h-3zM613 201h3v1h-3zM619 201h3v1h-3zM625 201h3v1h-3zM631 201h3v1h-3zM637 201h3v1h-3zM643 201h3v1h-3zM649 201h3v1h-3zM655 201h3v1h-3zM661 201h3v1h-3zM667 201h3v1h-3zM673 201h3v1h-3zM679 201h3v1h-3zM685 201h3v1h-3zM691 201h3v1h-3zM697 201h3v1h-3zM703 201h3v1h-3zM709 201h3v1h-3zM715 201h3v1h-3zM721 201h3v1h-3zM727 201h3v1h-3zM733 201h3v1h-3zM739 201h3v1h-3zM745 201h3v1h-3zM751 201h3v1h-3zM757 201h3v1h-3zM763 201h3v1h-3zM769 201h3v1h-3zM775 201h3v1h-3zM781 201h3v1h-3zM787 201h3v1h-3zM793 201h3v1h-3zM799 201h3v1h-3zM805 201h3v1h-3zM811 201h3v1h-3zM817 201h3v1h-3zM823 201h3v1h-3zM829 201h3v1h-3zM835 201h3v1h-3zM841 201h3v1h-3zM847 201h3v1h-3zM853 201h3v1h-3zM859 201h3v1h-3zM865 201h3v1h-3zM871 201h3v1h-3zM877 201h3v1h-3zM883 201h3v1h-3zM889 201h3v1h-3zM895 201h3v1h-3zM901 201h3v1h-3zM907 201h3v1h-3zM913 201h3v1h-3zM919 201h3v1h-3zM925 201h3v1h-3zM931 201h3v1h-3zM937 201h3v1h-3zM943 201h3v1h-3zM949 201h3v1h-3zM955 201h3v1h-3zM961 201h3v1h-3zM967 201h3v1h-3zM973 201h3v1h-3zM979 201h3v1h-3zM985 201h3v1h-3zM991 201h3v1h-3zM997 201h3v1h-3zM1003 201h3v1h-3zM1009 201h3v1h-3zM1015 201h3v1h-3zM1021 201h3v1h-3zM1027 201h3v1h-3zM1033 201h3v1h-3zM1039 201h3v1h-3zM1045 201h3v1h-3zM1051 201h3v1h-3zM1057 201h3v1h-3zM1063 201h3v1h-3zM1069 201h3v1h-3zM1075 201h3v1h-3zM1081 201h3v1h-3zM1087 201h3v1h-3zM1093 201h3v1h-3zM1099 201h3v1h-3zM1105 201h3v1h-3zM1111 201h3v1h-3zM1117 201h3v1h-3zM1123 201h3v1h-3zM1129 201h3v1h-3zM1135 201h3v1h-3zM1141 201h3v1h-3zM1147 201h3v1h-3zM1153 201h3v1h-3zM1159 201h3v1h-3zM1165 201h3v1h-3zM1171 201h3v1h-3zM1177 201h3v1h-3zM1183 201h3v1h-3zM1189 201h3v1h-3zM1195 201h3v1h-3zM1201 201h3v1h-3zM1207 201h3v1h-3zM1213 201h3v1h-3zM1219 201h3v1h-3zM1225 201h3v1h-3zM1231 201h3v1h-3zM1237 201h3v1h-3zM1243 201h3v1h-3zM1249 201h3v1h-3zM1255 201h3v1h-3zM1261 201h3v1h-3zM1267 201h3v1h-3zM1273 201h3v1h-3zM1279 201h3v1h-3zM1285 201h3v1h-3zM1291 201h3v1h-3zM1297 201h3v1h-3zM1303 201h3v1h-3zM1309 201h3v1h-3zM1315 201h3v1h-3zM1321 201h3v1h-3zM1327 201h3v1h-3zM1333 201h3v1h-3zM1339 201h3v1h-3zM1345 201h3v1h-3zM1351 201h3v1h-3zM1357 201h3v1h-3zM1363 201h3v1h-3zM1369 201h3v1h-3zM1375 201h3v1h-3zM1381 201h3v1h-3zM1387 201h3v1h-3zM1393 201h3v1h-3zM1399 201h3v1h-3zM1405 201h3v1h-3zM1411 201h3v1h-3zM1417 201h3v1h-3zM1423 201h3v1h-3zM1429 201h3v1h-3zM1435 201h3v1h-3zM1441 201h3v1h-3zM1447 201h3v1h-3zM1453 201h3v1h-3zM1459 201h3v1h-3zM1465 201h3v1h-3zM1471 201h3v1h-3zM1477 201h3v1h-3zM1483 201h3v1h-3zM1489 201h3v1h-3zM1495 201h3v1h-3zM49 262h3v1h-3zM55 262h3v1h-3zM61 262h3v1h-3zM67 262h3v1h-3zM73 262h3v1h-3zM79 262h3v1h-3zM85 262h3v1h-3zM91 262h3v1h-3zM97 262h3v1h-3zM103 262h3v1h-3zM109 262h3v1h-3zM115 262h3v1h-3zM121 262h3v1h-3zM127 262h3v1h-3zM133 262h3v1h-3zM139 262h3v1h-3zM145 262h3v1h-3zM151 262h3v1h-3zM157 262h3v1h-3zM163 262h3v1h-3zM169 262h3v1h-3zM175 262h3v1h-3zM181 262h3v1h-3zM187 262h3v1h-3zM193 262h3v1h-3zM199 262h3v1h-3zM205 262h3v1h-3zM211 262h3v1h-3zM217 262h3v1h-3zM223 262h3v1h-3zM229 262h3v1h-3zM235 262h3v1h-3zM241 262h3v1h-3zM247 262h3v1h-3zM253 262h3v1h-3zM259 262h3v1h-3zM265 262h3v1h-3zM271 262h3v1h-3zM277 262h3v1h-3zM283 262h3v1h-3zM289 262h3v1h-3zM295 262h3v1h-3zM301 262h3v1h-3zM307 262h3v1h-3zM313 262h3v1h-3zM319 262h3v1h-3zM325 262h3v1h-3zM331 262h3v1h-3zM337 262h3v1h-3zM343 262h3v1h-3zM349 262h3v1h-3zM355 262h3v1h-3zM361 262h3v1h-3zM367 262h3v1h-3zM373 262h3v1h-3zM379 262h3v1h-3zM385 262h3v1h-3zM391 262h3v1h-3zM397 262h3v1h-3zM403 262h3v1h-3zM409 262h3v1h-3zM415 262h3v1h-3zM421 262h3v1h-3zM427 262h3v1h-3zM433 262h3v1h-3zM439 262h3v1h-3zM445 262h3v1h-3zM451 262h3v1h-3zM457 262h3v1h-3zM463 262h3v1h-3zM469 262h3v1h-3zM475 262h3v1h-3zM481 262h3v1h-3zM487 262h3v1h-3zM493 262h3v1h-3zM499 262h3v1h-3zM505 262h3v1h-3zM511 262h3v1h-3zM517 262h3v1h-3zM523 262h3v1h-3zM529 262h3v1h-3zM535 262h3v1h-3zM541 262h3v1h-3zM547 262h3v1h-3zM553 262h3v1h-3zM559 262h3v1h-3zM565 262h3v1h-3zM571 262h3v1h-3zM577 262h3v1h-3zM583 262h3v1h-3zM589 262h3v1h-3zM595 262h3v1h-3zM601 262h3v1h-3zM607 262h3v1h-3zM613 262h3v1h-3zM619 262h3v1h-3zM625 262h3v1h-3zM631 262h3v1h-3zM637 262h3v1h-3zM643 262h3v1h-3zM649 262h3v1h-3zM655 262h3v1h-3zM661 262h3v1h-3zM667 262h3v1h-3zM673 262h3v1h-3zM679 262h3v1h-3zM685 262h3v1h-3zM691 262h3v1h-3zM697 262h3v1h-3zM703 262h3v1h-3zM709 262h3v1h-3zM715 262h3v1h-3zM721 262h3v1h-3zM727 262h3v1h-3zM733 262h3v1h-3zM739 262h3v1h-3zM745 262h3v1h-3zM751 262h3v1h-3zM757 262h3v1h-3zM763 262h3v1h-3zM769 262h3v1h-3zM775 262h3v1h-3zM781 262h3v1h-3zM787 262h3v1h-3zM793 262h3v1h-3zM799 262h3v1h-3zM805 262h3v1h-3zM811 262h3v1h-3zM817 262h3v1h-3zM823 262h3v1h-3zM829 262h3v1h-3zM835 262h3v1h-3zM841 262h3v1h-3zM847 262h3v1h-3zM853 262h3v1h-3zM859 262h3v1h-3zM865 262h3v1h-3zM871 262h3v1h-3zM877 262h3v1h-3zM883 262h3v1h-3zM889 262h3v1h-3zM895 262h3v1h-3zM901 262h3v1h-3zM907 262h3v1h-3zM913 262h3v1h-3zM919 262h3v1h-3zM925 262h3v1h-3zM931 262h3v1h-3zM937 262h3v1h-3zM943 262h3v1h-3zM949 262h3v1h-3zM955 262h3v1h-3zM961 262h3v1h-3zM967 262h3v1h-3zM973 262h3v1h-3zM979 262h3v1h-3zM985 262h3v1h-3zM991 262h3v1h-3zM997 262h3v1h-3zM1003 262h3v1h-3zM1009 262h3v1h-3zM1015 262h3v1h-3zM1021 262h3v1h-3zM1027 262h3v1h-3zM1033 262h3v1h-3zM1039 262h3v1h-3zM1045 262h3v1h-3zM1051 262h3v1h-3zM1057 262h3v1h-3zM1063 262h3v1h-3zM1069 262h3v1h-3zM1075 262h3v1h-3zM1081 262h3v1h-3zM1087 262h3v1h-3zM1093 262h3v1h-3zM1099 262h3v1h-3zM1105 262h3v1h-3zM1111 262h3v1h-3zM1117 262h3v1h-3zM1123 262h3v1h-3zM1129 262h3v1h-3zM1135 262h3v1h-3zM1141 262h3v1h-3zM1147 262h3v1h-3zM1153 262h3v1h-3zM1159 262h3v1h-3zM1165 262h3v1h-3zM1171 262h3v1h-3zM1177 262h3v1h-3zM1183 262h3v1h-3zM1189 262h3v1h-3zM1195 262h3v1h-3zM1201 262h3v1h-3zM1207 262h3v1h-3zM1213 262h3v1h-3zM1219 262h3v1h-3zM1225 262h3v1h-3zM1231 262h3v1h-3zM1237 262h3v1h-3zM1243 262h3v1h-3zM1249 262h3v1h-3zM1255 262h3v1h-3zM1261 262h3v1h-3zM1267 262h3v1h-3zM1273 262h3v1h-3zM1279 262h3v1h-3zM1285 262h3v1h-3zM1291 262h3v1h-3zM1297 262h3v1h-3zM1303 262h3v1h-3zM1309 262h3v1h-3zM1315 262h3v1h-3zM1321 262h3v1h-3zM1327 262h3v1h-3zM1333 262h3v1h-3zM1339 262h3v1h-3zM1345 262h3v1h-3zM1351 262h3v1h-3zM1357 262h3v1h-3zM1363 262h3v1h-3zM1369 262h3v1h-3zM1375 262h3v1h-3zM1381 262h3v1h-3zM1387 262h3v1h-3zM1393 262h3v1h-3zM1399 262h3v1h-3zM1405 262h3v1h-3zM1411 262h3v1h-3zM1417 262h3v1h-3zM1423 262h3v1h-3zM1429 262h3v1h-3zM1435 262h3v1h-3zM1441 262h3v1h-3zM1447 262h3v1h-3zM1453 262h3v1h-3zM1459 262h3v1h-3zM1465 262h3v1h-3zM1471 262h3v1h-3zM1477 262h3v1h-3zM1483 262h3v1h-3zM1489 262h3v1h-3zM1495 262h3v1h-3zM49 323h3v1h-3zM55 323h3v1h-3zM61 323h3v1h-3zM67 323h3v1h-3zM73 323h3v1h-3zM79 323h3v1h-3zM85 323h3v1h-3zM91 323h3v1h-3zM97 323h3v1h-3zM103 323h3v1h-3zM109 323h3v1h-3zM115 323h3v1h-3zM121 323h3v1h-3zM127 323h3v1h-3zM133 323h3v1h-3zM139 323h3v1h-3zM145 323h3v1h-3zM151 323h3v1h-3zM157 323h3v1h-3zM163 323h3v1h-3zM169 323h3v1h-3zM175 323h3v1h-3zM181 323h3v1h-3zM187 323h3v1h-3zM193 323h3v1h-3zM199 323h3v1h-3zM205 323h3v1h-3zM211 323h3v1h-3zM217 323h3v1h-3zM223 323h3v1h-3zM229 323h3v1h-3zM235 323h3v1h-3zM241 323h3v1h-3zM247 323h3v1h-3zM253 323h3v1h-3zM259 323h3v1h-3zM265 323h3v1h-3zM271 323h3v1h-3zM277 323h3v1h-3zM283 323h3v1h-3zM289 323h3v1h-3zM295 323h3v1h-3zM301 323h3v1h-3zM307 323h3v1h-3zM313 323h3v1h-3zM319 323h3v1h-3zM325 323h3v1h-3zM331 323h3v1h-3zM337 323h3v1h-3zM343 323h3v1h-3zM349 323h3v1h-3zM355 323h3v1h-3zM361 323h3v1h-3zM367 323h3v1h-3zM373 323h3v1h-3zM379 323h3v1h-3zM385 323h3v1h-3zM391 323h3v1h-3zM397 323h3v1h-3zM403 323h3v1h-3zM409 323h3v1h-3zM415 323h3v1h-3zM421 323h3v1h-3zM427 323h3v1h-3zM433 323h3v1h-3zM439 323h3v1h-3zM445 323h3v1h-3zM451 323h3v1h-3zM457 323h3v1h-3zM463 323h3v1h-3zM469 323h3v1h-3zM475 323h3v1h-3zM481 323h3v1h-3zM487 323h3v1h-3zM493 323h3v1h-3zM499 323h3v1h-3zM505 323h3v1h-3zM511 323h3v1h-3zM517 323h3v1h-3zM523 323h3v1h-3zM529 323h3v1h-3zM535 323h3v1h-3zM541 323h3v1h-3zM547 323h3v1h-3zM553 323h3v1h-3zM559 323h3v1h-3zM565 323h3v1h-3zM571 323h3v1h-3zM577 323h3v1h-3zM583 323h3v1h-3zM589 323h3v1h-3zM595 323h3v1h-3zM601 323h3v1h-3zM607 323h3v1h-3zM613 323h3v1h-3zM619 323h3v1h-3zM625 323h3v1h-3zM631 323h3v1h-3zM637 323h3v1h-3zM643 323h3v1h-3zM649 323h3v1h-3zM655 323h3v1h-3zM661 323h3v1h-3zM667 323h3v1h-3zM673 323h3v1h-3zM679 323h3v1h-3zM685 323h3v1h-3zM691 323h3v1h-3zM697 323h3v1h-3zM703 323h3v1h-3zM709 323h3v1h-3zM715 323h3v1h-3zM721 323h3v1h-3zM727 323h3v1h-3zM733 323h3v1h-3zM739 323h3v1h-3zM745 323h3v1h-3zM751 323h3v1h-3zM757 323h3v1h-3zM763 323h3v1h-3zM769 323h3v1h-3zM775 323h3v1h-3zM781 323h3v1h-3zM787 323h3v1h-3zM793 323h3v1h-3zM799 323h3v1h-3zM805 323h3v1h-3zM811 323h3v1h-3zM817 323h3v1h-3zM823 323h3v1h-3zM829 323h3v1h-3zM835 323h3v1h-3zM841 323h3v1h-3zM847 323h3v1h-3zM853 323h3v1h-3zM859 323h3v1h-3zM865 323h3v1h-3zM871 323h3v1h-3zM877 323h3v1h-3zM883 323h3v1h-3zM889 323h3v1h-3zM895 323h3v1h-3zM901 323h3v1h-3zM907 323h3v1h-3zM913 323h3v1h-3zM919 323h3v1h-3zM925 323h3v1h-3zM931 323h3v1h-3zM937 323h3v1h-3zM943 323h3v1h-3zM949 323h3v1h-3zM955 323h3v1h-3zM961 323h3v1h-3zM967 323h3v1h-3zM973 323h3v1h-3zM979 323h3v1h-3zM985 323h3v1h-3zM991 323h3v1h-3zM997 323h3v1h-3zM1003 323h3v1h-3zM1009 323h3v1h-3zM1015 323h3v1h-3zM1021 323h3v1h-3zM1027 323h3v1h-3zM1033 323h3v1h-3zM1039 323h3v1h-3zM1045 323h3v1h-3zM1051 323h3v1h-3zM1057 323h3v1h-3zM1063 323h3v1h-3zM1069 323h3v1h-3zM1075 323h3v1h-3zM1081 323h3v1h-3zM1087 323h3v1h-3zM1093 323h3v1h-3zM1099 323h3v1h-3zM1105 323h3v1h-3zM1111 323h3v1h-3zM1117 323h3v1h-3zM1123 323h3v1h-3zM1129 323h3v1h-3zM1135 323h3v1h-3zM1141 323h3v1h-3zM1147 323h3v1h-3zM1153 323h3v1h-3zM1159 323h3v1h-3zM1165 323h3v1h-3zM1171 323h3v1h-3zM1177 323h3v1h-3zM1183 323h3v1h-3zM1189 323h3v1h-3zM1195 323h3v1h-3zM1201 323h3v1h-3zM1207 323h3v1h-3zM1213 323h3v1h-3zM1219 323h3v1h-3zM1225 323h3v1h-3zM1231 323h3v1h-3zM1237 323h3v1h-3zM1243 323h3v1h-3zM1249 323h3v1h-3zM1255 323h3v1h-3zM1261 323h3v1h-3zM1267 323h3v1h-3zM1273 323h3v1h-3zM1279 323h3v1h-3zM1285 323h3v1h-3zM1291 323h3v1h-3zM1297 323h3v1h-3zM1303 323h3v1h-3zM1309 323h3v1h-3zM1315 323h3v1h-3zM1321 323h3v1h-3zM1327 323h3v1h-3zM1333 323h3v1h-3zM1339 323h3v1h-3zM1345 323h3v1h-3zM1351 323h3v1h-3zM1357 323h3v1h-3zM1363 323h3v1h-3zM1369 323h3v1h-3zM1375 323h3v1h-3zM1381 323h3v1h-3zM1387 323h3v1h-3zM1393 323h3v1h-3zM1399 323h3v1h-3zM1405 323h3v1h-3zM1411 323h3v1h-3zM1417 323h3v1h-3zM1423 323h3v1h-3zM1429 323h3v1h-3zM1435 323h3v1h-3zM1441 323h3v1h-3zM1447 323h3v1h-3zM1453 323h3v1h-3zM1459 323h3v1h-3zM1465 323h3v1h-3zM1471 323h3v1h-3zM1477 323h3v1h-3zM1483 323h3v1h-3zM1489 323h3v1h-3zM1495 323h3v1h-3zM49 384h3v1h-3zM55 384h3v1h-3zM61 384h3v1h-3zM67 384h3v1h-3zM73 384h3v1h-3zM79 384h3v1h-3zM85 384h3v1h-3zM91 384h3v1h-3zM97 384h3v1h-3zM103 384h3v1h-3zM109 384h3v1h-3zM115 384h3v1h-3zM121 384h3v1h-3zM127 384h3v1h-3zM133 384h3v1h-3zM139 384h3v1h-3zM145 384h3v1h-3zM151 384h3v1h-3zM157 384h3v1h-3zM163 384h3v1h-3zM169 384h3v1h-3zM175 384h3v1h-3zM181 384h3v1h-3zM187 384h3v1h-3zM193 384h3v1h-3zM199 384h3v1h-3zM205 384h3v1h-3zM211 384h3v1h-3zM217 384h3v1h-3zM223 384h3v1h-3zM229 384h3v1h-3zM235 384h3v1h-3zM241 384h3v1h-3zM247 384h3v1h-3zM253 384h3v1h-3zM259 384h3v1h-3zM265 384h3v1h-3zM271 384h3v1h-3zM277 384h3v1h-3zM283 384h3v1h-3zM289 384h3v1h-3zM295 384h3v1h-3zM301 384h3v1h-3zM307 384h3v1h-3zM313 384h3v1h-3zM319 384h3v1h-3zM325 384h3v1h-3zM331 384h3v1h-3zM337 384h3v1h-3zM343 384h3v1h-3zM349 384h3v1h-3zM355 384h3v1h-3zM361 384h3v1h-3zM367 384h3v1h-3zM373 384h3v1h-3zM379 384h3v1h-3zM385 384h3v1h-3zM391 384h3v1h-3zM397 384h3v1h-3zM403 384h3v1h-3zM409 384h3v1h-3zM415 384h3v1h-3zM421 384h3v1h-3zM427 384h3v1h-3zM433 384h3v1h-3zM439 384h3v1h-3zM445 384h3v1h-3zM451 384h3v1h-3zM457 384h3v1h-3zM463 384h3v1h-3zM469 384h3v1h-3zM475 384h3v1h-3zM481 384h3v1h-3zM487 384h3v1h-3zM493 384h3v1h-3zM499 384h3v1h-3zM505 384h3v1h-3zM511 384h3v1h-3zM517 384h3v1h-3zM523 384h3v1h-3zM529 384h3v1h-3zM535 384h3v1h-3zM541 384h3v1h-3zM547 384h3v1h-3zM553 384h3v1h-3zM559 384h3v1h-3zM565 384h3v1h-3zM571 384h3v1h-3zM577 384h3v1h-3zM583 384h3v1h-3zM589 384h3v1h-3zM595 384h3v1h-3zM601 384h3v1h-3zM607 384h3v1h-3zM613 384h3v1h-3zM619 384h3v1h-3zM625 384h3v1h-3zM631 384h3v1h-3zM637 384h3v1h-3zM643 384h3v1h-3zM649 384h3v1h-3zM655 384h3v1h-3zM661 384h3v1h-3zM667 384h3v1h-3zM673 384h3v1h-3zM679 384h3v1h-3zM685 384h3v1h-3zM691 384h3v1h-3zM697 384h3v1h-3zM703 384h3v1h-3zM709 384h3v1h-3zM715 384h3v1h-3zM721 384h3v1h-3zM727 384h3v1h-3zM733 384h3v1h-3zM739 384h3v1h-3zM745 384h3v1h-3zM751 384h3v1h-3zM757 384h3v1h-3zM763 384h3v1h-3zM769 384h3v1h-3zM775 384h3v1h-3zM781 384h3v1h-3zM787 384h3v1h-3zM793 384h3v1h-3zM799 384h3v1h-3zM805 384h3v1h-3zM811 384h3v1h-3zM817 384h3v1h-3zM823 384h3v1h-3zM829 384h3v1h-3zM835 384h3v1h-3zM841 384h3v1h-3zM847 384h3v1h-3zM853 384h3v1h-3zM859 384h3v1h-3zM865 384h3v1h-3zM871 384h3v1h-3zM877 384h3v1h-3zM883 384h3v1h-3zM889 384h3v1h-3zM895 384h3v1h-3zM901 384h3v1h-3zM907 384h3v1h-3zM913 384h3v1h-3zM919 384h3v1h-3zM925 384h3v1h-3zM931 384h3v1h-3zM937 384h3v1h-3zM943 384h3v1h-3zM949 384h3v1h-3zM955 384h3v1h-3zM961 384h3v1h-3zM967 384h3v1h-3zM973 384h3v1h-3zM979 384h3v1h-3zM985 384h3v1h-3zM991 384h3v1h-3zM997 384h3v1h-3zM1003 384h3v1h-3zM1009 384h3v1h-3zM1015 384h3v1h-3zM1021 384h3v1h-3zM1027 384h3v1h-3zM1033 384h3v1h-3zM1039 384h3v1h-3zM1045 384h3v1h-3zM1051 384h3v1h-3zM1057 384h3v1h-3zM1063 384h3v1h-3zM1069 384h3v1h-3zM1075 384h3v1h-3zM1081 384h3v1h-3zM1087 384h3v1h-3zM1093 384h3v1h-3zM1099 384h3v1h-3zM1105 384h3v1h-3zM1111 384h3v1h-3zM1117 384h3v1h-3zM1123 384h3v1h-3zM1129 384h3v1h-3zM1135 384h3v1h-3zM1141 384h3v1h-3zM1147 384h3v1h-3zM1153 384h3v1h-3zM1159 384h3v1h-3zM1165 384h3v1h-3zM1171 384h3v1h-3zM1177 384h3v1h-3zM1183 384h3v1h-3zM1189 384h3v1h-3zM1195 384h3v1h-3zM1201 384h3v1h-3zM1207 384h3v1h-3zM1213 384h3v1h-3zM1219 384h3v1h-3zM1225 384h3v1h-3zM1231 384h3v1h-3zM1237 384h3v1h-3zM1243 384h3v1h-3zM1249 384h3v1h-3zM1255 384h3v1h-3zM1261 384h3v1h-3zM1267 384h3v1h-3zM1273 384h3v1h-3zM1279 384h3v1h-3zM1285 384h3v1h-3zM1291 384h3v1h-3zM1297 384h3v1h-3zM1303 384h3v1h-3zM1309 384h3v1h-3zM1315 384h3v1h-3zM1321 384h3v1h-3zM1327 384h3v1h-3zM1333 384h3v1h-3zM1339 384h3v1h-3zM1345 384h3v1h-3zM1351 384h3v1h-3zM1357 384h3v1h-3zM1363 384h3v1h-3zM1369 384h3v1h-3zM1375 384h3v1h-3zM1381 384h3v1h-3zM1387 384h3v1h-3zM1393 384h3v1h-3zM1399 384h3v1h-3zM1405 384h3v1h-3zM1411 384h3v1h-3zM1417 384h3v1h-3zM1423 384h3v1h-3zM1429 384h3v1h-3zM1435 384h3v1h-3zM1441 384h3v1h-3zM1447 384h3v1h-3zM1453 384h3v1h-3zM1459 384h3v1h-3zM1465 384h3v1h-3zM1471 384h3v1h-3zM1477 384h3v1h-3zM1483 384h3v1h-3zM1489 384h3v1h-3zM1495 384h3v1h-3zM49 445h3v1h-3zM55 445h3v1h-3zM61 445h3v1h-3zM67 445h3v1h-3zM73 445h3v1h-3zM79 445h3v1h-3zM85 445h3v1h-3zM91 445h3v1h-3zM97 445h3v1h-3zM103 445h3v1h-3zM109 445h3v1h-3zM115 445h3v1h-3zM121 445h3v1h-3zM127 445h3v1h-3zM133 445h3v1h-3zM139 445h3v1h-3zM145 445h3v1h-3zM151 445h3v1h-3zM157 445h3v1h-3zM163 445h3v1h-3zM169 445h3v1h-3zM175 445h3v1h-3zM181 445h3v1h-3zM187 445h3v1h-3zM193 445h3v1h-3zM199 445h3v1h-3zM205 445h3v1h-3zM211 445h3v1h-3zM217 445h3v1h-3zM223 445h3v1h-3zM229 445h3v1h-3zM235 445h3v1h-3zM241 445h3v1h-3zM247 445h3v1h-3zM253 445h3v1h-3zM259 445h3v1h-3zM265 445h3v1h-3zM271 445h3v1h-3zM277 445h3v1h-3zM283 445h3v1h-3zM289 445h3v1h-3zM295 445h3v1h-3zM301 445h3v1h-3zM307 445h3v1h-3zM313 445h3v1h-3zM319 445h3v1h-3zM325 445h3v1h-3zM331 445h3v1h-3zM337 445h3v1h-3zM343 445h3v1h-3zM349 445h3v1h-3zM355 445h3v1h-3zM361 445h3v1h-3zM367 445h3v1h-3zM373 445h3v1h-3zM379 445h3v1h-3zM385 445h3v1h-3zM391 445h3v1h-3zM397 445h3v1h-3zM403 445h3v1h-3zM409 445h3v1h-3zM415 445h3v1h-3zM421 445h3v1h-3zM427 445h3v1h-3zM433 445h3v1h-3zM439 445h3v1h-3zM445 445h3v1h-3zM451 445h3v1h-3zM457 445h3v1h-3zM463 445h3v1h-3zM469 445h3v1h-3zM475 445h3v1h-3zM481 445h3v1h-3zM487 445h3v1h-3zM493 445h3v1h-3zM499 445h3v1h-3zM505 445h3v1h-3zM511 445h3v1h-3zM517 445h3v1h-3zM523 445h3v1h-3zM529 445h3v1h-3zM535 445h3v1h-3zM541 445h3v1h-3zM547 445h3v1h-3zM553 445h3v1h-3zM559 445h3v1h-3zM565 445h3v1h-3zM571 445h3v1h-3zM577 445h3v1h-3zM583 445h3v1h-3zM589 445h3v1h-3zM595 445h3v1h-3zM601 445h3v1h-3zM607 445h3v1h-3zM613 445h3v1h-3zM619 445h3v1h-3zM625 445h3v1h-3zM631 445h3v1h-3zM637 445h3v1h-3zM643 445h3v1h-3zM649 445h3v1h-3zM655 445h3v1h-3zM661 445h3v1h-3zM667 445h3v1h-3zM673 445h3v1h-3zM679 445h3v1h-3zM685 445h3v1h-3zM691 445h3v1h-3zM697 445h3v1h-3zM703 445h3v1h-3zM709 445h3v1h-3zM715 445h3v1h-3zM721 445h3v1h-3zM727 445h3v1h-3zM733 445h3v1h-3zM739 445h3v1h-3zM745 445h3v1h-3zM751 445h3v1h-3zM757 445h3v1h-3zM763 445h3v1h-3zM769 445h3v1h-3zM775 445h3v1h-3zM781 445h3v1h-3zM787 445h3v1h-3zM793 445h3v1h-3zM799 445h3v1h-3zM805 445h3v1h-3zM811 445h3v1h-3zM817 445h3v1h-3zM823 445h3v1h-3zM829 445h3v1h-3zM835 445h3v1h-3zM841 445h3v1h-3zM847 445h3v1h-3zM853 445h3v1h-3zM859 445h3v1h-3zM865 445h3v1h-3zM871 445h3v1h-3zM877 445h3v1h-3zM883 445h3v1h-3zM889 445h3v1h-3zM895 445h3v1h-3zM901 445h3v1h-3zM907 445h3v1h-3zM913 445h3v1h-3zM919 445h3v1h-3zM925 445h3v1h-3zM931 445h3v1h-3zM937 445h3v1h-3zM943 445h3v1h-3zM949 445h3v1h-3zM955 445h3v1h-3zM961 445h3v1h-3zM967 445h3v1h-3zM973 445h3v1h-3zM979 445h3v1h-3zM985 445h3v1h-3zM991 445h3v1h-3zM997 445h3v1h-3zM1003 445h3v1h-3zM1009 445h3v1h-3zM1015 445h3v1h-3zM1021 445h3v1h-3zM1027 445h3v1h-3zM1033 445h3v1h-3zM1039 445h3v1h-3zM1045 445h3v1h-3zM1051 445h3v1h-3zM1057 445h3v1h-3zM1063 445h3v1h-3zM1069 445h3v1h-3zM1075 445h3v1h-3zM1081 445h3v1h-3zM1087 445h3v1h-3zM1093 445h3v1h-3zM1099 445h3v1h-3zM1105 445h3v1h-3zM1111 445h3v1h-3zM1117 445h3v1h-3zM1123 445h3v1h-3zM1129 445h3v1h-3zM1135 445h3v1h-3zM1141 445h3v1h-3zM1147 445h3v1h-3zM1153 445h3v1h-3zM1159 445h3v1h-3zM1165 445h3v1h-3zM1171 445h3v1h-3zM1177 445h3v1h-3zM1183 445h3v1h-3zM1189 445h3v1h-3zM1195 445h3v1h-3zM1201 445h3v1h-3zM1207 445h3v1h-3zM1213 445h3v1h-3zM1219 445h3v1h-3zM1225 445h3v1h-3zM1231 445h3v1h-3zM1237 445h3v1h-3zM1243 445h3v1h-3zM1249 445h3v1h-3zM1255 445h3v1h-3zM1261 445h3v1h-3zM1267 445h3v1h-3zM1273 445h3v1h-3zM1279 445h3v1h-3zM1285 445h3v1h-3zM1291 445h3v1h-3zM1297 445h3v1h-3zM1303 445h3v1h-3zM1309 445h3v1h-3zM1315 445h3v1h-3zM1321 445h3v1h-3zM1327 445h3v1h-3zM1333 445h3v1h-3zM1339 445h3v1h-3zM1345 445h3v1h-3zM1351 445h3v1h-3zM1357 445h3v1h-3zM1363 445h3v1h-3zM1369 445h3v1h-3zM1375 445h3v1h-3zM1381 445h3v1h-3zM1387 445h3v1h-3zM1393 445h3v1h-3zM1399 445h3v1h-3zM1405 445h3v1h-3zM1411 445h3v1h-3zM1417 445h3v1h-3zM1423 445h3v1h-3zM1429 445h3v1h-3zM1435 445h3v1h-3zM1441 445h3v1h-3zM1447 445h3v1h-3zM1453 445h3v1h-3zM1459 445h3v1h-3zM1465 445h3v1h-3zM1471 445h3v1h-3zM1477 445h3v1h-3zM1483 445h3v1h-3zM1489 445h3v1h-3zM1495 445h3v1h-3zM49 507h3v1h-3zM55 507h3v1h-3zM61 507h3v1h-3zM67 507h3v1h-3zM73 507h3v1h-3zM79 507h3v1h-3zM85 507h3v1h-3zM91 507h3v1h-3zM97 507h3v1h-3zM103 507h3v1h-3zM109 507h3v1h-3zM115 507h3v1h-3zM121 507h3v1h-3zM127 507h3v1h-3zM133 507h3v1h-3zM139 507h3v1h-3zM145 507h3v1h-3zM151 507h3v1h-3zM157 507h3v1h-3zM163 507h3v1h-3zM169 507h3v1h-3zM175 507h3v1h-3zM181 507h3v1h-3zM187 507h3v1h-3zM193 507h3v1h-3zM199 507h3v1h-3zM205 507h3v1h-3zM211 507h3v1h-3zM217 507h3v1h-3zM223 507h3v1h-3zM229 507h3v1h-3zM235 507h3v1h-3zM241 507h3v1h-3zM247 507h3v1h-3zM253 507h3v1h-3zM259 507h3v1h-3zM265 507h3v1h-3zM271 507h3v1h-3zM277 507h3v1h-3zM283 507h3v1h-3zM289 507h3v1h-3zM295 507h3v1h-3zM301 507h3v1h-3zM307 507h3v1h-3zM313 507h3v1h-3zM319 507h3v1h-3zM325 507h3v1h-3zM331 507h3v1h-3zM337 507h3v1h-3zM343 507h3v1h-3zM349 507h3v1h-3zM355 507h3v1h-3zM361 507h3v1h-3zM367 507h3v1h-3zM373 507h3v1h-3zM379 507h3v1h-3zM385 507h3v1h-3zM391 507h3v1h-3zM397 507h3v1h-3zM403 507h3v1h-3zM409 507h3v1h-3zM415 507h3v1h-3zM421 507h3v1h-3zM427 507h3v1h-3zM433 507h3v1h-3zM439 507h3v1h-3zM445 507h3v1h-3zM451 507h3v1h-3zM457 507h3v1h-3zM463 507h3v1h-3zM469 507h3v1h-3zM475 507h3v1h-3zM481 507h3v1h-3zM487 507h3v1h-3zM493 507h3v1h-3zM499 507h3v1h-3zM505 507h3v1h-3zM511 507h3v1h-3zM517 507h3v1h-3zM523 507h3v1h-3zM529 507h3v1h-3zM535 507h3v1h-3zM541 507h3v1h-3zM547 507h3v1h-3zM553 507h3v1h-3zM559 507h3v1h-3zM565 507h3v1h-3zM571 507h3v1h-3zM577 507h3v1h-3zM583 507h3v1h-3zM589 507h3v1h-3zM595 507h3v1h-3zM601 507h3v1h-3zM607 507h3v1h-3zM613 507h3v1h-3zM619 507h3v1h-3zM625 507h3v1h-3zM631 507h3v1h-3zM637 507h3v1h-3zM643 507h3v1h-3zM649 507h3v1h-3zM655 507h3v1h-3zM661 507h3v1h-3zM667 507h3v1h-3zM673 507h3v1h-3zM679 507h3v1h-3zM685 507h3v1h-3zM691 507h3v1h-3zM697 507h3v1h-3zM703 507h3v1h-3zM709 507h3v1h-3zM715 507h3v1h-3zM721 507h3v1h-3zM727 507h3v1h-3zM733 507h3v1h-3zM739 507h3v1h-3zM745 507h3v1h-3zM751 507h3v1h-3zM757 507h3v1h-3zM763 507h3v1h-3zM769 507h3v1h-3zM775 507h3v1h-3zM781 507h3v1h-3zM787 507h3v1h-3zM793 507h3v1h-3zM799 507h3v1h-3zM805 507h3v1h-3zM811 507h3v1h-3zM817 507h3v1h-3zM823 507h3v1h-3zM829 507h3v1h-3zM835 507h3v1h-3zM841 507h3v1h-3zM847 507h3v1h-3zM853 507h3v1h-3zM859 507h3v1h-3zM865 507h3v1h-3zM871 507h3v1h-3zM877 507h3v1h-3zM883 507h3v1h-3zM889 507h3v1h-3zM895 507h3v1h-3zM901 507h3v1h-3zM907 507h3v1h-3zM913 507h3v1h-3zM919 507h3v1h-3zM925 507h3v1h-3zM931 507h3v1h-3zM937 507h3v1h-3zM943 507h3v1h-3zM949 507h3v1h-3zM955 507h3v1h-3zM961 507h3v1h-3zM967 507h3v1h-3zM973 507h3v1h-3zM979 507h3v1h-3zM985 507h3v1h-3zM991 507h3v1h-3zM997 507h3v1h-3zM1003 507h3v1h-3zM1009 507h3v1h-3zM1015 507h3v1h-3zM1021 507h3v1h-3zM1027 507h3v1h-3zM1033 507h3v1h-3zM1039 507h3v1h-3zM1045 507h3v1h-3zM1051 507h3v1h-3zM1057 507h3v1h-3zM1063 507h3v1h-3zM1069 507h3v1h-3zM1075 507h3v1h-3zM1081 507h3v1h-3zM1087 507h3v1h-3zM1093 507h3v1h-3zM1099 507h3v1h-3zM1105 507h3v1h-3zM1111 507h3v1h-3zM1117 507h3v1h-3zM1123 507h3v1h-3zM1129 507h3v1h-3zM1135 507h3v1h-3zM1141 507h3v1h-3zM1147 507h3v1h-3zM1153 507h3v1h-3zM1159 507h3v1h-3zM1165 507h3v1h-3zM1171 507h3v1h-3zM1177 507h3v1h-3zM1183 507h3v1h-3zM1189 507h3v1h-3zM1195 507h3v1h-3zM1201 507h3v1h-3zM1207 507h3v1h-3zM1213 507h3v1h-3zM1219 507h3v1h-3zM1225 507h3v1h-3zM1231 507h3v1h-3zM1237 507h3v1h-3zM1243 507h3v1h-3zM1249 507h3v1h-3zM1255 507h3v1h-3zM1261 507h3v1h-3zM1267 507h3v1h-3zM1273 507h3v1h-3zM1279 507h3v1h-3zM1285 507h3v1h-3zM1291 507h3v1h-3zM1297 507h3v1h-3zM1303 507h3v1h-3zM1309 507h3v1h-3zM1315 507h3v1h-3zM1321 507h3v1h-3zM1327 507h3v1h-3zM1333 507h3v1h-3zM1339 507h3v1h-3zM1345 507h3v1h-3zM1351 507h3v1h-3zM1357 507h3v1h-3zM1363 507h3v1h-3zM1369 507h3v1h-3zM1375 507h3v1h-3zM1381 507h3v1h-3zM1387 507h3v1h-3zM1393 507h3v1h-3zM1399 507h3v1h-3zM1405 507h3v1h-3zM1411 507h3v1h-3zM1417 507h3v1h-3zM1423 507h3v1h-3zM1429 507h3v1h-3zM1435 507h3v1h-3zM1441 507h3v1h-3zM1447 507h3v1h-3zM1453 507h3v1h-3zM1459 507h3v1h-3zM1465 507h3v1h-3zM1471 507h3v1h-3zM1477 507h3v1h-3zM1483 507h3v1h-3zM1489 507h3v1h-3zM1495 507h3v1h-3zM49 568h3v1h-3zM55 568h3v1h-3zM61 568h3v1h-3zM67 568h3v1h-3zM73 568h3v1h-3zM79 568h3v1h-3zM85 568h3v1h-3zM91 568h3v1h-3zM97 568h3v1h-3zM103 568h3v1h-3zM109 568h3v1h-3zM115 568h3v1h-3zM121 568h3v1h-3zM127 568h3v1h-3zM133 568h3v1h-3zM139 568h3v1h-3zM145 568h3v1h-3zM151 568h3v1h-3zM157 568h3v1h-3zM163 568h3v1h-3zM169 568h3v1h-3zM175 568h3v1h-3zM181 568h3v1h-3zM187 568h3v1h-3zM193 568h3v1h-3zM199 568h3v1h-3zM205 568h3v1h-3zM211 568h3v1h-3zM217 568h3v1h-3zM223 568h3v1h-3zM229 568h3v1h-3zM235 568h3v1h-3zM241 568h3v1h-3zM247 568h3v1h-3zM253 568h3v1h-3zM259 568h3v1h-3zM265 568h3v1h-3zM271 568h3v1h-3zM277 568h3v1h-3zM283 568h3v1h-3zM289 568h3v1h-3zM295 568h3v1h-3zM301 568h3v1h-3zM307 568h3v1h-3zM313 568h3v1h-3zM319 568h3v1h-3zM325 568h3v1h-3zM331 568h3v1h-3zM337 568h3v1h-3zM343 568h3v1h-3zM349 568h3v1h-3zM355 568h3v1h-3zM361 568h3v1h-3zM367 568h3v1h-3zM373 568h3v1h-3zM379 568h3v1h-3zM385 568h3v1h-3zM391 568h3v1h-3zM397 568h3v1h-3zM403 568h3v1h-3zM409 568h3v1h-3zM415 568h3v1h-3zM421 568h3v1h-3zM427 568h3v1h-3zM433 568h3v1h-3zM439 568h3v1h-3zM445 568h3v1h-3zM451 568h3v1h-3zM457 568h3v1h-3zM463 568h3v1h-3zM469 568h3v1h-3zM475 568h3v1h-3zM481 568h3v1h-3zM487 568h3v1h-3zM493 568h3v1h-3zM499 568h3v1h-3zM505 568h3v1h-3zM511 568h3v1h-3zM517 568h3v1h-3zM523 568h3v1h-3zM529 568h3v1h-3zM535 568h3v1h-3zM541 568h3v1h-3zM547 568h3v1h-3zM553 568h3v1h-3zM559 568h3v1h-3zM565 568h3v1h-3zM571 568h3v1h-3zM577 568h3v1h-3zM583 568h3v1h-3zM589 568h3v1h-3zM595 568h3v1h-3zM601 568h3v1h-3zM607 568h3v1h-3zM613 568h3v1h-3zM619 568h3v1h-3zM625 568h3v1h-3zM631 568h3v1h-3zM637 568h3v1h-3zM643 568h3v1h-3zM649 568h3v1h-3zM655 568h3v1h-3zM661 568h3v1h-3zM667 568h3v1h-3zM673 568h3v1h-3zM679 568h3v1h-3zM685 568h3v1h-3zM691 568h3v1h-3zM697 568h3v1h-3zM703 568h3v1h-3zM709 568h3v1h-3zM715 568h3v1h-3zM721 568h3v1h-3zM727 568h3v1h-3zM733 568h3v1h-3zM739 568h3v1h-3zM745 568h3v1h-3zM751 568h3v1h-3zM757 568h3v1h-3zM763 568h3v1h-3zM769 568h3v1h-3zM775 568h3v1h-3zM781 568h3v1h-3zM787 568h3v1h-3zM793 568h3v1h-3zM799 568h3v1h-3zM805 568h3v1h-3zM811 568h3v1h-3zM817 568h3v1h-3zM823 568h3v1h-3zM829 568h3v1h-3zM835 568h3v1h-3zM841 568h3v1h-3zM847 568h3v1h-3zM853 568h3v1h-3zM859 568h3v1h-3zM865 568h3v1h-3zM871 568h3v1h-3zM877 568h3v1h-3zM883 568h3v1h-3zM889 568h3v1h-3zM895 568h3v1h-3zM901 568h3v1h-3zM907 568h3v1h-3zM913 568h3v1h-3zM919 568h3v1h-3zM925 568h3v1h-3zM931 568h3v1h-3zM937 568h3v1h-3zM943 568h3v1h-3zM949 568h3v1h-3zM955 568h3v1h-3zM961 568h3v1h-3zM967 568h3v1h-3zM973 568h3v1h-3zM979 568h3v1h-3zM985 568h3v1h-3zM991 568h3v1h-3zM997 568h3v1h-3zM1003 568h3v1h-3zM1009 568h3v1h-3zM1015 568h3v1h-3zM1021 568h3v1h-3zM1027 568h3v1h-3zM1033 568h3v1h-3zM1039 568h3v1h-3zM1045 568h3v1h-3zM1051 568h3v1h-3zM1057 568h3v1h-3zM1063 568h3v1h-3zM1069 568h3v1h-3zM1075 568h3v1h-3zM1081 568h3v1h-3zM1087 568h3v1h-3zM1093 568h3v1h-3zM1099 568h3v1h-3zM1105 568h3v1h-3zM1111 568h3v1h-3zM1117 568h3v1h-3zM1123 568h3v1h-3zM1129 568h3v1h-3zM1135 568h3v1h-3zM1141 568h3v1h-3zM1147 568h3v1h-3zM1153 568h3v1h-3zM1159 568h3v1h-3zM1165 568h3v1h-3zM1171 568h3v1h-3zM1177 568h3v1h-3zM1183 568h3v1h-3zM1189 568h3v1h-3zM1195 568h3v1h-3zM1201 568h3v1h-3zM1207 568h3v1h-3zM1213 568h3v1h-3zM1219 568h3v1h-3zM1225 568h3v1h-3zM1231 568h3v1h-3zM1237 568h3v1h-3zM1243 568h3v1h-3zM1249 568h3v1h-3zM1255 568h3v1h-3zM1261 568h3v1h-3zM1267 568h3v1h-3zM1273 568h3v1h-3zM1279 568h3v1h-3zM1285 568h3v1h-3zM1291 568h3v1h-3zM1297 568h3v1h-3zM1303 568h3v1h-3zM1309 568h3v1h-3zM1315 568h3v1h-3zM1321 568h3v1h-3zM1327 568h3v1h-3zM1333 568h3v1h-3zM1339 568h3v1h-3zM1345 568h3v1h-3zM1351 568h3v1h-3zM1357 568h3v1h-3zM1363 568h3v1h-3zM1369 568h3v1h-3zM1375 568h3v1h-3zM1381 568h3v1h-3zM1387 568h3v1h-3zM1393 568h3v1h-3zM1399 568h3v1h-3zM1405 568h3v1h-3zM1411 568h3v1h-3zM1417 568h3v1h-3zM1423 568h3v1h-3zM1429 568h3v1h-3zM1435 568h3v1h-3zM1441 568h3v1h-3zM1447 568h3v1h-3zM1453 568h3v1h-3zM1459 568h3v1h-3zM1465 568h3v1h-3zM1471 568h3v1h-3zM1477 568h3v1h-3zM1483 568h3v1h-3zM1489 568h3v1h-3zM1495 568h3v1h-3z"/>
<rect x="71" y="630" width="1" height="3" fill="#a8a8a8"/><rect x="90" y="630" width="1" height="3" fill="#a8a8a8"/><rect x="107" y="630" width="1" height="3" fill="#a8a8a8"/><rect x="121" y="630" width="1" height="3" fill="#a8a8a8"/><rect x="134" y="630" width="1" height="7" fill="#a8a8a8"/><rect x="220" y="630" width="1" height="3" fill="#a8a8a8"/><rect x="269" y="630" width="1" height="3" fill="#a8a8a8"/><rect x="305" y="630" width="1" height="3" fill="#a8a8a8"/><rect x="332" y="630" width="1" height="3" fill="#a8a8a8"/><rect x="355" y="630" width="1" height="3" fill="#a8a8a8"/><rect x="374" y="630" width="1" height="3" fill="#a8a8a8"/><rect x="390" y="630" width="1" height="3" fill="#a8a8a8"/><rect x="405" y="630" width="1" height="3" fill="#a8a8a8"/><rect x="418" y="630" width="1" height="7" fill="#a8a8a8"/><rect x="503" y="630" width="1" height="3" fill="#a8a8a8"/><rect x="553" y="630" width="1" height="3" fill="#a8a8a8"/><rect x="588" y="630" width="1" height="3" fill="#a8a8a8"/><rect x="616" y="630" width="1" height="3" fill="#a8a8a8"/><rect x="638" y="630" width="1" height="3" fill="#a8a8a8"/><rect x="657" y="630" width="1" height="3" fill="#a8a8a8"/><rect x="674" y="630" width="1" height="3" fill="#a8a8a8"/><rect x="688" y="630" width="1" height="3" fill="#a8a8a8"/><rect x="701" y="630" width="1" height="7" fill="#a8a8a8"/><rect x="786" y="630" width="1" height="3" fill="#a8a8a8"/><rect x="836" y="630" width="1" height="3" fill="#a8a8a8"/><rect x="872" y="630" width="1" height="3" fill="#a8a8a8"/><rect x="899" y="630" width="1" height="3" fill="#a8a8a8"/><rect x="921" y="630" width="1" height="3" fill="#a8a8a8"/><rect x="940" y="630" width="1" height="3" fill="#a8a8a8"/><rect x="957" y="630" width="1" height="3" fill="#a8a8a8"/><rect x="971" y="630" width="1" height="3" fill="#a8a8a8"/><rect x="984" y="630" width="1" height="7" fill="#a8a8a8"/><rect x="1070" y="630" width="1" height="3" fill="#a8a8a8"/><rect x="1120" y="630" width="1" height="3" fill="#a8a8a8"/><rect x="1155" y="630" width="1" height="3" fill="#a8a8a8"/><rect x="1182" y="630" width="1" height="3" fill="#a8a8a8"/><rect x="1205" y="630" width="1" height="3" fill="#a8a8a8"/><rect x="1224" y="630" width="1" height="3" fill="#a8a8a8"/><rect x="1240" y="630" width="1" height="3" fill="#a8a8a8"/><rect x="1255" y="630" width="1" height="3" fill="#a8a8a8"/><rect x="1268" y="630" width="1" height="7" fill="#a8a8a8"/><rect x="1353" y="630" width="1" height="3" fill="#a8a8a8"/><rect x="1403" y="630" width="1" height="3" fill="#a8a8a8"/><rect x="1438" y="630" width="1" height="3" fill="#a8a8a8"/><rect x="1466" y="630" width="1" height="3" fill="#a8a8a8"/><rect x="1488" y="630" width="1" height="3" fill="#a8a8a8"/><rect x="42" y="17" width="7" height="1" fill="#a8a8a8"/><rect x="42" y="78" width="7" height="1" fill="#a8a8a8"/><rect x="42" y="139" width="7" height="1" fill="#a8a8a8"/><rect x="42" y="201" width="7" height="1" fill="#a8a8a8"/><rect x="42" y="262" width="7" height="1" fill="#a8a8a8"/><rect x="42" y="323" width="7" height="1" fill="#a8a8a8"/><rect x="42" y="384" width="7" height="1" fill="#a8a8a8"/><rect x="42" y="445" width="7" height="1" fill="#a8a8a8"/><rect x="42" y="507" width="7" height="1" fill="#a8a8a8"/><rect x="42" y="568" width="7" height="1" fill="#a8a8a8"/><rect x="42" y="629" width="7" height="1" fill="#a8a8a8"/>
<path fill="#a8a8a8" d="M49 17h1451v1h-1451z M49 629h1451v1h-1451z M49 17h1v613h-1z M1499 17h1v613h-1z"/>
<path fill="#00ff00" d="M50 425h1v1h-1zM51 426h1v1h-1zM52 426h1v1h-1zM53 426h1v1h-1zM54 426h1v1h-1zM55 426h1v1h-1zM56 426h1v1h-1zM57 426h1v1h-1zM58 426h1v1h-1zM59 426h1v1h-1zM60 426h1v1h-1zM61 426h1v1h-1zM62 426h1v1h-1zM63 426h1v1h-1zM64 426h1v1h-1zM65 427h1v1h-1zM66 427h1v1h-1zM67 427h1v1h-1zM68 427h1v1h-1zM69 427h1v1h-1zM70 427h1v1h-1zM71 427h1v1h-1zM72 427h1v1h-1zM73 427h1v1h-1zM74 427h1v1h-1zM75 428h1v1h-1zM76 428h1v1h-1zM77 428h1v1h-1zM78 428h1v1h-1zM79 428h1v1h-1zM80 428h1v1h-1zM81 428h1v1h-1zM82 428h1v1h-1zM83 428h1v1h-1zM84 429h1v1h-1zM85 429h1v1h-1zM86 429h1v1h-1zM87 429h1v1h-1zM88 429h1v1h-1zM89 429h1v1h-1zM90 429h1v1h-1zM91 429h1v1h-1zM92 429h1v1h-1zM93 430h1v1h-1zM94 430h1v1h-1zM95 430h1v1h-1zM96 430h1v1h-1zM97 430h1v1h-1zM98 430h1v1h-1zM99 431h1v1h-1zM100 431h1v1h-1zM101 431h1v1h-1zM102 431h1v1h-1zM103 431h1v1h-1zM104 431h1v1h-1zM105 431h1v1h-1zM106 431h1v1h-1zM107 432h1v1h-1zM108 432h1v1h-1zM109 432h1v1h-1zM110 432h1v1h-1zM111 432h1v1h-1zM112 433h1v1h-1zM113 433h1v1h-1zM114 433h1v1h-1zM115 433h1v1h-1zM116 434h1v1h-1zM117 434h1v1h-1zM118 434h1v1h-1zM119 434h1v1h-1zM120 434h1v1h-1zM121 435h1v1h-1zM122 435h1v1h-1zM123 435h1v1h-1zM124 435h1v1h-1zM125 435h1v1h-1zM126 436h1v1h-1zM127 436h1v1h-1zM128 436h1v1h-1zM129 437h1v1h-1zM130 437h1v1h-1zM131 437h1v1h-1zM132 438h1v1h-1zM133 438h1v1h-1zM134 438h1v1h-1zM135 438h1v1h-1zM136 438h1v1h-1zM137 438h1v1h-1zM138 438h1v1h-1zM139 438h1v1h-1zM140 438h1v1h-1zM141 439h1v1h-1zM142 439h1v1h-1zM143 439h1v1h-1zM144 439h1v1h-1zM145 439h1v1h-1zM146 439h1v1h-1zM147 439h1v1h-1zM148 439h1v1h-1zM149 439h1v1h-1zM150 440h1v1h-1zM151 440h1v1h-1zM152 440h1v1h-1zM153 440h1v1h-1zM154 440h1v1h-1zM155 440h1v1h-1zM156 440h1v1h-1zM157 440h1v1h-1zM158 440h1v1h-1zM159 441h1v1h-1zM160 441h1v1h-1zM161 441h1v1h-1zM162 441h1v1h-1zM163 441h1v1h-1zM164 441h1v1h-1zM165 441h1v1h-1zM166 441h1v1h-1zM167 442h1v1h-1zM168 442h1v1h-1zM169 442h1v1h-1zM170 442h1v1h-1zM171 442h1v1h-1zM172 443h1v1h-1zM173 443h1v1h-1zM174 443h1v1h-1zM175 443h1v1h-1zM176 443h1v1h-1zM177 443h1v1h-1zM178 444h1v1h-1zM179 444h1v1h-1zM180 444h1v1h-1zM181 444h1v1h-1zM182 444h1v1h-1zM183 444h1v1h-1zM184 444h1v1h-1zM185 445h1v1h-1zM186 445h1v1h-1zM187 445h1v1h-1zM188 445h1v1h-1zM189 445h1v1h-1zM190 445h1v1h-1zM191 445h1v1h-1zM192 445h1v1h-1zM193 445h1v1h-1zM194 445h1v1h-1zM195 446h1v1h-1zM196 446h1v1h-1zM197 446h1v1h-1zM198 446h1v1h-1zM199 446h1v1h-1zM200 446h1v1h-1zM201 446h1v1h-1zM202 446h1v1h-1zM203 447h1v1h-1zM204 447h1v1h-1zM205 447h1v1h-1zM206 447h1v1h-1zM207 447h1v1h-1zM208 447h1v1h-1zM209 447h1v1h-1zM210 447h1v1h-1zM211 448h1v1h-1zM212 448h1v1h-1zM213 448h1v1h-1zM214 448h1v1h-1zM215 448h1v1h-1zM216 448h1v1h-1zM217 448h1v1h-1zM218 449h1v1h-1zM219 449h1v1h-1zM220 449h1v1h-1zM221 449h1v1h-1zM222 449h1v1h-1zM223 449h1v1h-1zM224 450h1v1h-1zM225 450h1v1h-1zM226 450h1v1h-1zM227 450h1v1h-1zM228 450h1v1h-1zM229 450h1v1h-1zM230 450h1v1h-1zM231 451h1v1h-1zM232 451h1v1h-1zM233 451h1v1h-1zM234 451h1v1h-1zM235 451h1v1h-1zM236 451h1v1h-1zM237 452h1v1h-1zM238 452h1v1h-1zM239 452h1v1h-1zM240 452h1v1h-1zM241 452h1v1h-1zM242 452h1v1h-1zM243 453h1v1h-1zM244 453h1v1h-1zM245 453h1v1h-1zM246 453h1v1h-1zM247 454h1v1h-1zM248 454h1v1h-1zM249 454h1v1h-1zM250 454h1v1h-1zM251 454h1v1h-1zM252 454h1v1h-1zM253 454h1v1h-1zM254 454h1v1h-1zM255 454h1v1h-1zM256 455h1v1h-1zM257 455h1v1h-1zM258 455h1v1h-1zM259 455h1v1h-1zM260 455h1v1h-1zM261 455h1v1h-1zM262 455h1v1h-1zM263 455h1v1h-1zM264 456h1v1h-1zM265 456h1v1h-1zM266 456h1v1h-1zM267 456h1v1h-1zM268 456h1v1h-1zM269 456h1v1h-1zM270 456h1v1h-1zM271 457h1v1h-1zM272 457h1v1h-1zM273 457h1v1h-1zM274 457h1v1h-1zM275 457h1v1h-1zM276 457h1v1h-1zM277 457h1v1h-1zM278 458h1v1h-1zM279 458h1v1h-1zM280 458h1v1h-1zM281 458h1v1h-1zM282 458h1v1h-1zM283 458h1v1h-1zM284 459h1v1h-1zM285 459h1v1h-1zM286 459h1v1h-1zM287 459h1v1h-1zM288 460h1v1h-1zM289 460h1v1h-1zM290 460h1v1h-1zM291 460h1v1h-1zM292 460h1v1h-1zM293 461h1v1h-1zM294 461h1v1h-1zM295 461h1v1h-1zM296 461h1v1h-1zM297 462h1v1h-1zM298 462h1v1h-1zM299 462h1v1h-1zM300 462h1v1h-1zM301 463h1v1h-1zM302 463h1v1h-1zM303 463h1v1h-1zM304 463h1v1h-1zM305 464h1v1h-1zM306 464h1v1h-1zM307 464h1v1h-1zM308 464h1v1h-1zM309 464h1v1h-1zM310 464h1v1h-1zM311 464h1v1h-1zM312 464h1v1h-1zM313 464h1v1h-1zM314 464h1v1h-1zM315 464h1v1h-1zM316 464h1v1h-1zM317 464h1v1h-1zM318 464h1v1h-1zM319 464h1v1h-1zM320 464h1v1h-1zM321 465h1v1h-1zM322 465h1v1h-1zM323 465h1v1h-1zM324 465h1v1h-1zM325 465h1v1h-1zM326 466h1v1h-1zM327 466h1v1h-1zM328 466h1v1h-1zM329 466h1v1h-1zM330 467h1v1h-1zM331 467h1v1h-1zM332 467h1v1h-1zM333 468h1v1h-1zM334 468h1v1h-1zM335 468h1v1h-1zM336 468h1v1h-1zM337 468h1v1h-1zM338 468h1v1h-1zM339 468h1v1h-1zM340 468h1v1h-1zM341 468h1v1h-1zM342 468h1v1h-1zM343 468h1v1h-1zM344 468h1v1h-1zM345 468h1v1h-1zM346 468h1v1h-1zM347 468h1v1h-1zM348 468h1v1h-1zM349 468h1v1h-1zM350 468h1v1h-1zM351 468h1v1h-1zM352 468h1v1h-1zM353 469h1v1h-1zM354 469h1v1h-1zM355 469h1v1h-1zM356 469h1v1h-1zM357 469h1v1h-1zM358 469h1v1h-1zM359 470h1v1h-1zM360 470h1v1h-1zM361 470h1v1h-1zM362 470h1v1h-1zM363 470h1v1h-1zM364 470h1v1h-1zM365 471h1v1h-1zM366 471h1v1h-1zM367 471h1v1h-1zM368 471h1v1h-1zM369 471h1v1h-1zM370 471h1v1h-1zM371 471h1v1h-1zM372 471h1v1h-1zM373 471h1v1h-1zM374 471h1v1h-1zM375 471h1v1h-1zM376 472h1v1h-1zM377 472h1v1h-1zM378 472h1v1h-1zM379 472h1v1h-1zM380 473h1v1h-1zM381 473h1v1h-1zM382 473h1v1h-1zM383 473h1v1h-1zM384 473h1v1h-1zM385 473h1v1h-1zM386 473h1v1h-1zM387 473h1v1h-1zM388 473h1v1h-1zM389 473h1v1h-1zM390 474h1v1h-1zM391 474h1v1h-1zM392 474h1v1h-1zM393 474h1v1h-1zM394 474h1v1h-1zM395 474h1v1h-1zM396 475h1v1h-1zM397 475h1v1h-1zM398 475h1v1h-1zM399 475h1v1h-1zM400 476h1v1h-1zM401 476h1v1h-1zM402 477h1v1h-1zM403 477h1v1h-1zM404 477h1v1h-1zM405 477h1v1h-1zM406 477h1v1h-1zM407 477h1v1h-1zM408 477h1v1h-1zM409 477h1v1h-1zM410 477h1v1h-1zM411 477h1v1h-1zM412 477h1v1h-1zM413 477h1v1h-1zM414 477h1v1h-1zM415 478h1v1h-1zM416 478h1v1h-1zM417 478h1v1h-1zM418 478h1v1h-1zM419 478h1v1h-1zM420 478h1v1h-1zM421 478h1v1h-1zM422 479h1v1h-1zM423 479h1v1h-1zM424 479h1v1h-1zM425 479h1v1h-1zM426 479h1v1h-1zM427 479h1v1h-1zM428 479h1v1h-1zM429 479h1v1h-1zM430 479h1v1h-1zM431 479h1v1h-1zM432 479h1v1h-1zM433 480h1v1h-1zM434 480h1v1h-1zM435 480h1v1h-1zM436 480h1v1h-1zM437 480h1v1h-1zM438 480h1v1h-1zM439 480h1v1h-1zM440 480h1v1h-1zM441 480h1v1h-1zM442 481h1v1h-1zM443 481h1v1h-1zM444 481h1v1h-1zM445 481h1v1h-1zM446 482h1v1h-1zM447 482h1v1h-1zM448 483h1v1h-1zM449 483h1v1h-1zM450 484h1v1h-1zM451 484h1v1h-1zM452 484h1v1h-1zM453 484h1v1h-1zM454 484h1v1h-1zM455 484h1v1h-1zM456 484h1v1h-1zM457 484h1v1h-1zM458 484h1v1h-1zM459 484h1v1h-1zM460 484h1v1h-1zM461 484h1v1h-1zM462 484h1v1h-1zM463 485h1v1h-1zM464 485h1v1h-1zM465 485h1v1h-1zM466 485h1v1h-1zM467 485h1v1h-1zM468 485h1v1h-1zM469 485h1v1h-1zM470 485h1v1h-1zM471 485h1v1h-1zM472 486h1v1h-1zM473 486h1v1h-1zM474 486h1v1h-1zM475 486h1v1h-1zM476 486h1v1h-1zM477 486h1v1h-1zM478 486h1v1h-1zM479 487h1v1h-1zM480 487h1v1h-1zM481 488h1v1h-1zM482 488h1v1h-1zM483 488h1v1h-1zM484 488h1v1h-1zM485 488h1v1h-1zM486 474h1v15h-1zM487 444h1v31h-1zM488 426h1v19h-1zM489 420h1v7h-1zM490 417h1v14h-1zM491 430h1v24h-1zM492 454h1v25h-1zM493 384h1v106h-1zM494 174h1v210h-1zM495 65h1v109h-1zM496 59h1v7h-1zM497 56h1v73h-1zM498 129h1v145h-1zM499 274h1v144h-1zM500 418h1v73h-1zM501 273h1v145h-1zM502 129h1v144h-1zM503 56h1v73h-1zM504 129h1v145h-1zM505 274h1v145h-1zM506 419h1v73h-1zM507 454h1v25h-1zM508 430h1v24h-1zM509 417h1v14h-1zM510 430h1v25h-1zM511 455h1v25h-1zM512 480h1v13h-1zM513 493h1v1h-1zM514 494h1v2h-1zM515 496h1v1h-1zM516 494h1v2h-1zM517 493h1v1h-1zM518 494h1v1h-1zM519 494h1v1h-1zM520 494h1v1h-1zM521 493h1v1h-1zM522 493h1v1h-1zM523 494h1v1h-1zM524 494h1v1h-1zM525 495h1v1h-1zM526 495h1v1h-1zM527 494h1v1h-1zM528 494h1v1h-1zM529 494h1v1h-1zM530 495h1v1h-1zM531 495h1v1h-1zM532 495h1v1h-1zM533 495h1v1h-1zM534 493h1v2h-1zM535 492h1v1h-1zM536 493h1v1h-1zM537 494h1v1h-1zM538 495h1v1h-1zM539 494h1v1h-1zM540 493h1v1h-1zM541 494h1v2h-1zM542 496h1v1h-1zM543 494h1v2h-1zM544 493h1v1h-1zM545 494h1v1h-1zM546 495h1v2h-1zM547 497h1v2h-1zM548 499h1v2h-1zM549 501h1v2h-1zM550 499h1v2h-1zM551 497h1v2h-1zM552 498h1v2h-1zM553 500h1v2h-1zM554 499h1v2h-1zM555 498h1v1h-1zM556 498h1v1h-1zM557 498h1v1h-1zM558 498h1v1h-1zM559 498h1v1h-1zM560 497h1v1h-1zM561 497h1v1h-1zM562 498h1v1h-1zM563 499h1v2h-1zM564 501h1v1h-1zM565 501h1v2h-1zM566 497h1v4h-1zM567 494h1v3h-1zM568 492h1v2h-1zM569 494h1v4h-1zM570 498h1v3h-1zM571 494h1v4h-1zM572 491h1v3h-1zM573 493h1v4h-1zM574 497h1v3h-1zM575 500h1v2h-1zM576 499h1v2h-1zM577 500h1v1h-1zM578 501h1v3h-1zM579 504h1v4h-1zM580 482h1v25h-1zM581 441h1v42h-1zM582 420h1v22h-1zM583 441h1v41h-1zM584 455h1v48h-1zM585 407h1v49h-1zM586 430h1v51h-1zM587 461h1v43h-1zM588 418h1v23h-1zM589 440h1v43h-1zM590 482h1v22h-1zM591 494h1v5h-1zM592 496h1v4h-1zM593 500h1v4h-1zM594 498h1v3h-1zM595 499h1v4h-1zM596 503h1v5h-1zM597 508h1v3h-1zM598 506h1v3h-1zM599 504h1v3h-1zM600 507h1v3h-1zM601 507h1v2h-1zM602 505h1v2h-1zM603 506h1v2h-1zM604 505h1v2h-1zM605 503h1v2h-1zM606 502h1v1h-1zM607 500h1v2h-1zM608 498h1v2h-1zM609 500h1v4h-1zM610 504h1v3h-1zM611 507h1v2h-1zM612 509h1v7h-1zM613 515h1v7h-1zM614 508h1v7h-1zM615 509h1v1h-1zM616 507h1v3h-1zM617 501h1v6h-1zM618 498h1v3h-1zM619 501h1v4h-1zM620 505h1v3h-1zM621 508h1v2h-1zM622 510h1v2h-1zM623 512h1v2h-1zM624 513h1v1h-1zM625 512h1v1h-1zM626 510h1v3h-1zM627 506h1v4h-1zM628 506h1v3h-1zM629 502h1v4h-1zM630 488h1v22h-1zM631 465h1v24h-1zM632 421h1v45h-1zM633 454h1v57h-1zM634 399h1v56h-1zM635 454h1v57h-1zM636 397h1v57h-1zM637 453h1v58h-1zM638 416h1v50h-1zM639 465h1v12h-1zM640 441h1v71h-1zM641 476h1v46h-1zM642 515h1v7h-1zM643 511h1v8h-1zM644 516h1v6h-1zM645 511h1v6h-1zM646 511h1v1h-1zM647 508h1v4h-1zM648 504h1v5h-1zM649 508h1v5h-1zM650 510h1v3h-1zM651 510h1v4h-1zM652 506h1v6h-1zM653 510h1v3h-1zM654 508h1v9h-1zM655 513h1v12h-1zM656 513h1v18h-1zM657 510h1v40h-1zM658 509h1v7h-1zM659 503h1v7h-1zM660 509h1v6h-1zM661 508h1v7h-1zM662 502h1v9h-1zM663 509h1v7h-1zM664 503h1v9h-1zM665 509h1v7h-1zM666 503h1v9h-1zM667 499h1v17h-1zM668 497h1v19h-1zM669 480h1v19h-1zM670 473h1v42h-1zM671 494h1v23h-1zM672 477h1v21h-1zM673 497h1v20h-1zM674 495h1v22h-1zM675 511h1v6h-1zM676 511h1v7h-1zM677 507h1v11h-1zM678 501h1v10h-1zM679 509h1v9h-1zM680 516h1v8h-1zM681 517h1v6h-1zM682 511h1v9h-1zM683 511h1v6h-1zM684 506h1v8h-1zM685 512h1v16h-1zM686 516h1v7h-1zM687 514h1v14h-1zM688 503h1v14h-1zM689 500h1v12h-1zM690 505h1v21h-1zM691 510h1v18h-1zM692 512h1v22h-1zM693 514h1v12h-1zM694 504h1v16h-1zM695 490h1v30h-1zM696 467h1v53h-1zM697 454h1v66h-1zM698 450h1v70h-1zM699 480h1v40h-1zM700 440h1v81h-1zM701 505h1v16h-1zM702 441h1v83h-1zM703 481h1v43h-1zM704 515h1v7h-1zM705 509h1v13h-1zM706 506h1v18h-1zM707 520h1v6h-1zM708 520h1v44h-1zM709 514h1v9h-1zM710 513h1v9h-1zM711 517h1v6h-1zM712 518h1v10h-1zM713 520h1v7h-1zM714 512h1v12h-1zM715 505h1v18h-1zM716 502h1v14h-1zM717 508h1v38h-1zM718 515h1v21h-1zM719 502h1v21h-1zM720 500h1v24h-1zM721 510h1v14h-1zM722 510h1v14h-1zM723 509h1v27h-1zM724 515h1v9h-1zM725 497h1v27h-1zM726 497h1v27h-1zM727 505h1v26h-1zM728 515h1v31h-1zM729 514h1v13h-1zM730 514h1v13h-1zM731 519h1v21h-1zM732 523h1v32h-1zM733 503h1v22h-1zM734 503h1v22h-1zM735 508h1v30h-1zM736 510h1v28h-1zM737 492h1v46h-1zM738 492h1v34h-1zM739 464h1v62h-1zM740 465h1v61h-1zM741 442h1v84h-1zM742 484h1v42h-1zM743 442h1v84h-1zM744 484h1v42h-1zM745 510h1v19h-1zM746 512h1v18h-1zM747 510h1v20h-1zM748 509h1v14h-1zM749 512h1v20h-1zM750 512h1v20h-1zM751 510h1v18h-1zM752 501h1v27h-1zM753 505h1v24h-1zM754 505h1v24h-1zM755 505h1v24h-1zM756 510h1v30h-1zM757 508h1v23h-1zM758 506h1v22h-1zM759 500h1v28h-1zM760 504h1v24h-1zM761 502h1v27h-1zM762 511h1v18h-1zM763 504h1v25h-1zM764 510h1v19h-1zM765 505h1v24h-1zM766 507h1v23h-1zM767 519h1v11h-1zM768 518h1v12h-1zM769 495h1v35h-1zM770 461h1v69h-1zM771 461h1v69h-1zM772 470h1v60h-1zM773 441h1v90h-1zM774 441h1v90h-1zM775 513h1v18h-1zM776 512h1v19h-1zM777 508h1v23h-1zM778 514h1v17h-1zM779 511h1v20h-1zM780 504h1v27h-1zM781 510h1v22h-1zM782 521h1v11h-1zM783 523h1v9h-1zM784 520h1v12h-1zM785 518h1v14h-1zM786 522h1v10h-1zM787 516h1v16h-1zM788 510h1v22h-1zM789 519h1v13h-1zM790 522h1v11h-1zM791 515h1v18h-1zM792 510h1v23h-1zM793 508h1v38h-1zM794 506h1v27h-1zM795 461h1v72h-1zM796 505h1v28h-1zM797 515h1v18h-1zM798 441h1v92h-1zM799 441h1v92h-1zM800 504h1v50h-1zM801 497h1v37h-1zM802 508h1v26h-1zM803 517h1v17h-1zM804 498h1v36h-1zM805 520h1v14h-1zM806 521h1v13h-1zM807 501h1v34h-1zM808 506h1v29h-1zM809 511h1v24h-1zM810 507h1v28h-1zM811 510h1v25h-1zM812 509h1v26h-1zM813 505h1v30h-1zM814 514h1v22h-1zM815 510h1v29h-1zM816 461h1v75h-1zM817 498h1v38h-1zM818 496h1v40h-1zM819 441h1v95h-1zM820 441h1v95h-1zM821 512h1v25h-1zM822 502h1v35h-1zM823 514h1v23h-1zM824 520h1v22h-1zM825 521h1v16h-1zM826 520h1v17h-1zM827 511h1v26h-1zM828 508h1v30h-1zM829 512h1v26h-1zM830 518h1v20h-1zM831 514h1v24h-1zM832 523h1v15h-1zM833 461h1v77h-1zM834 502h1v37h-1zM835 513h1v26h-1zM836 441h1v98h-1zM837 507h1v32h-1zM838 513h1v26h-1zM839 509h1v30h-1zM840 515h1v24h-1zM841 522h1v18h-1zM842 506h1v34h-1zM843 521h1v19h-1zM844 509h1v31h-1zM845 522h1v18h-1zM846 512h1v28h-1zM847 495h1v46h-1zM848 517h1v30h-1zM849 461h1v80h-1zM850 513h1v28h-1zM851 503h1v38h-1zM852 441h1v100h-1zM853 513h1v52h-1zM854 508h1v34h-1zM855 512h1v30h-1zM856 496h1v46h-1zM857 507h1v35h-1zM858 509h1v33h-1zM859 517h1v26h-1zM860 511h1v32h-1zM861 515h1v28h-1zM862 461h1v96h-1zM863 502h1v41h-1zM864 503h1v41h-1zM865 441h1v103h-1zM866 506h1v46h-1zM867 502h1v42h-1zM868 505h1v39h-1zM869 498h1v53h-1zM870 504h1v41h-1zM871 503h1v42h-1zM872 506h1v39h-1zM873 517h1v28h-1zM874 508h1v37h-1zM875 461h1v84h-1zM876 501h1v45h-1zM877 502h1v44h-1zM878 441h1v105h-1zM879 503h1v43h-1zM880 491h1v55h-1zM881 496h1v51h-1zM882 482h1v65h-1zM883 501h1v57h-1zM884 505h1v42h-1zM885 499h1v48h-1zM886 461h1v86h-1zM887 498h1v49h-1zM888 494h1v53h-1zM889 441h1v107h-1zM890 489h1v59h-1zM891 510h1v38h-1zM892 506h1v42h-1zM893 500h1v48h-1zM894 503h1v45h-1zM895 507h1v41h-1zM896 461h1v87h-1zM897 495h1v53h-1zM898 486h1v63h-1zM899 441h1v108h-1zM900 501h1v63h-1zM901 507h1v42h-1zM902 503h1v46h-1zM903 502h1v47h-1zM904 513h1v36h-1zM905 502h1v47h-1zM906 501h1v48h-1zM907 458h1v92h-1zM908 510h1v40h-1zM909 441h1v109h-1zM910 502h1v48h-1zM911 514h1v36h-1zM912 513h1v37h-1zM913 498h1v52h-1zM914 505h1v45h-1zM915 458h1v92h-1zM916 499h1v52h-1zM917 441h1v110h-1zM918 508h1v43h-1zM919 512h1v39h-1zM920 488h1v63h-1zM921 496h1v55h-1zM922 512h1v39h-1zM923 491h1v60h-1zM924 458h1v94h-1zM925 505h1v49h-1zM926 441h1v111h-1zM927 502h1v50h-1zM928 509h1v43h-1zM929 507h1v45h-1zM930 496h1v57h-1zM931 458h1v95h-1zM932 499h1v54h-1zM933 441h1v112h-1zM934 497h1v56h-1zM935 504h1v63h-1zM936 506h1v47h-1zM937 496h1v58h-1zM938 458h1v96h-1zM939 492h1v62h-1zM940 441h1v113h-1zM941 504h1v50h-1zM942 500h1v54h-1zM943 514h1v53h-1zM944 500h1v54h-1zM945 458h1v97h-1zM946 510h1v45h-1zM947 441h1v114h-1zM948 498h1v57h-1zM949 511h1v44h-1zM950 512h1v43h-1zM951 496h1v59h-1zM952 458h1v97h-1zM953 485h1v83h-1zM954 441h1v114h-1zM955 510h1v45h-1zM956 501h1v55h-1zM957 502h1v54h-1zM958 458h1v98h-1zM959 511h1v45h-1zM960 441h1v115h-1zM961 508h1v48h-1zM962 502h1v54h-1zM963 506h1v50h-1zM964 458h1v98h-1zM965 507h1v50h-1zM966 441h1v116h-1zM967 497h1v60h-1zM968 500h1v57h-1zM969 458h1v99h-1zM970 495h1v62h-1zM971 441h1v116h-1zM972 512h1v45h-1zM973 493h1v64h-1zM974 498h1v59h-1zM975 458h1v99h-1zM976 501h1v57h-1zM977 441h1v117h-1zM978 495h1v63h-1zM979 509h1v49h-1zM980 458h1v100h-1zM981 506h1v52h-1zM982 441h1v117h-1zM983 504h1v54h-1zM984 498h1v63h-1zM985 458h1v101h-1zM986 486h1v73h-1zM987 441h1v118h-1zM988 505h1v54h-1zM989 496h1v63h-1zM990 458h1v101h-1zM991 495h1v64h-1zM992 441h1v118h-1zM993 504h1v55h-1zM994 458h1v101h-1zM995 505h1v54h-1zM996 441h1v119h-1zM997 509h1v51h-1zM998 492h1v68h-1zM999 498h1v62h-1zM1000 441h1v119h-1zM1001 457h1v103h-1zM1002 494h1v66h-1zM1003 502h1v58h-1zM1004 503h1v57h-1zM1005 441h1v119h-1zM1006 457h1v103h-1zM1007 512h1v48h-1zM1008 510h1v51h-1zM1009 441h1v120h-1zM1010 457h1v104h-1zM1011 515h1v46h-1zM1012 499h1v62h-1zM1013 441h1v120h-1zM1014 457h1v104h-1zM1015 496h1v65h-1zM1016 509h1v52h-1zM1017 441h1v120h-1zM1018 457h1v104h-1zM1019 502h1v59h-1zM1020 441h1v120h-1zM1021 457h1v104h-1zM1022 500h1v61h-1zM1023 505h1v57h-1zM1024 441h1v121h-1zM1025 457h1v105h-1zM1026 498h1v64h-1zM1027 441h1v121h-1zM1028 457h1v105h-1zM1029 492h1v70h-1zM1030 489h1v73h-1zM1031 441h1v121h-1zM1032 457h1v105h-1zM1033 509h1v53h-1zM1034 441h1v121h-1zM1035 457h1v105h-1zM1036 511h1v51h-1zM1037 441h1v121h-1zM1038 457h1v106h-1zM1039 491h1v72h-1zM1040 508h1v55h-1zM1041 441h1v122h-1zM1042 457h1v106h-1zM1043 501h1v62h-1zM1044 441h1v122h-1zM1045 457h1v106h-1zM1046 492h1v71h-1zM1047 441h1v122h-1zM1048 457h1v106h-1zM1049 490h1v73h-1zM1050 441h1v122h-1zM1051 505h1v58h-1zM1052 441h1v122h-1zM1053 457h1v107h-1zM1054 487h1v77h-1zM1055 441h1v123h-1zM1056 457h1v107h-1zM1057 500h1v64h-1zM1058 441h1v123h-1zM1059 457h1v107h-1zM1060 491h1v73h-1zM1061 441h1v123h-1zM1062 501h1v63h-1zM1063 441h1v123h-1zM1064 457h1v107h-1zM1065 500h1v64h-1zM1066 441h1v123h-1zM1067 487h1v77h-1zM1068 441h1v124h-1zM1069 457h1v108h-1zM1070 478h1v87h-1zM1071 441h1v124h-1zM1072 477h1v88h-1zM1073 441h1v124h-1zM1074 457h1v108h-1zM1075 493h1v72h-1zM1076 441h1v124h-1zM1077 455h1v110h-1zM1078 441h1v124h-1zM1079 455h1v110h-1zM1080 441h1v124h-1zM1081 497h1v68h-1zM1082 441h1v124h-1zM1083 455h1v111h-1zM1084 441h1v125h-1zM1085 455h1v111h-1zM1086 441h1v125h-1zM1087 455h1v111h-1zM1088 455h1v111h-1zM1089 455h1v111h-1zM1090 441h1v125h-1zM1091 455h1v111h-1zM1092 455h1v111h-1zM1093 455h1v111h-1zM1094 441h1v125h-1zM1095 455h1v111h-1zM1096 455h1v111h-1zM1097 455h1v111h-1zM1098 441h1v125h-1zM1099 455h1v111h-1zM1100 441h1v125h-1zM1101 455h1v111h-1zM1102 441h1v125h-1zM1103 455h1v111h-1zM1104 477h1v89h-1zM1105 455h1v112h-1zM1106 442h1v125h-1zM1107 442h1v125h-1zM1108 442h1v125h-1zM1109 442h1v125h-1zM1110 441h1v126h-1zM1111 442h1v125h-1zM1112 442h1v125h-1zM1113 475h1v92h-1zM1114 442h1v125h-1zM1115 442h1v125h-1zM1116 442h1v125h-1zM1117 442h1v125h-1zM1118 475h1v92h-1zM1119 442h1v125h-1zM1120 442h1v125h-1zM1121 478h1v89h-1zM1122 442h1v125h-1zM1123 476h1v91h-1zM1124 436h1v131h-1zM1125 442h1v125h-1zM1126 475h1v92h-1zM1127 442h1v125h-1zM1128 442h1v125h-1zM1129 476h1v91h-1zM1130 442h1v125h-1zM1131 442h1v125h-1zM1132 464h1v103h-1zM1133 442h1v125h-1zM1134 442h1v125h-1zM1135 455h1v112h-1zM1136 442h1v126h-1zM1137 442h1v126h-1zM1138 442h1v126h-1zM1139 442h1v126h-1zM1140 442h1v126h-1zM1141 442h1v126h-1zM1142 455h1v113h-1zM1143 442h1v126h-1zM1144 442h1v126h-1zM1145 442h1v126h-1zM1146 456h1v112h-1zM1147 442h1v126h-1zM1148 442h1v126h-1zM1149 442h1v126h-1zM1150 442h1v126h-1zM1151 442h1v126h-1zM1152 442h1v126h-1zM1153 439h1v129h-1zM1154 442h1v126h-1zM1155 442h1v126h-1zM1156 438h1v130h-1zM1157 442h1v126h-1zM1158 442h1v126h-1zM1159 442h1v126h-1zM1160 440h1v128h-1zM1161 442h1v126h-1zM1162 442h1v132h-1zM1163 442h1v126h-1zM1164 442h1v126h-1zM1165 442h1v126h-1zM1166 442h1v126h-1zM1167 442h1v126h-1zM1168 442h1v126h-1zM1169 442h1v126h-1zM1170 442h1v126h-1zM1171 442h1v126h-1zM1172 442h1v126h-1zM1173 442h1v126h-1zM1174 442h1v126h-1zM1175 440h1v128h-1zM1176 435h1v133h-1zM1177 440h1v128h-1zM1178 442h1v127h-1zM1179 440h1v129h-1zM1180 442h1v127h-1zM1181 442h1v174h-1zM1182 441h1v128h-1zM1183 442h1v127h-1zM1184 442h1v127h-1zM1185 442h1v127h-1zM1186 442h1v127h-1zM1187 442h1v127h-1zM1188 442h1v127h-1zM1189 442h1v127h-1zM1190 442h1v127h-1zM1191 442h1v127h-1zM1192 442h1v127h-1zM1193 442h1v127h-1zM1194 442h1v127h-1zM1195 442h1v127h-1zM1196 442h1v127h-1zM1197 442h1v127h-1zM1198 442h1v127h-1zM1199 442h1v127h-1zM1200 442h1v136h-1zM1201 443h1v126h-1zM1202 443h1v126h-1zM1203 443h1v126h-1zM1204 443h1v126h-1zM1205 443h1v126h-1zM1206 443h1v126h-1zM1207 443h1v148h-1zM1208 443h1v126h-1zM1209 443h1v126h-1zM1210 443h1v126h-1zM1211 440h1v139h-1zM1212 443h1v126h-1zM1213 443h1v126h-1zM1214 443h1v126h-1zM1215 443h1v126h-1zM1216 443h1v126h-1zM1217 443h1v126h-1zM1218 443h1v126h-1zM1219 443h1v126h-1zM1220 443h1v126h-1zM1221 443h1v126h-1zM1222 443h1v136h-1zM1223 443h1v126h-1zM1224 438h1v131h-1zM1225 443h1v126h-1zM1226 441h1v128h-1zM1227 443h1v126h-1zM1228 443h1v126h-1zM1229 443h1v126h-1zM1230 443h1v126h-1zM1231 443h1v126h-1zM1232 443h1v126h-1zM1233 443h1v126h-1zM1234 443h1v126h-1zM1235 443h1v127h-1zM1236 443h1v127h-1zM1237 439h1v131h-1zM1238 443h1v127h-1zM1239 443h1v127h-1zM1240 443h1v127h-1zM1241 443h1v143h-1zM1242 443h1v127h-1zM1243 443h1v127h-1zM1244 443h1v127h-1zM1245 443h1v127h-1zM1246 443h1v127h-1zM1247 443h1v127h-1zM1248 444h1v126h-1zM1249 441h1v129h-1zM1250 439h1v152h-1zM1251 444h1v126h-1zM1252 444h1v126h-1zM1253 444h1v126h-1zM1254 444h1v126h-1zM1255 444h1v126h-1zM1256 442h1v128h-1zM1257 444h1v126h-1zM1258 444h1v126h-1zM1259 444h1v126h-1zM1260 440h1v144h-1zM1261 444h1v126h-1zM1262 444h1v126h-1zM1263 444h1v142h-1zM1264 444h1v126h-1zM1265 444h1v126h-1zM1266 444h1v126h-1zM1267 444h1v126h-1zM1268 444h1v126h-1zM1269 444h1v126h-1zM1270 444h1v126h-1zM1271 444h1v126h-1zM1272 445h1v125h-1zM1273 445h1v125h-1zM1274 445h1v136h-1zM1275 445h1v125h-1zM1276 445h1v125h-1zM1277 440h1v130h-1zM1278 445h1v125h-1zM1279 445h1v125h-1zM1280 445h1v125h-1zM1281 445h1v125h-1zM1282 445h1v125h-1zM1283 445h1v125h-1zM1284 442h1v128h-1zM1285 446h1v124h-1zM1286 446h1v124h-1zM1287 440h1v130h-1zM1288 446h1v124h-1zM1289 446h1v124h-1zM1290 446h1v125h-1zM1291 444h1v127h-1zM1292 446h1v125h-1zM1293 446h1v125h-1zM1294 443h1v128h-1zM1295 446h1v127h-1zM1296 446h1v125h-1zM1297 445h1v126h-1zM1298 447h1v124h-1zM1299 447h1v124h-1zM1300 447h1v127h-1zM1301 442h1v139h-1zM1302 447h1v124h-1zM1303 447h1v124h-1zM1304 447h1v124h-1zM1305 447h1v133h-1zM1306 443h1v128h-1zM1307 448h1v124h-1zM1308 448h1v124h-1zM1309 448h1v124h-1zM1310 448h1v137h-1zM1311 446h1v126h-1zM1312 448h1v124h-1zM1313 448h1v129h-1zM1314 448h1v127h-1zM1315 446h1v126h-1zM1316 449h1v123h-1zM1317 449h1v123h-1zM1318 446h1v126h-1zM1319 449h1v123h-1zM1320 445h1v127h-1zM1321 446h1v130h-1zM1322 449h1v123h-1zM1323 449h1v123h-1zM1324 449h1v124h-1zM1325 450h1v123h-1zM1326 450h1v129h-1zM1327 450h1v123h-1zM1328 450h1v123h-1zM1329 450h1v123h-1zM1330 450h1v123h-1zM1331 447h1v126h-1zM1332 450h1v123h-1zM1333 451h1v122h-1zM1334 451h1v122h-1zM1335 451h1v130h-1zM1336 451h1v122h-1zM1337 448h1v125h-1zM1338 450h1v123h-1zM1339 451h1v122h-1zM1340 449h1v124h-1zM1341 452h1v122h-1zM1342 448h1v126h-1zM1343 448h1v141h-1zM1344 452h1v125h-1zM1345 453h1v121h-1zM1346 450h1v124h-1zM1347 453h1v121h-1zM1348 454h1v130h-1zM1349 449h1v125h-1zM1350 454h1v120h-1zM1351 454h1v120h-1zM1352 455h1v119h-1zM1353 450h1v125h-1zM1354 455h1v120h-1zM1355 455h1v120h-1zM1356 456h1v119h-1zM1357 452h1v123h-1zM1358 456h1v119h-1zM1359 454h1v121h-1zM1360 457h1v118h-1zM1361 452h1v136h-1zM1362 457h1v134h-1zM1363 458h1v117h-1zM1364 455h1v120h-1zM1365 458h1v117h-1zM1366 459h1v117h-1zM1367 459h1v117h-1zM1368 459h1v117h-1zM1369 460h1v116h-1zM1370 458h1v136h-1zM1371 456h1v126h-1zM1372 461h1v115h-1zM1373 461h1v115h-1zM1374 457h1v119h-1zM1375 459h1v117h-1zM1376 462h1v114h-1zM1377 463h1v113h-1zM1378 463h1v114h-1zM1379 463h1v114h-1zM1380 464h1v113h-1zM1381 464h1v113h-1zM1382 459h1v118h-1zM1383 465h1v112h-1zM1384 465h1v112h-1zM1385 466h1v130h-1zM1386 466h1v111h-1zM1387 467h1v111h-1zM1388 467h1v122h-1zM1389 467h1v111h-1zM1390 468h1v110h-1zM1391 468h1v122h-1zM1392 465h1v113h-1zM1393 465h1v113h-1zM1394 469h1v109h-1zM1395 470h1v108h-1zM1396 470h1v109h-1zM1397 471h1v108h-1zM1398 471h1v114h-1zM1399 472h1v107h-1zM1400 471h1v108h-1zM1401 469h1v110h-1zM1402 473h1v115h-1zM1403 474h1v122h-1zM1404 474h1v106h-1zM1405 473h1v107h-1zM1406 476h1v127h-1zM1407 475h1v123h-1zM1408 477h1v103h-1zM1409 475h1v105h-1zM1410 478h1v103h-1zM1411 479h1v102h-1zM1412 480h1v101h-1zM1413 481h1v100h-1zM1414 482h1v106h-1zM1415 483h1v98h-1zM1416 480h1v121h-1zM1417 486h1v96h-1zM1418 485h1v97h-1zM1419 488h1v94h-1zM1420 489h1v93h-1zM1421 490h1v92h-1zM1422 491h1v110h-1zM1423 492h1v91h-1zM1424 489h1v94h-1zM1425 494h1v89h-1zM1426 495h1v88h-1zM1427 496h1v87h-1zM1428 497h1v96h-1zM1429 498h1v86h-1zM1430 499h1v85h-1zM1431 500h1v84h-1zM1432 501h1v83h-1zM1433 499h1v86h-1zM1434 503h1v82h-1zM1435 504h1v81h-1zM1436 501h1v84h-1zM1437 501h1v84h-1zM1438 504h1v82h-1zM1439 502h1v84h-1zM1440 503h1v83h-1zM1441 503h1v96h-1zM1442 503h1v84h-1zM1443 503h1v84h-1zM1444 501h1v128h-1zM1445 503h1v84h-1zM1446 498h1v118h-1zM1447 503h1v85h-1zM1448 503h1v85h-1zM1449 498h1v110h-1zM1450 502h1v87h-1zM1451 503h1v113h-1zM1452 503h1v87h-1zM1453 503h1v87h-1zM1454 503h1v103h-1zM1455 501h1v90h-1zM1456 501h1v90h-1zM1457 503h1v88h-1zM1458 503h1v105h-1zM1459 503h1v113h-1zM1460 503h1v89h-1zM1461 504h1v97h-1zM1462 504h1v107h-1zM1463 504h1v89h-1zM1464 504h1v90h-1zM1465 505h1v96h-1zM1466 505h1v90h-1zM1467 505h1v90h-1zM1468 506h1v90h-1zM1469 506h1v91h-1zM1470 506h1v110h-1zM1471 505h1v92h-1zM1472 507h1v91h-1zM1473 508h1v108h-1zM1474 508h1v91h-1zM1475 509h1v120h-1zM1476 509h1v91h-1zM1477 510h1v101h-1zM1478 510h1v101h-1zM1479 511h1v105h-1zM1480 511h1v91h-1zM1481 512h1v109h-1zM1482 512h1v92h-1zM1483 513h1v92h-1zM1484 514h1v92h-1zM1485 514h1v102h-1zM1486 515h1v93h-1zM1487 516h1v93h-1zM1488 516h1v94h-1zM1489 517h1v99h-1zM1490 518h1v94h-1zM1491 518h1v95h-1zM1492 518h1v111h-1zM1493 519h1v96h-1zM1494 519h1v97h-1zM1495 514h1v103h-1zM1496 518h1v100h-1zM1497 515h1v104h-1zM1498 520h1v100h-1z"/>
</svg>
<div class="yl" style="top:9px">30dB</div><div class="yl" style="top:70px">0dB</div><div class="yl" style="top:131px">-30dB</div><div class="yl" style="top:193px">-60dB</div><div class="yl" style="top:254px">-90dB</div><div class="yl" style="top:315px">-120dB</div><div class="yl" style="top:376px">-150dB</div><div class="yl" style="top:437px">-180dB</div><div class="yl" style="top:499px">-210dB</div><div class="yl" style="top:560px">-240dB</div><div class="yl" style="top:621px">-270dB</div><div class="xl" style="left:84px">1KHz</div><div class="xl" style="left:368px">10KHz</div><div class="xl" style="left:651px">100KHz</div><div class="xl" style="left:934px">1MHz</div><div class="xl" style="left:1218px">10MHz</div>
<div class="tt" style="left:762px;top:0px">V(1)</div>
</body></html>
